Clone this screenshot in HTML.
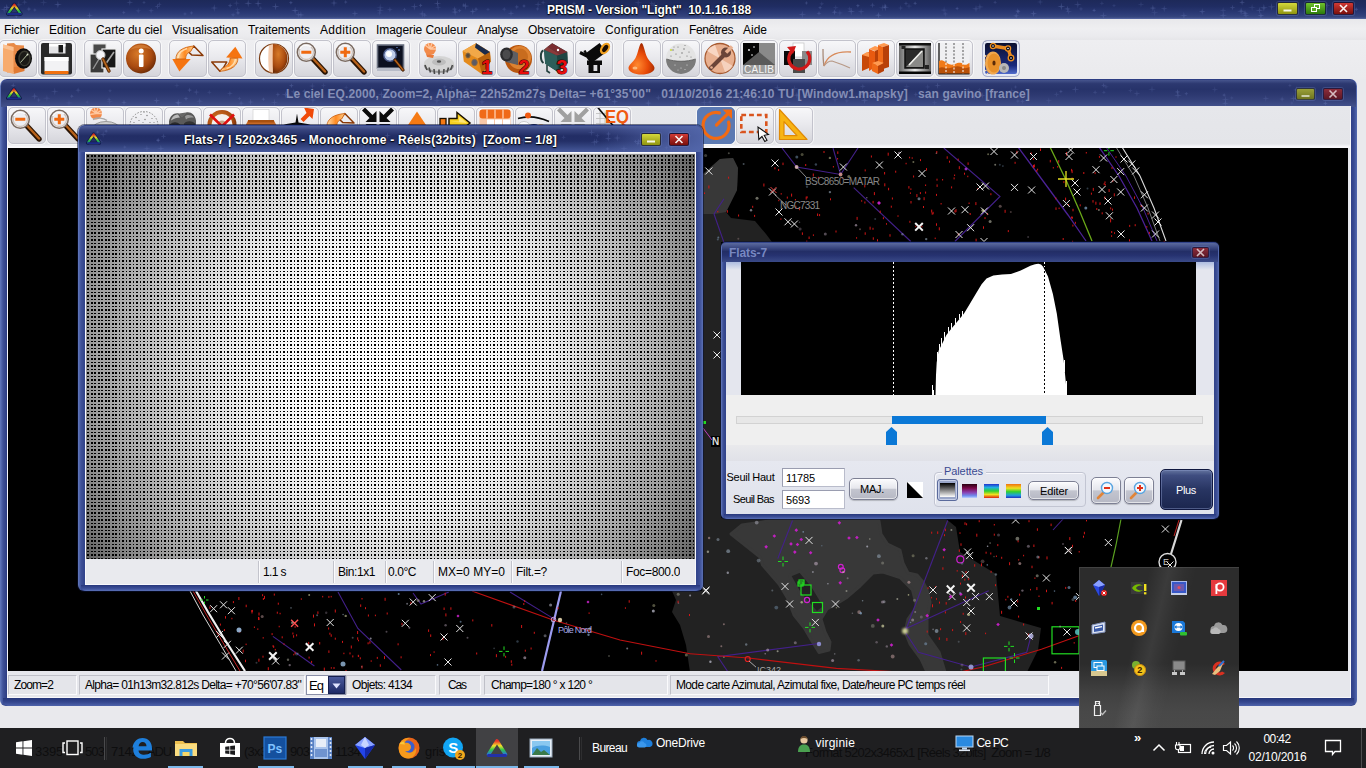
<!DOCTYPE html>
<html><head><meta charset="utf-8"><title>PRISM</title>
<style>
*{box-sizing:border-box;margin:0;padding:0}
html,body{width:1366px;height:768px;overflow:hidden;background:#e9e9ed;font-family:"Liberation Sans",sans-serif;font-size:12px;color:#000}
.a,.t,svg{position:absolute}
.t{white-space:pre}
.tbar{background:linear-gradient(#1d2959 0%,#202d63 35%,#2b3a76 70%,#36467f 90%,#5a6aa6 100%)}
.tb{position:absolute;width:38px;height:37px;border:1px solid #c3c3cc;border-radius:5px;background:linear-gradient(#f7f7f9 0%,#eaeaee 45%,#d5d5db 100%);box-shadow:0 0 0 1px rgba(255,255,255,.6);overflow:hidden}
.tb svg{left:0;top:0}
.wb{position:absolute;border-radius:2px;border:1px solid rgba(220,225,255,.45)}
.sp{position:absolute;top:675px;height:20px;border:1px solid #bfc0c8;border-right-color:#fafafc;border-bottom-color:#fafafc;background:#e4e5ea}
.btn{position:absolute;border:1px solid #7d8094;border-radius:5px;background:linear-gradient(#fcfcfe 0%,#e6e7ed 46%,#c3c5cf 52%,#b6b8c4 100%);box-shadow:0 1px 1px rgba(0,0,0,.2),inset 0 0 0 1px rgba(255,255,255,.6)}

</style></head><body>
<div class="a tbar" style="left:0;top:0;width:1366px;height:19px"></div>
<svg style="left:0px;top:0px" width="1366" height="18" viewBox="0 0 1366 18"><path d="M185.0 11.9L185.6 13.3L187.0 13.9L185.6 14.5L185.0 15.9L184.4 14.5L183.0 13.9L184.4 13.3Z" fill="#7f90d0" opacity="0.20"/><path d="M676.8 4.8L677.4 7.7L680.3 8.3L677.4 8.9L676.8 11.8L676.2 8.9L673.3 8.3L676.2 7.7Z" fill="#7f90d0" opacity="0.29"/><path d="M129.8 -1.1L130.4 1.8L133.3 2.4L130.4 3.0L129.8 5.9L129.2 3.0L126.3 2.4L129.2 1.8Z" fill="#7f90d0" opacity="0.23"/><path d="M1040.2 -1.5L1040.8 1.4L1043.7 2.0L1040.8 2.6L1040.2 5.5L1039.6 2.6L1036.7 2.0L1039.6 1.4Z" fill="#7f90d0" opacity="0.20"/><path d="M1094.1 8.3L1094.7 9.7L1096.1 10.3L1094.7 10.9L1094.1 12.3L1093.5 10.9L1092.1 10.3L1093.5 9.7Z" fill="#7f90d0" opacity="0.30"/><path d="M43.7 -1.6L44.3 1.8L47.7 2.4L44.3 3.0L43.7 6.4L43.1 3.0L39.7 2.4L43.1 1.8Z" fill="#7f90d0" opacity="0.16"/><path d="M1202.2 8.1L1202.8 11.0L1205.7 11.6L1202.8 12.2L1202.2 15.1L1201.6 12.2L1198.7 11.6L1201.6 11.0Z" fill="#7f90d0" opacity="0.28"/><path d="M720.6 9.2L721.2 12.1L724.1 12.7L721.2 13.3L720.6 16.2L720.0 13.3L717.1 12.7L720.0 12.1Z" fill="#7f90d0" opacity="0.25"/><path d="M472.8 8.0L473.4 10.9L476.3 11.5L473.4 12.1L472.8 15.0L472.2 12.1L469.3 11.5L472.2 10.9Z" fill="#7f90d0" opacity="0.31"/><path d="M1263.9 3.8L1264.5 7.2L1267.9 7.8L1264.5 8.4L1263.9 11.8L1263.3 8.4L1259.9 7.8L1263.3 7.2Z" fill="#7f90d0" opacity="0.31"/><path d="M138.2 7.8L138.8 10.2L141.2 10.8L138.8 11.4L138.2 13.8L137.6 11.4L135.2 10.8L137.6 10.2Z" fill="#7f90d0" opacity="0.18"/><path d="M455.1 8.1L455.7 11.5L459.1 12.1L455.7 12.7L455.1 16.1L454.5 12.7L451.1 12.1L454.5 11.5Z" fill="#7f90d0" opacity="0.31"/><path d="M576.9 11.1L577.5 13.0L579.4 13.6L577.5 14.2L576.9 16.1L576.3 14.2L574.4 13.6L576.3 13.0Z" fill="#7f90d0" opacity="0.21"/><path d="M802.3 10.4L802.9 13.8L806.3 14.4L802.9 15.0L802.3 18.4L801.7 15.0L798.3 14.4L801.7 13.8Z" fill="#7f90d0" opacity="0.22"/><path d="M1164.2 5.2L1164.8 8.1L1167.7 8.7L1164.8 9.3L1164.2 12.2L1163.6 9.3L1160.7 8.7L1163.6 8.1Z" fill="#7f90d0" opacity="0.23"/><path d="M237.6 6.7L238.2 9.1L240.6 9.7L238.2 10.3L237.6 12.7L237.0 10.3L234.6 9.7L237.0 9.1Z" fill="#7f90d0" opacity="0.17"/><path d="M906.0 1.0L906.6 2.9L908.5 3.5L906.6 4.1L906.0 6.0L905.4 4.1L903.5 3.5L905.4 2.9Z" fill="#7f90d0" opacity="0.24"/><path d="M537.6 6.9L538.2 8.3L539.6 8.9L538.2 9.5L537.6 10.9L537.0 9.5L535.6 8.9L537.0 8.3Z" fill="#7f90d0" opacity="0.24"/><path d="M422.2 9.9L422.8 13.3L426.2 13.9L422.8 14.5L422.2 17.9L421.6 14.5L418.2 13.9L421.6 13.3Z" fill="#7f90d0" opacity="0.25"/><path d="M538.1 0.4L538.7 3.8L542.1 4.4L538.7 5.0L538.1 8.4L537.5 5.0L534.1 4.4L537.5 3.8Z" fill="#7f90d0" opacity="0.20"/><path d="M18.8 0.8L19.4 4.2L22.8 4.8L19.4 5.4L18.8 8.8L18.2 5.4L14.8 4.8L18.2 4.2Z" fill="#7f90d0" opacity="0.20"/><path d="M701.8 11.3L702.4 14.7L705.8 15.3L702.4 15.9L701.8 19.3L701.2 15.9L697.8 15.3L701.2 14.7Z" fill="#7f90d0" opacity="0.22"/><path d="M1241.1 7.2L1241.7 10.6L1245.1 11.2L1241.7 11.8L1241.1 15.2L1240.5 11.8L1237.1 11.2L1240.5 10.6Z" fill="#7f90d0" opacity="0.31"/><path d="M9.8 9.0L10.4 12.4L13.8 13.0L10.4 13.6L9.8 17.0L9.2 13.6L5.8 13.0L9.2 12.4Z" fill="#7f90d0" opacity="0.29"/><path d="M708.4 6.4L709.0 9.3L711.9 9.9L709.0 10.5L708.4 13.4L707.8 10.5L704.9 9.9L707.8 9.3Z" fill="#7f90d0" opacity="0.31"/><path d="M657.3 3.1L657.9 6.5L661.3 7.1L657.9 7.7L657.3 11.1L656.7 7.7L653.3 7.1L656.7 6.5Z" fill="#7f90d0" opacity="0.19"/><path d="M689.4 5.8L690.0 8.2L692.4 8.8L690.0 9.4L689.4 11.8L688.8 9.4L686.4 8.8L688.8 8.2Z" fill="#7f90d0" opacity="0.23"/><path d="M4.2 5.6L4.8 9.0L8.2 9.6L4.8 10.2L4.2 13.6L3.6 10.2L0.2 9.6L3.6 9.0Z" fill="#7f90d0" opacity="0.21"/><path d="M819.0 10.8L819.6 12.7L821.5 13.3L819.6 13.9L819.0 15.8L818.4 13.9L816.5 13.3L818.4 12.7Z" fill="#7f90d0" opacity="0.25"/><path d="M248.2 -0.7L248.8 2.7L252.2 3.3L248.8 3.9L248.2 7.3L247.6 3.9L244.2 3.3L247.6 2.7Z" fill="#7f90d0" opacity="0.29"/><path d="M1114.0 3.6L1114.6 5.0L1116.0 5.6L1114.6 6.2L1114.0 7.6L1113.4 6.2L1112.0 5.6L1113.4 5.0Z" fill="#7f90d0" opacity="0.17"/><path d="M24.7 -0.8L25.3 1.6L27.7 2.2L25.3 2.8L24.7 5.2L24.1 2.8L21.7 2.2L24.1 1.6Z" fill="#7f90d0" opacity="0.20"/><path d="M151.1 7.7L151.7 10.1L154.1 10.7L151.7 11.3L151.1 13.7L150.5 11.3L148.1 10.7L150.5 10.1Z" fill="#7f90d0" opacity="0.21"/><path d="M230.1 3.1L230.7 5.0L232.6 5.6L230.7 6.2L230.1 8.1L229.5 6.2L227.6 5.6L229.5 5.0Z" fill="#7f90d0" opacity="0.27"/><path d="M884.9 3.1L885.5 5.5L887.9 6.1L885.5 6.7L884.9 9.1L884.3 6.7L881.9 6.1L884.3 5.5Z" fill="#7f90d0" opacity="0.24"/><path d="M157.5 3.4L158.1 5.8L160.5 6.4L158.1 7.0L157.5 9.4L156.9 7.0L154.5 6.4L156.9 5.8Z" fill="#7f90d0" opacity="0.23"/><path d="M258.1 -0.5L258.7 2.9L262.1 3.5L258.7 4.1L258.1 7.5L257.5 4.1L254.1 3.5L257.5 2.9Z" fill="#7f90d0" opacity="0.32"/><path d="M1317.1 6.0L1317.7 7.4L1319.1 8.0L1317.7 8.6L1317.1 10.0L1316.5 8.6L1315.1 8.0L1316.5 7.4Z" fill="#7f90d0" opacity="0.20"/><path d="M543.1 -0.0L543.7 1.9L545.6 2.5L543.7 3.1L543.1 5.0L542.5 3.1L540.6 2.5L542.5 1.9Z" fill="#7f90d0" opacity="0.23"/><path d="M691.6 5.5L692.2 7.4L694.1 8.0L692.2 8.6L691.6 10.5L691.0 8.6L689.1 8.0L691.0 7.4Z" fill="#7f90d0" opacity="0.32"/><path d="M861.1 8.2L861.7 11.1L864.6 11.7L861.7 12.3L861.1 15.2L860.5 12.3L857.6 11.7L860.5 11.1Z" fill="#7f90d0" opacity="0.20"/><path d="M885.3 3.5L885.9 6.9L889.3 7.5L885.9 8.1L885.3 11.5L884.7 8.1L881.3 7.5L884.7 6.9Z" fill="#7f90d0" opacity="0.29"/><path d="M900.7 5.0L901.3 7.4L903.7 8.0L901.3 8.6L900.7 11.0L900.1 8.6L897.7 8.0L900.1 7.4Z" fill="#7f90d0" opacity="0.18"/><path d="M290.9 0.7L291.5 2.1L292.9 2.7L291.5 3.3L290.9 4.7L290.3 3.3L288.9 2.7L290.3 2.1Z" fill="#7f90d0" opacity="0.30"/><path d="M424.7 12.7L425.3 14.6L427.2 15.2L425.3 15.8L424.7 17.7L424.1 15.8L422.2 15.2L424.1 14.6Z" fill="#7f90d0" opacity="0.23"/><path d="M345.7 0.1L346.3 1.5L347.7 2.1L346.3 2.7L345.7 4.1L345.1 2.7L343.7 2.1L345.1 1.5Z" fill="#7f90d0" opacity="0.25"/><path d="M298.4 11.1L299.0 14.0L301.9 14.6L299.0 15.2L298.4 18.1L297.8 15.2L294.9 14.6L297.8 14.0Z" fill="#7f90d0" opacity="0.19"/><path d="M1183.9 11.6L1184.5 15.0L1187.9 15.6L1184.5 16.2L1183.9 19.6L1183.3 16.2L1179.9 15.6L1183.3 15.0Z" fill="#7f90d0" opacity="0.24"/><path d="M516.8 4.4L517.4 6.3L519.3 6.9L517.4 7.5L516.8 9.4L516.2 7.5L514.3 6.9L516.2 6.3Z" fill="#7f90d0" opacity="0.25"/><path d="M1223.1 6.8L1223.7 9.7L1226.6 10.3L1223.7 10.9L1223.1 13.8L1222.5 10.9L1219.6 10.3L1222.5 9.7Z" fill="#7f90d0" opacity="0.18"/><path d="M909.0 2.6L909.6 5.5L912.5 6.1L909.6 6.7L909.0 9.6L908.4 6.7L905.5 6.1L908.4 5.5Z" fill="#7f90d0" opacity="0.16"/><path d="M835.7 4.6L836.3 7.0L838.7 7.6L836.3 8.2L835.7 10.6L835.1 8.2L832.7 7.6L835.1 7.0Z" fill="#7f90d0" opacity="0.16"/><path d="M275.6 2.6L276.2 6.0L279.6 6.6L276.2 7.2L275.6 10.6L275.0 7.2L271.6 6.6L275.0 6.0Z" fill="#7f90d0" opacity="0.29"/><path d="M463.8 3.0L464.4 4.4L465.8 5.0L464.4 5.6L463.8 7.0L463.2 5.6L461.8 5.0L463.2 4.4Z" fill="#7f90d0" opacity="0.29"/><path d="M1271.6 2.8L1272.2 6.2L1275.6 6.8L1272.2 7.4L1271.6 10.8L1271.0 7.4L1267.6 6.8L1271.0 6.2Z" fill="#7f90d0" opacity="0.24"/><path d="M1344.3 3.3L1344.9 4.7L1346.3 5.3L1344.9 5.9L1344.3 7.3L1343.7 5.9L1342.3 5.3L1343.7 4.7Z" fill="#7f90d0" opacity="0.17"/><path d="M233.1 12.3L233.7 14.2L235.6 14.8L233.7 15.4L233.1 17.3L232.5 15.4L230.6 14.8L232.5 14.2Z" fill="#7f90d0" opacity="0.20"/><path d="M454.5 6.1L455.1 8.5L457.5 9.1L455.1 9.7L454.5 12.1L453.9 9.7L451.5 9.1L453.9 8.5Z" fill="#7f90d0" opacity="0.22"/><path d="M465.5 2.1L466.1 5.5L469.5 6.1L466.1 6.7L465.5 10.1L464.9 6.7L461.5 6.1L464.9 5.5Z" fill="#7f90d0" opacity="0.28"/><path d="M976.0 4.8L976.6 8.2L980.0 8.8L976.6 9.4L976.0 12.8L975.4 9.4L972.0 8.8L975.4 8.2Z" fill="#7f90d0" opacity="0.25"/><path d="M144.0 0.5L144.6 1.9L146.0 2.5L144.6 3.1L144.0 4.5L143.4 3.1L142.0 2.5L143.4 1.9Z" fill="#7f90d0" opacity="0.22"/><path d="M1352.1 1.6L1352.7 3.5L1354.6 4.1L1352.7 4.7L1352.1 6.6L1351.5 4.7L1349.6 4.1L1351.5 3.5Z" fill="#7f90d0" opacity="0.21"/><path d="M839.9 9.4L840.5 12.3L843.4 12.9L840.5 13.5L839.9 16.4L839.3 13.5L836.4 12.9L839.3 12.3Z" fill="#7f90d0" opacity="0.17"/><path d="M751.5 6.9L752.1 9.3L754.5 9.9L752.1 10.5L751.5 12.9L750.9 10.5L748.5 9.9L750.9 9.3Z" fill="#7f90d0" opacity="0.22"/><path d="M404.5 7.5L405.1 8.9L406.5 9.5L405.1 10.1L404.5 11.5L403.9 10.1L402.5 9.5L403.9 8.9Z" fill="#7f90d0" opacity="0.23"/><path d="M379.5 10.0L380.1 12.4L382.5 13.0L380.1 13.6L379.5 16.0L378.9 13.6L376.5 13.0L378.9 12.4Z" fill="#7f90d0" opacity="0.16"/><path d="M915.1 1.3L915.7 2.7L917.1 3.3L915.7 3.9L915.1 5.3L914.5 3.9L913.1 3.3L914.5 2.7Z" fill="#7f90d0" opacity="0.29"/><path d="M1077.8 0.6L1078.4 4.0L1081.8 4.6L1078.4 5.2L1077.8 8.6L1077.2 5.2L1073.8 4.6L1077.2 4.0Z" fill="#7f90d0" opacity="0.23"/><path d="M159.4 1.8L160.0 3.7L161.9 4.3L160.0 4.9L159.4 6.8L158.8 4.9L156.9 4.3L158.8 3.7Z" fill="#7f90d0" opacity="0.19"/><path d="M1152.9 4.6L1153.5 7.5L1156.4 8.1L1153.5 8.7L1152.9 11.6L1152.3 8.7L1149.4 8.1L1152.3 7.5Z" fill="#7f90d0" opacity="0.29"/><path d="M741.5 9.5L742.1 12.9L745.5 13.5L742.1 14.1L741.5 17.5L740.9 14.1L737.5 13.5L740.9 12.9Z" fill="#7f90d0" opacity="0.20"/><path d="M651.7 0.4L652.3 2.8L654.7 3.4L652.3 4.0L651.7 6.4L651.1 4.0L648.7 3.4L651.1 2.8Z" fill="#7f90d0" opacity="0.17"/><path d="M16.3 12.8L16.9 15.2L19.3 15.8L16.9 16.4L16.3 18.8L15.7 16.4L13.3 15.8L15.7 15.2Z" fill="#7f90d0" opacity="0.28"/><path d="M438.2 4.0L438.8 6.9L441.7 7.5L438.8 8.1L438.2 11.0L437.6 8.1L434.7 7.5L437.6 6.9Z" fill="#7f90d0" opacity="0.17"/><path d="M1246.0 12.1L1246.6 15.0L1249.5 15.6L1246.6 16.2L1246.0 19.1L1245.4 16.2L1242.5 15.6L1245.4 15.0Z" fill="#7f90d0" opacity="0.18"/><path d="M295.1 6.6L295.7 10.0L299.1 10.6L295.7 11.2L295.1 14.6L294.5 11.2L291.1 10.6L294.5 10.0Z" fill="#7f90d0" opacity="0.30"/><path d="M640.7 4.5L641.3 6.4L643.2 7.0L641.3 7.6L640.7 9.5L640.1 7.6L638.2 7.0L640.1 6.4Z" fill="#7f90d0" opacity="0.25"/><path d="M420.6 3.4L421.2 4.8L422.6 5.4L421.2 6.0L420.6 7.4L420.0 6.0L418.6 5.4L420.0 4.8Z" fill="#7f90d0" opacity="0.29"/><path d="M123.8 10.5L124.4 11.9L125.8 12.5L124.4 13.1L123.8 14.5L123.2 13.1L121.8 12.5L123.2 11.9Z" fill="#7f90d0" opacity="0.26"/><path d="M878.4 11.7L879.0 14.6L881.9 15.2L879.0 15.8L878.4 18.7L877.8 15.8L874.9 15.2L877.8 14.6Z" fill="#7f90d0" opacity="0.31"/><path d="M57.9 0.6L58.5 4.0L61.9 4.6L58.5 5.2L57.9 8.6L57.3 5.2L53.9 4.6L57.3 4.0Z" fill="#7f90d0" opacity="0.30"/><path d="M414.4 2.7L415.0 6.1L418.4 6.7L415.0 7.3L414.4 10.7L413.8 7.3L410.4 6.7L413.8 6.1Z" fill="#7f90d0" opacity="0.26"/><path d="M1101.9 0.8L1102.5 2.7L1104.4 3.3L1102.5 3.9L1101.9 5.8L1101.3 3.9L1099.4 3.3L1101.3 2.7Z" fill="#7f90d0" opacity="0.16"/><path d="M334.0 -1.0L334.6 2.4L338.0 3.0L334.6 3.6L334.0 7.0L333.4 3.6L330.0 3.0L333.4 2.4Z" fill="#7f90d0" opacity="0.30"/><path d="M995.1 0.3L995.7 1.7L997.1 2.3L995.7 2.9L995.1 4.3L994.5 2.9L993.1 2.3L994.5 1.7Z" fill="#7f90d0" opacity="0.21"/><path d="M1081.0 6.4L1081.6 8.3L1083.5 8.9L1081.6 9.5L1081.0 11.4L1080.4 9.5L1078.5 8.9L1080.4 8.3Z" fill="#7f90d0" opacity="0.18"/><path d="M1061.3 2.6L1061.9 6.0L1065.3 6.6L1061.9 7.2L1061.3 10.6L1060.7 7.2L1057.3 6.6L1060.7 6.0Z" fill="#7f90d0" opacity="0.31"/><path d="M238.0 10.4L238.6 12.3L240.5 12.9L238.6 13.5L238.0 15.4L237.4 13.5L235.5 12.9L237.4 12.3Z" fill="#7f90d0" opacity="0.29"/><path d="M437.5 -0.5L438.1 2.9L441.5 3.5L438.1 4.1L437.5 7.5L436.9 4.1L433.5 3.5L436.9 2.9Z" fill="#7f90d0" opacity="0.29"/><path d="M821.8 1.3L822.4 3.2L824.3 3.8L822.4 4.4L821.8 6.3L821.2 4.4L819.3 3.8L821.2 3.2Z" fill="#7f90d0" opacity="0.18"/><path d="M1242.1 -0.6L1242.7 1.8L1245.1 2.4L1242.7 3.0L1242.1 5.4L1241.5 3.0L1239.1 2.4L1241.5 1.8Z" fill="#7f90d0" opacity="0.29"/><path d="M851.2 7.4L851.8 10.8L855.2 11.4L851.8 12.0L851.2 15.4L850.6 12.0L847.2 11.4L850.6 10.8Z" fill="#7f90d0" opacity="0.29"/><path d="M1018.3 9.2L1018.9 11.1L1020.8 11.7L1018.9 12.3L1018.3 14.2L1017.7 12.3L1015.8 11.7L1017.7 11.1Z" fill="#7f90d0" opacity="0.21"/><path d="M734.1 0.2L734.7 2.1L736.6 2.7L734.7 3.3L734.1 5.2L733.5 3.3L731.6 2.7L733.5 2.1Z" fill="#7f90d0" opacity="0.20"/><path d="M89.7 12.0L90.3 14.9L93.2 15.5L90.3 16.1L89.7 19.0L89.1 16.1L86.2 15.5L89.1 14.9Z" fill="#7f90d0" opacity="0.25"/><path d="M739.4 10.4L740.0 13.3L742.9 13.9L740.0 14.5L739.4 17.4L738.8 14.5L735.9 13.9L738.8 13.3Z" fill="#7f90d0" opacity="0.16"/><path d="M1141.0 0.9L1141.6 3.8L1144.5 4.4L1141.6 5.0L1141.0 7.9L1140.4 5.0L1137.5 4.4L1140.4 3.8Z" fill="#7f90d0" opacity="0.16"/><path d="M882.4 3.8L883.0 7.2L886.4 7.8L883.0 8.4L882.4 11.8L881.8 8.4L878.4 7.8L881.8 7.2Z" fill="#7f90d0" opacity="0.16"/><path d="M944.1 6.1L944.7 9.5L948.1 10.1L944.7 10.7L944.1 14.1L943.5 10.7L940.1 10.1L943.5 9.5Z" fill="#7f90d0" opacity="0.18"/><path d="M354.9 10.1L355.5 13.0L358.4 13.6L355.5 14.2L354.9 17.1L354.3 14.2L351.4 13.6L354.3 13.0Z" fill="#7f90d0" opacity="0.25"/><path d="M236.5 -0.3L237.1 2.6L240.0 3.2L237.1 3.8L236.5 6.7L235.9 3.8L233.0 3.2L235.9 2.6Z" fill="#7f90d0" opacity="0.16"/><path d="M722.1 5.5L722.7 8.4L725.6 9.0L722.7 9.6L722.1 12.5L721.5 9.6L718.6 9.0L721.5 8.4Z" fill="#7f90d0" opacity="0.31"/><path d="M872.5 2.2L873.1 4.6L875.5 5.2L873.1 5.8L872.5 8.2L871.9 5.8L869.5 5.2L871.9 4.6Z" fill="#7f90d0" opacity="0.24"/><path d="M654.2 1.7L654.8 4.6L657.7 5.2L654.8 5.8L654.2 8.7L653.6 5.8L650.7 5.2L653.6 4.6Z" fill="#7f90d0" opacity="0.21"/><path d="M834.6 9.2L835.2 11.6L837.6 12.2L835.2 12.8L834.6 15.2L834.0 12.8L831.6 12.2L834.0 11.6Z" fill="#7f90d0" opacity="0.32"/><path d="M300.9 10.9L301.5 14.3L304.9 14.9L301.5 15.5L300.9 18.9L300.3 15.5L296.9 14.9L300.3 14.3Z" fill="#7f90d0" opacity="0.26"/><path d="M504.2 6.7L504.8 8.6L506.7 9.2L504.8 9.8L504.2 11.7L503.6 9.8L501.7 9.2L503.6 8.6Z" fill="#7f90d0" opacity="0.21"/><path d="M945.3 10.9L945.9 13.3L948.3 13.9L945.9 14.5L945.3 16.9L944.7 14.5L942.3 13.9L944.7 13.3Z" fill="#7f90d0" opacity="0.19"/><path d="M957.1 6.5L957.7 7.9L959.1 8.5L957.7 9.1L957.1 10.5L956.5 9.1L955.1 8.5L956.5 7.9Z" fill="#7f90d0" opacity="0.30"/><path d="M1223.2 11.4L1223.8 14.8L1227.2 15.4L1223.8 16.0L1223.2 19.4L1222.6 16.0L1219.2 15.4L1222.6 14.8Z" fill="#7f90d0" opacity="0.22"/><path d="M214.2 4.0L214.8 7.4L218.2 8.0L214.8 8.6L214.2 12.0L213.6 8.6L210.2 8.0L213.6 7.4Z" fill="#7f90d0" opacity="0.28"/><path d="M1067.4 5.4L1068.0 8.3L1070.9 8.9L1068.0 9.5L1067.4 12.4L1066.8 9.5L1063.9 8.9L1066.8 8.3Z" fill="#7f90d0" opacity="0.27"/><path d="M476.0 6.7L476.6 8.6L478.5 9.2L476.6 9.8L476.0 11.7L475.4 9.8L473.5 9.2L475.4 8.6Z" fill="#7f90d0" opacity="0.25"/><path d="M1356.3 7.3L1356.9 8.7L1358.3 9.3L1356.9 9.9L1356.3 11.3L1355.7 9.9L1354.3 9.3L1355.7 8.7Z" fill="#7f90d0" opacity="0.29"/><path d="M857.9 3.7L858.5 5.1L859.9 5.7L858.5 6.3L857.9 7.7L857.3 6.3L855.9 5.7L857.3 5.1Z" fill="#7f90d0" opacity="0.31"/><path d="M191.5 10.9L192.1 12.3L193.5 12.9L192.1 13.5L191.5 14.9L190.9 13.5L189.5 12.9L190.9 12.3Z" fill="#7f90d0" opacity="0.23"/><path d="M1260.9 12.1L1261.5 15.0L1264.4 15.6L1261.5 16.2L1260.9 19.1L1260.3 16.2L1257.4 15.6L1260.3 15.0Z" fill="#7f90d0" opacity="0.31"/><path d="M1232.5 4.6L1233.1 7.0L1235.5 7.6L1233.1 8.2L1232.5 10.6L1231.9 8.2L1229.5 7.6L1231.9 7.0Z" fill="#7f90d0" opacity="0.23"/><path d="M849.7 6.3L850.3 8.2L852.2 8.8L850.3 9.4L849.7 11.3L849.1 9.4L847.2 8.8L849.1 8.2Z" fill="#7f90d0" opacity="0.18"/><path d="M820.1 5.7L820.7 7.1L822.1 7.7L820.7 8.3L820.1 9.7L819.5 8.3L818.1 7.7L819.5 7.1Z" fill="#7f90d0" opacity="0.27"/><path d="M380.2 3.3L380.8 6.7L384.2 7.3L380.8 7.9L380.2 11.3L379.6 7.9L376.2 7.3L379.6 6.7Z" fill="#7f90d0" opacity="0.16"/><path d="M260.6 6.1L261.2 7.5L262.6 8.1L261.2 8.7L260.6 10.1L260.0 8.7L258.6 8.1L260.0 7.5Z" fill="#7f90d0" opacity="0.16"/><path d="M1327.4 2.4L1328.0 4.8L1330.4 5.4L1328.0 6.0L1327.4 8.4L1326.8 6.0L1324.4 5.4L1326.8 4.8Z" fill="#7f90d0" opacity="0.19"/><path d="M389.9 6.6L390.5 9.0L392.9 9.6L390.5 10.2L389.9 12.6L389.3 10.2L386.9 9.6L389.3 9.0Z" fill="#7f90d0" opacity="0.21"/><path d="M1033.6 10.2L1034.2 13.1L1037.1 13.7L1034.2 14.3L1033.6 17.2L1033.0 14.3L1030.1 13.7L1033.0 13.1Z" fill="#7f90d0" opacity="0.29"/><path d="M1103.4 11.6L1104.0 15.0L1107.4 15.6L1104.0 16.2L1103.4 19.6L1102.8 16.2L1099.4 15.6L1102.8 15.0Z" fill="#7f90d0" opacity="0.22"/><path d="M574.0 1.2L574.6 3.1L576.5 3.7L574.6 4.3L574.0 6.2L573.4 4.3L571.5 3.7L573.4 3.1Z" fill="#7f90d0" opacity="0.25"/><path d="M524.0 4.0L524.6 5.4L526.0 6.0L524.6 6.6L524.0 8.0L523.4 6.6L522.0 6.0L523.4 5.4Z" fill="#7f90d0" opacity="0.30"/><path d="M34.9 8.0L35.5 9.4L36.9 10.0L35.5 10.6L34.9 12.0L34.3 10.6L32.9 10.0L34.3 9.4Z" fill="#7f90d0" opacity="0.25"/><path d="M1316.3 10.2L1316.9 12.1L1318.8 12.7L1316.9 13.3L1316.3 15.2L1315.7 13.3L1313.8 12.7L1315.7 12.1Z" fill="#7f90d0" opacity="0.17"/><path d="M511.0 9.8L511.6 12.7L514.5 13.3L511.6 13.9L511.0 16.8L510.4 13.9L507.5 13.3L510.4 12.7Z" fill="#7f90d0" opacity="0.24"/><path d="M488.0 7.4L488.6 8.8L490.0 9.4L488.6 10.0L488.0 11.4L487.4 10.0L486.0 9.4L487.4 8.8Z" fill="#7f90d0" opacity="0.18"/><path d="M979.9 2.9L980.5 6.3L983.9 6.9L980.5 7.5L979.9 10.9L979.3 7.5L975.9 6.9L979.3 6.3Z" fill="#7f90d0" opacity="0.22"/><path d="M1068.6 8.1L1069.2 11.0L1072.1 11.6L1069.2 12.2L1068.6 15.1L1068.0 12.2L1065.1 11.6L1068.0 11.0Z" fill="#7f90d0" opacity="0.18"/><path d="M1252.1 3.4L1252.7 6.8L1256.1 7.4L1252.7 8.0L1252.1 11.4L1251.5 8.0L1248.1 7.4L1251.5 6.8Z" fill="#7f90d0" opacity="0.16"/><path d="M380.1 6.4L380.7 9.8L384.1 10.4L380.7 11.0L380.1 14.4L379.5 11.0L376.1 10.4L379.5 9.8Z" fill="#7f90d0" opacity="0.19"/><path d="M1259.5 6.4L1260.1 9.8L1263.5 10.4L1260.1 11.0L1259.5 14.4L1258.9 11.0L1255.5 10.4L1258.9 9.8Z" fill="#7f90d0" opacity="0.23"/><path d="M1016.2 12.8L1016.8 15.2L1019.2 15.8L1016.8 16.4L1016.2 18.8L1015.6 16.4L1013.2 15.8L1015.6 15.2Z" fill="#7f90d0" opacity="0.27"/><path d="M614.1 8.9L614.7 10.8L616.6 11.4L614.7 12.0L614.1 13.9L613.5 12.0L611.6 11.4L613.5 10.8Z" fill="#7f90d0" opacity="0.22"/><path d="M6.8 3.9L7.4 6.8L10.3 7.4L7.4 8.0L6.8 10.9L6.2 8.0L3.3 7.4L6.2 6.8Z" fill="#7f90d0" opacity="0.32"/><path d="M459.6 8.7L460.2 10.1L461.6 10.7L460.2 11.3L459.6 12.7L459.0 11.3L457.6 10.7L459.0 10.1Z" fill="#7f90d0" opacity="0.24"/><path d="M1017.7 8.0L1018.3 10.4L1020.7 11.0L1018.3 11.6L1017.7 14.0L1017.1 11.6L1014.7 11.0L1017.1 10.4Z" fill="#7f90d0" opacity="0.26"/><path d="M556.3 7.3L556.9 10.2L559.8 10.8L556.9 11.4L556.3 14.3L555.7 11.4L552.8 10.8L555.7 10.2Z" fill="#7f90d0" opacity="0.29"/><path d="M1154.6 8.7L1155.2 12.1L1158.6 12.7L1155.2 13.3L1154.6 16.7L1154.0 13.3L1150.6 12.7L1154.0 12.1Z" fill="#7f90d0" opacity="0.16"/><path d="M1245.0 9.7L1245.6 12.6L1248.5 13.2L1245.6 13.8L1245.0 16.7L1244.4 13.8L1241.5 13.2L1244.4 12.6Z" fill="#7f90d0" opacity="0.30"/><path d="M743.3 1.1L743.9 3.5L746.3 4.1L743.9 4.7L743.3 7.1L742.7 4.7L740.3 4.1L742.7 3.5Z" fill="#7f90d0" opacity="0.24"/><path d="M638.2 -1.4L638.8 2.0L642.2 2.6L638.8 3.2L638.2 6.6L637.6 3.2L634.2 2.6L637.6 2.0Z" fill="#7f90d0" opacity="0.18"/><path d="M806.4 1.0L807.0 2.4L808.4 3.0L807.0 3.6L806.4 5.0L805.8 3.6L804.4 3.0L805.8 2.4Z" fill="#7f90d0" opacity="0.27"/><path d="M28.9 6.6L29.5 8.5L31.4 9.1L29.5 9.7L28.9 11.6L28.3 9.7L26.4 9.1L28.3 8.5Z" fill="#7f90d0" opacity="0.27"/><path d="M549.4 7.6L550.0 11.0L553.4 11.6L550.0 12.2L549.4 15.6L548.8 12.2L545.4 11.6L548.8 11.0Z" fill="#7f90d0" opacity="0.21"/></svg>
<svg style="left:6px;top:2px" width="16.7" height="14.0" viewBox="0 0 18 15"><defs><linearGradient id="pl" x1="0" y1="1" x2="0" y2="0"><stop offset="0" stop-color="#1f8f7a"/><stop offset=".3" stop-color="#2fc03a"/><stop offset=".62" stop-color="#e8d828"/><stop offset="1" stop-color="#d82a22"/></linearGradient></defs><path d="M2.2 12.6 L9 2.6 L15.8 12.6" fill="none" stroke="#141c4a" stroke-width="4.2" stroke-linejoin="round" stroke-linecap="round"/><path d="M2.2 13 L15.8 13" stroke="#141c4a" stroke-width="3.6" stroke-linecap="round"/><path d="M2.4 12.4 L9 2.8 L15.6 12.4" fill="none" stroke="url(#pl)" stroke-width="2.4" stroke-linejoin="round" stroke-linecap="round"/><path d="M2.2 13 L15.8 13" stroke="#1b2a86" stroke-width="2.2" stroke-linecap="round"/></svg>
<span class="t" style="left:547px;top:2.0px;font-size:12px;line-height:16px;color:#fff;font-weight:bold;letter-spacing:-0.059px;text-shadow:0 0 2px #000,0 1px 1px #000;">PRISM - Version &quot;Light&quot;&nbsp; 10.1.16.188</span>
<div class="wb" style="left:1277px;top:2px;width:21px;height:13px;background:linear-gradient(#d4d83a,#8f9410);border-color:rgba(16,20,60,.85);box-shadow:0 0 0 1px rgba(130,150,210,.25);"><svg width="19" height="11" viewBox="0 0 19 11" style="left:0;top:0"><rect x="5.5" y="6.5" width="8" height="2" fill="#fff" opacity="0.9"/></svg></div>
<div class="wb" style="left:1305px;top:2px;width:21px;height:13px;background:linear-gradient(#6fc22c,#2d7a0c);border-color:rgba(16,20,60,.85);box-shadow:0 0 0 1px rgba(130,150,210,.25);"><svg width="19" height="11" viewBox="0 0 19 11" style="left:0;top:0"><rect x="8.5" y="1.5" width="5" height="4" fill="none" stroke="#fff"/><rect x="5.5" y="4.5" width="5" height="4" fill="#5aa820" stroke="#fff"/></svg></div>
<div class="wb" style="left:1333px;top:2px;width:21px;height:13px;background:linear-gradient(#d23a34,#7a0f0c);border-color:rgba(16,20,60,.85);box-shadow:0 0 0 1px rgba(130,150,210,.25);"><svg width="19" height="11" viewBox="0 0 19 11" style="left:0;top:0"><path d="M6.0 2.0L13.0 9.0M13.0 2.0L6.0 9.0" stroke="#fff" stroke-width="1.6" opacity="0.95"/></svg></div>
<div class="a" style="left:0;top:19px;width:1366px;height:21px;background:linear-gradient(#e8e8eb,#efeff1 45%,#ebebee 80%,#e6e6e9)"></div>
<span class="t" style="left:4px;top:22.0px;font-size:12px;line-height:16px;color:#000;letter-spacing:-0.145px;">Fichier</span>
<span class="t" style="left:49px;top:22.0px;font-size:12px;line-height:16px;color:#000;letter-spacing:0.042px;">Edition</span>
<span class="t" style="left:96px;top:22.0px;font-size:12px;line-height:16px;color:#000;letter-spacing:-0.106px;">Carte du ciel</span>
<span class="t" style="left:172px;top:22.0px;font-size:12px;line-height:16px;color:#000;letter-spacing:-0.089px;">Visualisation</span>
<span class="t" style="left:248px;top:22.0px;font-size:12px;line-height:16px;color:#000;letter-spacing:-0.082px;">Traitements</span>
<span class="t" style="left:320px;top:22.0px;font-size:12px;line-height:16px;color:#000;letter-spacing:0.328px;">Addition</span>
<span class="t" style="left:376px;top:22.0px;font-size:12px;line-height:16px;color:#000;letter-spacing:-0.065px;">Imagerie Couleur</span>
<span class="t" style="left:477px;top:22.0px;font-size:12px;line-height:16px;color:#000;letter-spacing:-0.243px;">Analyse</span>
<span class="t" style="left:528px;top:22.0px;font-size:12px;line-height:16px;color:#000;letter-spacing:-0.142px;">Observatoire</span>
<span class="t" style="left:605px;top:22.0px;font-size:12px;line-height:16px;color:#000;letter-spacing:0.201px;">Configuration</span>
<span class="t" style="left:689px;top:22.0px;font-size:12px;line-height:16px;color:#000;letter-spacing:-0.42px;">Fenêtres</span>
<span class="t" style="left:743px;top:22.0px;font-size:12px;line-height:16px;color:#000;letter-spacing:-0.008px;">Aide</span>
<div class="a" style="left:0;top:40px;width:1366px;height:39px;background:linear-gradient(#eeeef1,#eaeaed)"></div>
<div class="tb" style="left:-1px;top:40px;"><svg width="36" height="35" viewBox="0 0 36 35"><defs><linearGradient id="og" x1="0" y1="0" x2="1" y2="1"><stop offset="0" stop-color="#ffb060"/><stop offset=".5" stop-color="#f57a14"/><stop offset="1" stop-color="#c85008"/></linearGradient><linearGradient id="ogv" x1="0" y1="0" x2="0" y2="1"><stop offset="0" stop-color="#ff9a3a"/><stop offset="1" stop-color="#e05a08"/></linearGradient><radialGradient id="br" cx=".4" cy=".35" r=".75"><stop offset="0" stop-color="#d87a28"/><stop offset=".6" stop-color="#a84a10"/><stop offset="1" stop-color="#5a2204"/></radialGradient><linearGradient id="shine" x1="0" y1="0" x2="1" y2="0"><stop offset="0" stop-color="#ffe0b0"/><stop offset=".5" stop-color="#ff8a20"/><stop offset="1" stop-color="#ffd090"/></linearGradient><linearGradient id="gl" x1="0" y1="0" x2="1" y2="1"><stop offset="0" stop-color="#fff"/><stop offset="1" stop-color="#c8c8d0"/></linearGradient><linearGradient id="hd" x1="0" y1="0" x2="1" y2="1"><stop offset="0" stop-color="#8a4a18"/><stop offset="1" stop-color="#3a1a04"/></linearGradient><linearGradient id="mt" x1="0" y1="0" x2="1" y2="0"><stop offset="0" stop-color="#6a6a6a"/><stop offset=".5" stop-color="#e8e8e8"/><stop offset="1" stop-color="#5a5a5a"/></linearGradient><radialGradient id="cone" cx=".35" cy=".7" r=".8"><stop offset="0" stop-color="#ff8a30"/><stop offset=".5" stop-color="#e84a08"/><stop offset="1" stop-color="#8a2000"/></radialGradient></defs><path d="M7 2.500l7-.500l2 2l8 .500v25.500l-17 1.500z" fill="#e88a48"/><path d="M13.500 26l11-1v5l-11 3z" fill="#e07a34"/><ellipse cx="23.500" cy="17.500" rx="8.500" ry="10.300" fill="#0c0c0c"/><ellipse cx="24.500" cy="17.500" rx="5.500" ry="7.300" fill="#1a1a16" stroke="#3a3a30" stroke-width="1.500"/><path d="M20.500 21.500l7-8" stroke="#d8e8c0" stroke-width="1" opacity=".8"/><circle cx="27.500" cy="13.500" r=".9" fill="#dfe8d0"/><path d="M3 3.500l10.500 2.500v27l-10.500-3z" fill="#f7ab6e"/><path d="M3 3.500l10.500 2.500v4l-10.500-3z" fill="#fbc294"/></svg></div>
<div class="tb" style="left:38px;top:40px;"><svg width="36" height="35" viewBox="0 0 36 35"><rect x="2" y="2" width="31" height="31.500" rx="2" fill="#2a2a2a"/><rect x="10" y="2.500" width="16.500" height="10" fill="#e4e4e6"/><rect x="10" y="2.500" width="16.500" height="3" fill="#fff"/><rect x="19.500" y="4" width="4.500" height="7.500" fill="#1a1a1a"/><rect x="5.500" y="16" width="24" height="14.500" fill="#f2f2f4"/><rect x="5.500" y="16" width="24" height="4" fill="#fff"/><rect x="5.500" y="30" width="24" height="3" fill="#f07010"/></svg></div>
<div class="tb" style="left:84px;top:40px;"><svg width="36" height="35" viewBox="0 0 36 35"><rect x="8" y="3" width="13" height="15" fill="#4a4a4a" stroke="#ddd"/><rect x="5" y="13" width="14" height="19" fill="#3a3a3a" stroke="#e8e8e8" stroke-width="1.200"/><rect x="17" y="8" width="14" height="19" fill="#181818" stroke="#eee" stroke-width="1.200"/><path d="M20 24l9-13" stroke="#ccc" stroke-width="1.600" opacity=".8"/><path d="M8 28l6-10" stroke="#bbb" stroke-width="1.400" opacity=".7"/><circle cx="15.500" cy="14" r="4.500" fill="#f4f4f8" stroke="#bbb"/><path d="M18 18l6 12" stroke="#5a2a08" stroke-width="3.400" stroke-linecap="round"/><path d="M18 18l6 12" stroke="#b86a20" stroke-width="1.600" stroke-linecap="round"/></svg></div>
<div class="tb" style="left:123px;top:40px;"><svg width="36" height="35" viewBox="0 0 36 35"><defs><linearGradient id="og" x1="0" y1="0" x2="1" y2="1"><stop offset="0" stop-color="#ffb060"/><stop offset=".5" stop-color="#f57a14"/><stop offset="1" stop-color="#c85008"/></linearGradient><linearGradient id="ogv" x1="0" y1="0" x2="0" y2="1"><stop offset="0" stop-color="#ff9a3a"/><stop offset="1" stop-color="#e05a08"/></linearGradient><radialGradient id="br" cx=".4" cy=".35" r=".75"><stop offset="0" stop-color="#d87a28"/><stop offset=".6" stop-color="#a84a10"/><stop offset="1" stop-color="#5a2204"/></radialGradient><linearGradient id="shine" x1="0" y1="0" x2="1" y2="0"><stop offset="0" stop-color="#ffe0b0"/><stop offset=".5" stop-color="#ff8a20"/><stop offset="1" stop-color="#ffd090"/></linearGradient><linearGradient id="gl" x1="0" y1="0" x2="1" y2="1"><stop offset="0" stop-color="#fff"/><stop offset="1" stop-color="#c8c8d0"/></linearGradient><linearGradient id="hd" x1="0" y1="0" x2="1" y2="1"><stop offset="0" stop-color="#8a4a18"/><stop offset="1" stop-color="#3a1a04"/></linearGradient><linearGradient id="mt" x1="0" y1="0" x2="1" y2="0"><stop offset="0" stop-color="#6a6a6a"/><stop offset=".5" stop-color="#e8e8e8"/><stop offset="1" stop-color="#5a5a5a"/></linearGradient><radialGradient id="cone" cx=".35" cy=".7" r=".8"><stop offset="0" stop-color="#ff8a30"/><stop offset=".5" stop-color="#e84a08"/><stop offset="1" stop-color="#8a2000"/></radialGradient></defs><circle cx="17" cy="17.500" r="15" fill="url(#br)"/><path d="M6 9a14 14 0 0 1 22 0c-6-3-16-3-22 0z" fill="#e89a50" opacity=".45"/><circle cx="17.200" cy="10" r="2.500" fill="#fff"/><rect x="14.900" y="13.500" width="4.600" height="12.500" rx="1" fill="#fff"/></svg></div>
<div class="tb" style="left:169px;top:40px;"><svg width="36" height="35" viewBox="0 0 36 35"><defs><linearGradient id="og" x1="0" y1="0" x2="1" y2="1"><stop offset="0" stop-color="#ffb060"/><stop offset=".5" stop-color="#f57a14"/><stop offset="1" stop-color="#c85008"/></linearGradient><linearGradient id="ogv" x1="0" y1="0" x2="0" y2="1"><stop offset="0" stop-color="#ff9a3a"/><stop offset="1" stop-color="#e05a08"/></linearGradient><radialGradient id="br" cx=".4" cy=".35" r=".75"><stop offset="0" stop-color="#d87a28"/><stop offset=".6" stop-color="#a84a10"/><stop offset="1" stop-color="#5a2204"/></radialGradient><linearGradient id="shine" x1="0" y1="0" x2="1" y2="0"><stop offset="0" stop-color="#ffe0b0"/><stop offset=".5" stop-color="#ff8a20"/><stop offset="1" stop-color="#ffd090"/></linearGradient><linearGradient id="gl" x1="0" y1="0" x2="1" y2="1"><stop offset="0" stop-color="#fff"/><stop offset="1" stop-color="#c8c8d0"/></linearGradient><linearGradient id="hd" x1="0" y1="0" x2="1" y2="1"><stop offset="0" stop-color="#8a4a18"/><stop offset="1" stop-color="#3a1a04"/></linearGradient><linearGradient id="mt" x1="0" y1="0" x2="1" y2="0"><stop offset="0" stop-color="#6a6a6a"/><stop offset=".5" stop-color="#e8e8e8"/><stop offset="1" stop-color="#5a5a5a"/></linearGradient><radialGradient id="cone" cx=".35" cy=".7" r=".8"><stop offset="0" stop-color="#ff8a30"/><stop offset=".5" stop-color="#e84a08"/><stop offset="1" stop-color="#8a2000"/></radialGradient></defs><path d="M18.500 11l5.300-6l9.200 9.400l-11.300-.5z" fill="#ececf0" stroke="#8a3a08" stroke-width="1.500" stroke-linejoin="round"/><path d="M2.300 18h18.400l-11.300 12.500z" fill="#f57410"/><path d="M5.900 18C6 10 13 6 23.800 5L20.700 10.500C17 12 16 14 15.600 18z" fill="url(#shine)" stroke="#c85a08" stroke-width=".8"/><path d="M8 17c.5-5 4-8 9-9.500" fill="none" stroke="#ffe6c0" stroke-width="1.600" opacity=".8"/></svg></div>
<div class="tb" style="left:208px;top:40px;"><svg width="36" height="35" viewBox="0 0 36 35"><defs><linearGradient id="og" x1="0" y1="0" x2="1" y2="1"><stop offset="0" stop-color="#ffb060"/><stop offset=".5" stop-color="#f57a14"/><stop offset="1" stop-color="#c85008"/></linearGradient><linearGradient id="ogv" x1="0" y1="0" x2="0" y2="1"><stop offset="0" stop-color="#ff9a3a"/><stop offset="1" stop-color="#e05a08"/></linearGradient><radialGradient id="br" cx=".4" cy=".35" r=".75"><stop offset="0" stop-color="#d87a28"/><stop offset=".6" stop-color="#a84a10"/><stop offset="1" stop-color="#5a2204"/></radialGradient><linearGradient id="shine" x1="0" y1="0" x2="1" y2="0"><stop offset="0" stop-color="#ffe0b0"/><stop offset=".5" stop-color="#ff8a20"/><stop offset="1" stop-color="#ffd090"/></linearGradient><linearGradient id="gl" x1="0" y1="0" x2="1" y2="1"><stop offset="0" stop-color="#fff"/><stop offset="1" stop-color="#c8c8d0"/></linearGradient><linearGradient id="hd" x1="0" y1="0" x2="1" y2="1"><stop offset="0" stop-color="#8a4a18"/><stop offset="1" stop-color="#3a1a04"/></linearGradient><linearGradient id="mt" x1="0" y1="0" x2="1" y2="0"><stop offset="0" stop-color="#6a6a6a"/><stop offset=".5" stop-color="#e8e8e8"/><stop offset="1" stop-color="#5a5a5a"/></linearGradient><radialGradient id="cone" cx=".35" cy=".7" r=".8"><stop offset="0" stop-color="#ff8a30"/><stop offset=".5" stop-color="#e84a08"/><stop offset="1" stop-color="#8a2000"/></radialGradient></defs><path d="M2.700 21.100h15l-3.500 6l-3.300 3.200z" fill="#ececf0" stroke="#8a3a08" stroke-width="1.500" stroke-linejoin="round"/><path d="M17.100 16.500l16.400 1l-7.200-11.800z" fill="#f57410"/><path d="M28.900 17.300C29 24 23 29.500 10.900 30.300L13.500 27.200C18 25.500 21 22 21.200 17z" fill="url(#shine)" stroke="#c85a08" stroke-width=".8"/><path d="M26.500 18c-.5 5-4 8-9 9.500" fill="none" stroke="#ffe6c0" stroke-width="1.600" opacity=".8"/></svg></div>
<div class="tb" style="left:255px;top:40px;"><svg width="36" height="35" viewBox="0 0 36 35"><defs><linearGradient id="og" x1="0" y1="0" x2="1" y2="1"><stop offset="0" stop-color="#ffb060"/><stop offset=".5" stop-color="#f57a14"/><stop offset="1" stop-color="#c85008"/></linearGradient><linearGradient id="ogv" x1="0" y1="0" x2="0" y2="1"><stop offset="0" stop-color="#ff9a3a"/><stop offset="1" stop-color="#e05a08"/></linearGradient><radialGradient id="br" cx=".4" cy=".35" r=".75"><stop offset="0" stop-color="#d87a28"/><stop offset=".6" stop-color="#a84a10"/><stop offset="1" stop-color="#5a2204"/></radialGradient><linearGradient id="shine" x1="0" y1="0" x2="1" y2="0"><stop offset="0" stop-color="#ffe0b0"/><stop offset=".5" stop-color="#ff8a20"/><stop offset="1" stop-color="#ffd090"/></linearGradient><linearGradient id="gl" x1="0" y1="0" x2="1" y2="1"><stop offset="0" stop-color="#fff"/><stop offset="1" stop-color="#c8c8d0"/></linearGradient><linearGradient id="hd" x1="0" y1="0" x2="1" y2="1"><stop offset="0" stop-color="#8a4a18"/><stop offset="1" stop-color="#3a1a04"/></linearGradient><linearGradient id="mt" x1="0" y1="0" x2="1" y2="0"><stop offset="0" stop-color="#6a6a6a"/><stop offset=".5" stop-color="#e8e8e8"/><stop offset="1" stop-color="#5a5a5a"/></linearGradient><radialGradient id="cone" cx=".35" cy=".7" r=".8"><stop offset="0" stop-color="#ff8a30"/><stop offset=".5" stop-color="#e84a08"/><stop offset="1" stop-color="#8a2000"/></radialGradient></defs><circle cx="18" cy="17.500" r="14.500" fill="#fff" stroke="#7a3a10" stroke-width="1.200"/><path d="M17 3a14.500 14.500 0 0 1 0 29c-1-9-1-20 0-29z" fill="url(#br)"/><path d="M13 4c-1 9-1 18 0 27c1.500.6 3 .9 4 1V3c-1.500.2-2.500.5-4 1z" fill="#f0b890" opacity=".7"/></svg></div>
<div class="tb" style="left:294px;top:40px;"><svg width="36" height="35" viewBox="0 0 36 35"><g transform="translate(0 0)"><path d="M17.500 17.500L30 31" stroke="#2a1404" stroke-width="5.400" stroke-linecap="round"/><path d="M18 17.500L30 30.500" stroke="#b8621a" stroke-width="2.400" stroke-linecap="round"/><circle cx="11.300" cy="11.300" r="9" fill="#eeeef2" stroke="#7a6a60" stroke-width="1.500"/><circle cx="11.300" cy="11.300" r="7.200" fill="none" stroke="#cfc4bc" stroke-width="1.300"/><path d="M5 8a7 7 0 0 1 11-2" fill="none" stroke="#fff" stroke-width="1.500" opacity=".9"/><path d="M6.300 11.300h10" stroke="#f06a10" stroke-width="3"/></g></svg></div>
<div class="tb" style="left:333px;top:40px;"><svg width="36" height="35" viewBox="0 0 36 35"><g transform="translate(0 0)"><path d="M17.500 17.500L30 31" stroke="#2a1404" stroke-width="5.400" stroke-linecap="round"/><path d="M18 17.500L30 30.500" stroke="#b8621a" stroke-width="2.400" stroke-linecap="round"/><circle cx="11.300" cy="11.300" r="9" fill="#eeeef2" stroke="#7a6a60" stroke-width="1.500"/><circle cx="11.300" cy="11.300" r="7.200" fill="none" stroke="#cfc4bc" stroke-width="1.300"/><path d="M5 8a7 7 0 0 1 11-2" fill="none" stroke="#fff" stroke-width="1.500" opacity=".9"/><path d="M6.300 11.300h10" stroke="#f06a10" stroke-width="3"/><path d="M11.300 6.300v10" stroke="#f06a10" stroke-width="3"/></g></svg></div>
<div class="tb" style="left:372px;top:40px;"><svg width="36" height="35" viewBox="0 0 36 35"><rect x="4.500" y="4" width="26" height="23" fill="#0c1020" stroke="#6a7080" stroke-width="1.600"/><rect x="4" y="27" width="27" height="3" fill="#b8bcc8"/><circle cx="17" cy="14" r="6" fill="#cfe0ff" opacity=".9"/><circle cx="16" cy="13" r="3" fill="#fff"/><circle cx="17" cy="14" r="6.300" fill="none" stroke="#4a5a8a" stroke-width="1.300"/><path d="M22 19l8 10" stroke="#3a1a04" stroke-width="3.200" stroke-linecap="round"/><path d="M22 19l8 10" stroke="#b8641c" stroke-width="1.400" stroke-linecap="round"/><circle cx="26" cy="9" r=".8" fill="#8af"/><circle cx="24" cy="6.500" r=".6" fill="#8af"/></svg></div>
<div class="tb" style="left:419px;top:40px;"><svg width="36" height="35" viewBox="0 0 36 35"><ellipse cx="19" cy="24.500" rx="15" ry="7.500" fill="#9a9a9a"/><ellipse cx="19" cy="22.500" rx="15" ry="7.500" fill="#d4d4d4"/><path d="M5 24l2 5M9 26.500l1.500 5M14 28l.5 5M19 28.500v5M24 28l-.5 5M28.500 26.500l-1.500 5M32.500 24l-2 5" stroke="#4a4a4a" stroke-width="1.600"/><ellipse cx="19" cy="21" rx="7" ry="3.500" fill="#bdbdbd"/><ellipse cx="19" cy="20.500" rx="2.200" ry="1.200" fill="#555"/><circle cx="10" cy="8" r="6" fill="#f28a4a"/><path d="M10 8l-5-4M10 8l-2-6M10 8l2-6M10 8l5-3M10 8l6 0" stroke="#ffc8a0" stroke-width="1.300"/><path d="M6 13l8 1l-1 3l-6-1z" fill="#e87838"/></svg></div>
<div class="tb" style="left:458px;top:40px;"><svg width="36" height="35" viewBox="0 0 36 35"><path d="M3.600 9.900L17 2.300L31 11L31.700 20.400L23 33.300L4.800 20.400z" fill="#e48a1c"/><path d="M3.600 9.900L17 2.300L31 11L19 17.500z" fill="#f2a848"/><path d="M17 2.300L31 11L30 17L16 6.400z" fill="#1a2a4a"/><path d="M19 17.500L31 11L31.700 20.400L23 33.300z" fill="#b8620c"/><ellipse cx="9" cy="14.500" rx="2.200" ry="2.600" fill="#5a4a3a" stroke="#8a6a40" stroke-width=".8"/><ellipse cx="15.500" cy="21.500" rx="2.800" ry="3.200" fill="#5a5a66" stroke="#8a6a40" stroke-width=".8"/><text x="22.5" y="33.300" font-size="19.500" font-weight="bold" fill="#e80c0c" stroke="#2a0000" stroke-width="1.100" paint-order="stroke" font-family="Liberation Sans">1</text></svg></div>
<div class="tb" style="left:497px;top:40px;"><svg width="36" height="35" viewBox="0 0 36 35"><ellipse cx="20.500" cy="18" rx="13.500" ry="14" fill="#b8560e"/><ellipse cx="21.500" cy="16.500" rx="11.500" ry="11.500" fill="#de8230"/><ellipse cx="22" cy="16" rx="8" ry="8.500" fill="#c86c1e"/><path d="M8 7l12 5v12l-12 -3z" fill="#5e5e62"/><ellipse cx="8.500" cy="13.500" rx="6.300" ry="7" fill="#2c2c2e"/><ellipse cx="8.500" cy="13.500" rx="4" ry="4.800" fill="#4a4a4c"/><text x="20.5" y="33.300" font-size="19.500" font-weight="bold" fill="#e80c0c" stroke="#2a0000" stroke-width="1.100" paint-order="stroke" font-family="Liberation Sans">2</text></svg></div>
<div class="tb" style="left:536px;top:40px;"><svg width="36" height="35" viewBox="0 0 36 35"><path d="M7 8.700L15.200 2.300L30.400 11L31 22L21 31L8.200 22.800z" fill="#1e4442"/><path d="M10.500 5.800L15.200 2.300L30.400 11L23.400 13.400z" fill="#7a2c30"/><path d="M7 8.700L19.900 14.600L21 31L8.200 22.800z" fill="#2c5e5a"/><path d="M7 8.700L10.500 5.800L23.400 13.400L19.900 14.600z" fill="#8a3a3a"/><path d="M6.500 9.500c-3.500 1-3.500 10 0 12.500" fill="none" stroke="#24403e" stroke-width="2"/><circle cx="21" cy="9" r="1.200" fill="#fff"/><path d="M10 24v6l3 2" fill="none" stroke="#24403e" stroke-width="1.600"/><text x="19.5" y="33.300" font-size="19.500" font-weight="bold" fill="#e80c0c" stroke="#2a0000" stroke-width="1.100" paint-order="stroke" font-family="Liberation Sans">3</text></svg></div>
<div class="tb" style="left:575px;top:40px;"><svg width="36" height="35" viewBox="0 0 36 35"><path d="M11.500 18L27 6.500" stroke="#0a0a0a" stroke-width="11.500" stroke-linecap="butt"/><path d="M4 11.500l7 3.500" stroke="#0a0a0a" stroke-width="3.200"/><path d="M8.500 9.500l2.500 5" stroke="#0a0a0a" stroke-width="2.400"/><ellipse cx="29" cy="7.500" rx="4.300" ry="6.400" transform="rotate(36 29 7.500)" fill="#f0a020"/><ellipse cx="29.200" cy="7.500" rx="2.300" ry="4" transform="rotate(36 29.200 7.500)" fill="#1a0c00"/><path d="M11 19.500h15v4.500h-2v8h-11.500v-8h-1.500z" fill="#0a0a0a"/><rect x="17.500" y="24" width="3.800" height="6" fill="#dcdce0"/></svg></div>
<div class="tb" style="left:623px;top:40px;"><svg width="36" height="35" viewBox="0 0 36 35"><defs><linearGradient id="og" x1="0" y1="0" x2="1" y2="1"><stop offset="0" stop-color="#ffb060"/><stop offset=".5" stop-color="#f57a14"/><stop offset="1" stop-color="#c85008"/></linearGradient><linearGradient id="ogv" x1="0" y1="0" x2="0" y2="1"><stop offset="0" stop-color="#ff9a3a"/><stop offset="1" stop-color="#e05a08"/></linearGradient><radialGradient id="br" cx=".4" cy=".35" r=".75"><stop offset="0" stop-color="#d87a28"/><stop offset=".6" stop-color="#a84a10"/><stop offset="1" stop-color="#5a2204"/></radialGradient><linearGradient id="shine" x1="0" y1="0" x2="1" y2="0"><stop offset="0" stop-color="#ffe0b0"/><stop offset=".5" stop-color="#ff8a20"/><stop offset="1" stop-color="#ffd090"/></linearGradient><linearGradient id="gl" x1="0" y1="0" x2="1" y2="1"><stop offset="0" stop-color="#fff"/><stop offset="1" stop-color="#c8c8d0"/></linearGradient><linearGradient id="hd" x1="0" y1="0" x2="1" y2="1"><stop offset="0" stop-color="#8a4a18"/><stop offset="1" stop-color="#3a1a04"/></linearGradient><linearGradient id="mt" x1="0" y1="0" x2="1" y2="0"><stop offset="0" stop-color="#6a6a6a"/><stop offset=".5" stop-color="#e8e8e8"/><stop offset="1" stop-color="#5a5a5a"/></linearGradient><radialGradient id="cone" cx=".35" cy=".7" r=".8"><stop offset="0" stop-color="#ff8a30"/><stop offset=".5" stop-color="#e84a08"/><stop offset="1" stop-color="#8a2000"/></radialGradient></defs><path d="M17.500 2c2 0 3 9 6 15c3 5 7 7 7 10c0 4-6 6.500-13 6.500s-13-2.500-13-6.500c0-3 4-5 7-10c3-6 4-15 6-15z" fill="url(#cone)"/><ellipse cx="11" cy="27" rx="2.500" ry="1.500" fill="#ffc890" opacity=".8"/></svg></div>
<div class="tb" style="left:662px;top:40px;"><svg width="36" height="35" viewBox="0 0 36 35"><circle cx="18" cy="17.500" r="15" fill="#e4e4e4"/><path d="M3 18a15 15 0 0 0 30 0c-9 3-21 3-30 0z" fill="#7a7a7a"/><path d="M3.500 18c9 3 20 3 29 0" fill="none" stroke="#555" stroke-width=".8"/><g fill="#666"><circle cx="10" cy="9" r=".7"/><circle cx="15" cy="6" r=".6"/><circle cx="21" cy="8" r=".7"/><circle cx="26" cy="11" r=".6"/><circle cx="13" cy="13" r=".6"/><circle cx="19" cy="12" r=".7"/><circle cx="24" cy="15" r=".6"/><circle cx="8" cy="15" r=".6"/><circle cx="17" cy="16" r=".5"/><circle cx="28" cy="16" r=".5"/><circle cx="11" cy="6" r=".5"/><circle cx="22" cy="4.500" r=".5"/></g><g fill="#ddd"><circle cx="12" cy="24" r=".6"/><circle cx="18" cy="27" r=".6"/><circle cx="24" cy="24" r=".6"/><circle cx="15" cy="29" r=".5"/><circle cx="22" cy="28.500" r=".5"/></g><circle cx="8" cy="9" r="1" fill="#c8d838"/></svg></div>
<div class="tb" style="left:701px;top:40px;"><svg width="36" height="35" viewBox="0 0 36 35"><defs><linearGradient id="og" x1="0" y1="0" x2="1" y2="1"><stop offset="0" stop-color="#ffb060"/><stop offset=".5" stop-color="#f57a14"/><stop offset="1" stop-color="#c85008"/></linearGradient><linearGradient id="ogv" x1="0" y1="0" x2="0" y2="1"><stop offset="0" stop-color="#ff9a3a"/><stop offset="1" stop-color="#e05a08"/></linearGradient><radialGradient id="br" cx=".4" cy=".35" r=".75"><stop offset="0" stop-color="#d87a28"/><stop offset=".6" stop-color="#a84a10"/><stop offset="1" stop-color="#5a2204"/></radialGradient><linearGradient id="shine" x1="0" y1="0" x2="1" y2="0"><stop offset="0" stop-color="#ffe0b0"/><stop offset=".5" stop-color="#ff8a20"/><stop offset="1" stop-color="#ffd090"/></linearGradient><linearGradient id="gl" x1="0" y1="0" x2="1" y2="1"><stop offset="0" stop-color="#fff"/><stop offset="1" stop-color="#c8c8d0"/></linearGradient><linearGradient id="hd" x1="0" y1="0" x2="1" y2="1"><stop offset="0" stop-color="#8a4a18"/><stop offset="1" stop-color="#3a1a04"/></linearGradient><linearGradient id="mt" x1="0" y1="0" x2="1" y2="0"><stop offset="0" stop-color="#6a6a6a"/><stop offset=".5" stop-color="#e8e8e8"/><stop offset="1" stop-color="#5a5a5a"/></linearGradient><radialGradient id="cone" cx=".35" cy=".7" r=".8"><stop offset="0" stop-color="#ff8a30"/><stop offset=".5" stop-color="#e84a08"/><stop offset="1" stop-color="#8a2000"/></radialGradient></defs><circle cx="18" cy="17.500" r="15" fill="#e8b090" stroke="#a85a30" stroke-width="1.300"/><path d="M18 17.500L5 10a15 15 0 0 1 8-6z" fill="#fbe0d0" opacity=".8"/><path d="M18 17.500L31 25a15 15 0 0 1-8 6z" fill="#fbe0d0" opacity=".7"/><path d="M9 27l13-13" stroke="#6a4438" stroke-width="4" stroke-linecap="round"/><circle cx="24" cy="11.500" r="5" fill="#6a4438"/><path d="M24 11.500l6-6" stroke="#e8b090" stroke-width="3.500"/><circle cx="9.500" cy="26.500" r="1.300" fill="#e8b090"/></svg></div>
<div class="tb" style="left:740px;top:40px;"><svg width="36" height="35" viewBox="0 0 36 35"><rect x="2" y="2" width="32" height="31" fill="#888"/><rect x="2" y="2" width="16" height="22" fill="#050505"/><rect x="18" y="2" width="16" height="16" fill="#8a8a8a"/><path d="M2 24l16-13l16 13z" fill="#5a5a5a"/><rect x="2" y="24" width="32" height="9" fill="#9a9a9a"/><circle cx="8" cy="9" r=".9" fill="#fff"/><circle cx="13" cy="6" r=".8" fill="#fff"/><circle cx="11" cy="14" r=".8" fill="#fff"/><text x="3" y="32" font-size="10" fill="#f4f4f4" font-family="Liberation Sans" textLength="30">CALIB</text></svg></div>
<div class="tb" style="left:779px;top:40px;"><svg width="36" height="35" viewBox="0 0 36 35"><rect x="13" y="2" width="11" height="14" fill="#fff" stroke="#bbb" stroke-width=".6"/><rect x="4" y="10" width="11" height="14" fill="#0a0a0a"/><rect x="22" y="10" width="10" height="14" fill="#8a8a8a"/><rect x="13" y="18" width="12" height="14" fill="#4a4a4a"/><path d="M14 8.500a10.500 10.500 0 1 0 13 2" fill="none" stroke="#d01818" stroke-width="3.200"/><path d="M7 6l9-1l-3 8z" fill="#d01818"/></svg></div>
<div class="tb" style="left:818px;top:40px;"><svg width="36" height="35" viewBox="0 0 36 35"><path d="M4 8c0 8 0 12 1 17" fill="none" stroke="#a88a78" stroke-width="1.300"/><path d="M5 25c3-10 12-15 27-14" fill="none" stroke="#d88a5a" stroke-width="1.400"/><path d="M5 25c2-3 5-5 8-5c6 2 12 4 18 7" fill="none" stroke="#b89a88" stroke-width="1.200"/></svg></div>
<div class="tb" style="left:857px;top:40px;"><svg width="36" height="35" viewBox="0 0 36 35"><path d="M4 14l7-3v16l-7 3z" fill="#c84808"/><path d="M4 14l5-3l7 2l-5 3z" fill="#ff9a50"/><path d="M11 16l5-3v14l-5 3z" fill="#e85a10"/><path d="M11 8l6-3l6 2l-6 3z" fill="#ff9a50"/><path d="M11 8l6 2.500v14l-6-2z" fill="#e85a10"/><path d="M17 10l6-3v16l-6 2z" fill="#b84008"/><path d="M20 4l6-2l5 2l-6 2z" fill="#ff9a50"/><path d="M20 4l5 2v22l-5-2z" fill="#f06a18"/><path d="M25 6l6-2v22l-6 2z" fill="#b84008"/><path d="M14 22l6-2l6 2l-6 3z" fill="#ff9a50"/><path d="M14 22l6 3v8l-6-3z" fill="#f06a18"/><path d="M20 25l6-3v8l-6 3z" fill="#b84008"/></svg></div>
<div class="tb" style="left:896px;top:40px;"><svg width="36" height="35" viewBox="0 0 36 35"><defs><linearGradient id="og" x1="0" y1="0" x2="1" y2="1"><stop offset="0" stop-color="#ffb060"/><stop offset=".5" stop-color="#f57a14"/><stop offset="1" stop-color="#c85008"/></linearGradient><linearGradient id="ogv" x1="0" y1="0" x2="0" y2="1"><stop offset="0" stop-color="#ff9a3a"/><stop offset="1" stop-color="#e05a08"/></linearGradient><radialGradient id="br" cx=".4" cy=".35" r=".75"><stop offset="0" stop-color="#d87a28"/><stop offset=".6" stop-color="#a84a10"/><stop offset="1" stop-color="#5a2204"/></radialGradient><linearGradient id="shine" x1="0" y1="0" x2="1" y2="0"><stop offset="0" stop-color="#ffe0b0"/><stop offset=".5" stop-color="#ff8a20"/><stop offset="1" stop-color="#ffd090"/></linearGradient><linearGradient id="gl" x1="0" y1="0" x2="1" y2="1"><stop offset="0" stop-color="#fff"/><stop offset="1" stop-color="#c8c8d0"/></linearGradient><linearGradient id="hd" x1="0" y1="0" x2="1" y2="1"><stop offset="0" stop-color="#8a4a18"/><stop offset="1" stop-color="#3a1a04"/></linearGradient><linearGradient id="mt" x1="0" y1="0" x2="1" y2="0"><stop offset="0" stop-color="#6a6a6a"/><stop offset=".5" stop-color="#e8e8e8"/><stop offset="1" stop-color="#5a5a5a"/></linearGradient><radialGradient id="cone" cx=".35" cy=".7" r=".8"><stop offset="0" stop-color="#ff8a30"/><stop offset=".5" stop-color="#e84a08"/><stop offset="1" stop-color="#8a2000"/></radialGradient></defs><rect x="2" y="2" width="32" height="31" fill="url(#mt)"/><rect x="2" y="2" width="32" height="2.500" fill="#111"/><rect x="2" y="30.500" width="32" height="2.500" fill="#050505"/><rect x="8" y="8" width="19" height="19" fill="#2a2a2a" stroke="#111" stroke-width="1.500"/><path d="M9 26l17-17v17z" fill="#8a8a88"/><path d="M12 24l13-14" stroke="#f4f4f0" stroke-width="1.600"/><rect x="4.500" y="5" width="4" height="3" fill="#222"/><rect x="28" y="24" width="4" height="4" fill="#222"/></svg></div>
<div class="tb" style="left:935px;top:40px;"><svg width="36" height="35" viewBox="0 0 36 35"><rect x="2.500" y="2" width="31" height="31" fill="#f0f0f2"/><path d="M3 2v31" stroke="#222" stroke-width="1.400"/><path d="M10 2v31M18 2v31M27 2v31" stroke="#555" stroke-width="1" stroke-dasharray="2 1.500"/><path d="M3 20c3-2 5 0 8 2s5 2 8 1s5-2 8 0s4 0 6.500-1v11h-30.500z" fill="#f07a18"/><path d="M3 27c4-2 7 1 11 0s7-3 11-1s6 1 8.500 0v7h-30.500z" fill="#b85008"/><path d="M10 22v11M18 23v10M27 22v11" stroke="#fff" stroke-width="1" stroke-dasharray="2 1.500"/><path d="M2.500 33h31" stroke="#222" stroke-width="1.200"/></svg></div>
<div class="tb" style="left:982px;top:40px;box-shadow:inset 0 0 0 2px #e4e8f4;background:linear-gradient(#0b0f2a,#1a2a7c 70%,#5d7be0);border-color:#aab0cc;"><svg width="36" height="35" viewBox="0 0 36 35"><path d="M10 5l15 2.500l3 9" fill="none" stroke="#e88a20" stroke-width="3.400" stroke-linejoin="round"/><circle cx="10" cy="5" r="2.600" fill="#0a0a18" stroke="#f09020" stroke-width="1.300"/><circle cx="25" cy="7.500" r="2.600" fill="#0a0a18" stroke="#f09020" stroke-width="1.300"/><circle cx="28" cy="17" r="2.800" fill="#0a0a18" stroke="#f09020" stroke-width="1.300"/><circle cx="10" cy="5" r=".8" fill="#fff"/><circle cx="25" cy="7.500" r=".8" fill="#fff"/><circle cx="28" cy="17" r=".8" fill="#fff"/><ellipse cx="10" cy="22" rx="8" ry="11.500" fill="#f0a850"/><ellipse cx="11" cy="22" rx="6.500" ry="9.500" fill="#e8902a"/><path d="M3 14l-1 2M2.500 19h-1.500M2.500 24h-1.500M3.500 29l-1.500 1M5 32l-1 1.500" stroke="#ffd8a0" stroke-width="1.200"/><ellipse cx="11" cy="22" rx="1.600" ry="2.600" fill="#5a2a08"/><circle cx="21" cy="27" r="5" fill="#b8b8b8"/><circle cx="21" cy="27" r="2" fill="#8a8a8a"/></svg></div>
<div class="a" style="left:0;top:79px;width:1357px;height:627px;border-radius:7px 7px 6px 6px;background:linear-gradient(90deg,#6279bd 0,#3f5198 3px,#2c3c82 7px,#2c3c82 1350px,#394b94 1354px,#556bb0 1357px)"></div>
<div class="a" style="left:1px;top:80px;width:1355px;height:27px;border-radius:6px 6px 0 0;background:linear-gradient(#46548d 0%,#2c3870 14%,#27336a 35%,#2d3971 55%,#36437c 78%,#43528c 100%)"></div>
<svg style="left:4px;top:83px" width="1349" height="23" viewBox="0 0 1349 23"><path d="M1287.9 18.0L1288.5 19.4L1289.9 20.0L1288.5 20.6L1287.9 22.0L1287.3 20.6L1285.9 20.0L1287.3 19.4Z" fill="#7f90d0" opacity="0.15"/><path d="M487.6 2.2L488.2 4.6L490.6 5.2L488.2 5.8L487.6 8.2L487.0 5.8L484.6 5.2L487.0 4.6Z" fill="#7f90d0" opacity="0.18"/><path d="M287.4 0.2L288.0 2.1L289.9 2.7L288.0 3.3L287.4 5.2L286.8 3.3L284.9 2.7L286.8 2.1Z" fill="#7f90d0" opacity="0.28"/><path d="M860.7 13.3L861.3 16.7L864.7 17.3L861.3 17.9L860.7 21.3L860.1 17.9L856.7 17.3L860.1 16.7Z" fill="#7f90d0" opacity="0.27"/><path d="M733.9 7.5L734.5 9.9L736.9 10.5L734.5 11.1L733.9 13.5L733.3 11.1L730.9 10.5L733.3 9.9Z" fill="#7f90d0" opacity="0.27"/><path d="M1173.5 5.9L1174.1 8.3L1176.5 8.9L1174.1 9.5L1173.5 11.9L1172.9 9.5L1170.5 8.9L1172.9 8.3Z" fill="#7f90d0" opacity="0.27"/><path d="M571.8 16.3L572.4 18.2L574.3 18.8L572.4 19.4L571.8 21.3L571.2 19.4L569.3 18.8L571.2 18.2Z" fill="#7f90d0" opacity="0.22"/><path d="M319.6 -0.5L320.2 1.9L322.6 2.5L320.2 3.1L319.6 5.5L319.0 3.1L316.6 2.5L319.0 1.9Z" fill="#7f90d0" opacity="0.16"/><path d="M688.2 4.8L688.8 8.2L692.2 8.8L688.8 9.4L688.2 12.8L687.6 9.4L684.2 8.8L687.6 8.2Z" fill="#7f90d0" opacity="0.23"/><path d="M246.6 15.5L247.2 18.4L250.1 19.0L247.2 19.6L246.6 22.5L246.0 19.6L243.1 19.0L246.0 18.4Z" fill="#7f90d0" opacity="0.24"/><path d="M1221.4 12.5L1222.0 15.9L1225.4 16.5L1222.0 17.1L1221.4 20.5L1220.8 17.1L1217.4 16.5L1220.8 15.9Z" fill="#7f90d0" opacity="0.19"/><path d="M1321.4 17.8L1322.0 19.7L1323.9 20.3L1322.0 20.9L1321.4 22.8L1320.8 20.9L1318.9 20.3L1320.8 19.7Z" fill="#7f90d0" opacity="0.27"/><path d="M539.8 12.0L540.4 15.4L543.8 16.0L540.4 16.6L539.8 20.0L539.2 16.6L535.8 16.0L539.2 15.4Z" fill="#7f90d0" opacity="0.17"/><path d="M377.4 7.5L378.0 10.9L381.4 11.5L378.0 12.1L377.4 15.5L376.8 12.1L373.4 11.5L376.8 10.9Z" fill="#7f90d0" opacity="0.26"/><path d="M478.0 15.3L478.6 18.2L481.5 18.8L478.6 19.4L478.0 22.3L477.4 19.4L474.5 18.8L477.4 18.2Z" fill="#7f90d0" opacity="0.19"/><path d="M978.3 9.1L978.9 12.0L981.8 12.6L978.9 13.2L978.3 16.1L977.7 13.2L974.8 12.6L977.7 12.0Z" fill="#7f90d0" opacity="0.21"/><path d="M300.3 5.7L300.9 7.6L302.8 8.2L300.9 8.8L300.3 10.7L299.7 8.8L297.8 8.2L299.7 7.6Z" fill="#7f90d0" opacity="0.26"/><path d="M831.0 13.2L831.6 16.1L834.5 16.7L831.6 17.3L831.0 20.2L830.4 17.3L827.5 16.7L830.4 16.1Z" fill="#7f90d0" opacity="0.18"/><path d="M1289.7 11.4L1290.3 14.8L1293.7 15.4L1290.3 16.0L1289.7 19.4L1289.1 16.0L1285.7 15.4L1289.1 14.8Z" fill="#7f90d0" opacity="0.22"/><path d="M684.4 10.2L685.0 13.1L687.9 13.7L685.0 14.3L684.4 17.2L683.8 14.3L680.9 13.7L683.8 13.1Z" fill="#7f90d0" opacity="0.18"/><path d="M281.5 7.7L282.1 11.1L285.5 11.7L282.1 12.3L281.5 15.7L280.9 12.3L277.5 11.7L280.9 11.1Z" fill="#7f90d0" opacity="0.26"/><path d="M1056.9 6.5L1057.5 7.9L1058.9 8.5L1057.5 9.1L1056.9 10.5L1056.3 9.1L1054.9 8.5L1056.3 7.9Z" fill="#7f90d0" opacity="0.27"/><path d="M259.4 14.2L260.0 15.6L261.4 16.2L260.0 16.8L259.4 18.2L258.8 16.8L257.4 16.2L258.8 15.6Z" fill="#7f90d0" opacity="0.22"/><path d="M67.8 11.2L68.4 12.6L69.8 13.2L68.4 13.8L67.8 15.2L67.2 13.8L65.8 13.2L67.2 12.6Z" fill="#7f90d0" opacity="0.25"/><path d="M185.6 4.6L186.2 6.5L188.1 7.1L186.2 7.7L185.6 9.6L185.0 7.7L183.1 7.1L185.0 6.5Z" fill="#7f90d0" opacity="0.27"/><path d="M83.2 17.1L83.8 18.5L85.2 19.1L83.8 19.7L83.2 21.1L82.6 19.7L81.2 19.1L82.6 18.5Z" fill="#7f90d0" opacity="0.15"/><path d="M486.5 4.7L487.1 6.1L488.5 6.7L487.1 7.3L486.5 8.7L485.9 7.3L484.5 6.7L485.9 6.1Z" fill="#7f90d0" opacity="0.15"/><path d="M1285.9 0.5L1286.5 1.9L1287.9 2.5L1286.5 3.1L1285.9 4.5L1285.3 3.1L1283.9 2.5L1285.3 1.9Z" fill="#7f90d0" opacity="0.19"/><path d="M173.9 17.3L174.5 19.2L176.4 19.8L174.5 20.4L173.9 22.3L173.3 20.4L171.4 19.8L173.3 19.2Z" fill="#7f90d0" opacity="0.21"/><path d="M4.6 10.7L5.2 12.6L7.1 13.2L5.2 13.8L4.6 15.7L4.0 13.8L2.1 13.2L4.0 12.6Z" fill="#7f90d0" opacity="0.16"/><path d="M50.8 4.5L51.4 7.9L54.8 8.5L51.4 9.1L50.8 12.5L50.2 9.1L46.8 8.5L50.2 7.9Z" fill="#7f90d0" opacity="0.23"/><path d="M1007.6 3.9L1008.2 6.8L1011.1 7.4L1008.2 8.0L1007.6 10.9L1007.0 8.0L1004.1 7.4L1007.0 6.8Z" fill="#7f90d0" opacity="0.14"/><path d="M605.4 14.6L606.0 16.0L607.4 16.6L606.0 17.2L605.4 18.6L604.8 17.2L603.4 16.6L604.8 16.0Z" fill="#7f90d0" opacity="0.27"/><path d="M1018.4 15.9L1019.0 17.8L1020.9 18.4L1019.0 19.0L1018.4 20.9L1017.8 19.0L1015.9 18.4L1017.8 17.8Z" fill="#7f90d0" opacity="0.21"/><path d="M305.3 11.6L305.9 14.0L308.3 14.6L305.9 15.2L305.3 17.6L304.7 15.2L302.3 14.6L304.7 14.0Z" fill="#7f90d0" opacity="0.26"/><path d="M34.6 14.5L35.2 16.4L37.1 17.0L35.2 17.6L34.6 19.5L34.0 17.6L32.1 17.0L34.0 16.4Z" fill="#7f90d0" opacity="0.21"/><path d="M1052.5 8.3L1053.1 10.7L1055.5 11.3L1053.1 11.9L1052.5 14.3L1051.9 11.9L1049.5 11.3L1051.9 10.7Z" fill="#7f90d0" opacity="0.16"/><path d="M1292.8 2.9L1293.4 6.3L1296.8 6.9L1293.4 7.5L1292.8 10.9L1292.2 7.5L1288.8 6.9L1292.2 6.3Z" fill="#7f90d0" opacity="0.28"/><path d="M880.7 12.8L881.3 14.7L883.2 15.3L881.3 15.9L880.7 17.8L880.1 15.9L878.2 15.3L880.1 14.7Z" fill="#7f90d0" opacity="0.23"/><path d="M342.2 2.0L342.8 3.9L344.7 4.5L342.8 5.1L342.2 7.0L341.6 5.1L339.7 4.5L341.6 3.9Z" fill="#7f90d0" opacity="0.15"/><path d="M856.2 9.7L856.8 11.1L858.2 11.7L856.8 12.3L856.2 13.7L855.6 12.3L854.2 11.7L855.6 11.1Z" fill="#7f90d0" opacity="0.28"/><path d="M314.7 7.4L315.3 9.8L317.7 10.4L315.3 11.0L314.7 13.4L314.1 11.0L311.7 10.4L314.1 9.8Z" fill="#7f90d0" opacity="0.15"/><path d="M308.9 13.0L309.5 16.4L312.9 17.0L309.5 17.6L308.9 21.0L308.3 17.6L304.9 17.0L308.3 16.4Z" fill="#7f90d0" opacity="0.24"/><path d="M347.1 6.0L347.7 9.4L351.1 10.0L347.7 10.6L347.1 14.0L346.5 10.6L343.1 10.0L346.5 9.4Z" fill="#7f90d0" opacity="0.25"/><path d="M205.3 6.8L205.9 8.7L207.8 9.3L205.9 9.9L205.3 11.8L204.7 9.9L202.8 9.3L204.7 8.7Z" fill="#7f90d0" opacity="0.16"/><path d="M975.5 4.6L976.1 6.0L977.5 6.6L976.1 7.2L975.5 8.6L974.9 7.2L973.5 6.6L974.9 6.0Z" fill="#7f90d0" opacity="0.14"/><path d="M1011.5 2.0L1012.1 3.4L1013.5 4.0L1012.1 4.6L1011.5 6.0L1010.9 4.6L1009.5 4.0L1010.9 3.4Z" fill="#7f90d0" opacity="0.21"/><path d="M626.6 4.4L627.2 7.3L630.1 7.9L627.2 8.5L626.6 11.4L626.0 8.5L623.1 7.9L626.0 7.3Z" fill="#7f90d0" opacity="0.17"/><path d="M1221.3 16.8L1221.9 19.7L1224.8 20.3L1221.9 20.9L1221.3 23.8L1220.7 20.9L1217.8 20.3L1220.7 19.7Z" fill="#7f90d0" opacity="0.20"/><path d="M30.7 9.7L31.3 12.6L34.2 13.2L31.3 13.8L30.7 16.7L30.1 13.8L27.2 13.2L30.1 12.6Z" fill="#7f90d0" opacity="0.27"/><path d="M783.9 16.0L784.5 18.9L787.4 19.5L784.5 20.1L783.9 23.0L783.3 20.1L780.4 19.5L783.3 18.9Z" fill="#7f90d0" opacity="0.19"/><path d="M700.3 15.5L700.9 18.9L704.3 19.5L700.9 20.1L700.3 23.5L699.7 20.1L696.3 19.5L699.7 18.9Z" fill="#7f90d0" opacity="0.19"/><path d="M930.6 16.7L931.2 19.1L933.6 19.7L931.2 20.3L930.6 22.7L930.0 20.3L927.6 19.7L930.0 19.1Z" fill="#7f90d0" opacity="0.14"/><path d="M923.7 0.9L924.3 3.3L926.7 3.9L924.3 4.5L923.7 6.9L923.1 4.5L920.7 3.9L923.1 3.3Z" fill="#7f90d0" opacity="0.17"/><path d="M1044.8 14.2L1045.4 17.1L1048.3 17.7L1045.4 18.3L1044.8 21.2L1044.2 18.3L1041.3 17.7L1044.2 17.1Z" fill="#7f90d0" opacity="0.15"/><path d="M859.2 6.8L859.8 10.2L863.2 10.8L859.8 11.4L859.2 14.8L858.6 11.4L855.2 10.8L858.6 10.2Z" fill="#7f90d0" opacity="0.23"/><path d="M9.2 -0.5L9.8 1.9L12.2 2.5L9.8 3.1L9.2 5.5L8.6 3.1L6.2 2.5L8.6 1.9Z" fill="#7f90d0" opacity="0.27"/><path d="M105.0 13.8L105.6 15.7L107.5 16.3L105.6 16.9L105.0 18.8L104.4 16.9L102.5 16.3L104.4 15.7Z" fill="#7f90d0" opacity="0.16"/><path d="M504.2 13.1L504.8 15.0L506.7 15.6L504.8 16.2L504.2 18.1L503.6 16.2L501.7 15.6L503.6 15.0Z" fill="#7f90d0" opacity="0.25"/><path d="M533.3 2.3L533.9 3.7L535.3 4.3L533.9 4.9L533.3 6.3L532.7 4.9L531.3 4.3L532.7 3.7Z" fill="#7f90d0" opacity="0.16"/><path d="M831.2 4.9L831.8 7.8L834.7 8.4L831.8 9.0L831.2 11.9L830.6 9.0L827.7 8.4L830.6 7.8Z" fill="#7f90d0" opacity="0.27"/><path d="M933.6 -1.0L934.2 1.9L937.1 2.5L934.2 3.1L933.6 6.0L933.0 3.1L930.1 2.5L933.0 1.9Z" fill="#7f90d0" opacity="0.25"/><path d="M975.1 8.5L975.7 10.9L978.1 11.5L975.7 12.1L975.1 14.5L974.5 12.1L972.1 11.5L974.5 10.9Z" fill="#7f90d0" opacity="0.27"/><path d="M192.3 5.6L192.9 8.5L195.8 9.1L192.9 9.7L192.3 12.6L191.7 9.7L188.8 9.1L191.7 8.5Z" fill="#7f90d0" opacity="0.21"/><path d="M644.3 16.6L644.9 19.5L647.8 20.1L644.9 20.7L644.3 23.6L643.7 20.7L640.8 20.1L643.7 19.5Z" fill="#7f90d0" opacity="0.27"/><path d="M1126.4 5.1L1127.0 7.0L1128.9 7.6L1127.0 8.2L1126.4 10.1L1125.8 8.2L1123.9 7.6L1125.8 7.0Z" fill="#7f90d0" opacity="0.16"/><path d="M804.4 10.4L805.0 11.8L806.4 12.4L805.0 13.0L804.4 14.4L803.8 13.0L802.4 12.4L803.8 11.8Z" fill="#7f90d0" opacity="0.22"/><path d="M1102.0 0.8L1102.6 3.2L1105.0 3.8L1102.6 4.4L1102.0 6.8L1101.4 4.4L1099.0 3.8L1101.4 3.2Z" fill="#7f90d0" opacity="0.16"/><path d="M735.4 15.3L736.0 16.7L737.4 17.3L736.0 17.9L735.4 19.3L734.8 17.9L733.4 17.3L734.8 16.7Z" fill="#7f90d0" opacity="0.25"/><path d="M1227.8 12.9L1228.4 14.3L1229.8 14.9L1228.4 15.5L1227.8 16.9L1227.2 15.5L1225.8 14.9L1227.2 14.3Z" fill="#7f90d0" opacity="0.16"/><path d="M400.6 3.4L401.2 5.8L403.6 6.4L401.2 7.0L400.6 9.4L400.0 7.0L397.6 6.4L400.0 5.8Z" fill="#7f90d0" opacity="0.20"/><path d="M706.8 0.1L707.4 3.5L710.8 4.1L707.4 4.7L706.8 8.1L706.2 4.7L702.8 4.1L706.2 3.5Z" fill="#7f90d0" opacity="0.28"/><path d="M1305.1 7.1L1305.7 9.5L1308.1 10.1L1305.7 10.7L1305.1 13.1L1304.5 10.7L1302.1 10.1L1304.5 9.5Z" fill="#7f90d0" opacity="0.21"/><path d="M964.2 4.4L964.8 6.3L966.7 6.9L964.8 7.5L964.2 9.4L963.6 7.5L961.7 6.9L963.6 6.3Z" fill="#7f90d0" opacity="0.20"/><path d="M947.8 6.7L948.4 9.1L950.8 9.7L948.4 10.3L947.8 12.7L947.2 10.3L944.8 9.7L947.2 9.1Z" fill="#7f90d0" opacity="0.25"/><path d="M773.3 1.3L773.9 4.2L776.8 4.8L773.9 5.4L773.3 8.3L772.7 5.4L769.8 4.8L772.7 4.2Z" fill="#7f90d0" opacity="0.24"/><path d="M1091.1 6.8L1091.7 8.7L1093.6 9.3L1091.7 9.9L1091.1 11.8L1090.5 9.9L1088.6 9.3L1090.5 8.7Z" fill="#7f90d0" opacity="0.19"/><path d="M74.1 4.2L74.7 6.6L77.1 7.2L74.7 7.8L74.1 10.2L73.5 7.8L71.1 7.2L73.5 6.6Z" fill="#7f90d0" opacity="0.24"/><path d="M1261.8 11.9L1262.4 14.8L1265.3 15.4L1262.4 16.0L1261.8 18.9L1261.2 16.0L1258.3 15.4L1261.2 14.8Z" fill="#7f90d0" opacity="0.19"/><path d="M738.5 13.6L739.1 15.0L740.5 15.6L739.1 16.2L738.5 17.6L737.9 16.2L736.5 15.6L737.9 15.0Z" fill="#7f90d0" opacity="0.25"/><path d="M1148.0 2.3L1148.6 5.7L1152.0 6.3L1148.6 6.9L1148.0 10.3L1147.4 6.9L1144.0 6.3L1147.4 5.7Z" fill="#7f90d0" opacity="0.17"/><path d="M1099.9 7.3L1100.5 8.7L1101.9 9.3L1100.5 9.9L1099.9 11.3L1099.3 9.9L1097.9 9.3L1099.3 8.7Z" fill="#7f90d0" opacity="0.18"/><path d="M706.2 15.7L706.8 18.6L709.7 19.2L706.8 19.8L706.2 22.7L705.6 19.8L702.7 19.2L705.6 18.6Z" fill="#7f90d0" opacity="0.23"/><path d="M1099.6 -0.2L1100.2 1.7L1102.1 2.3L1100.2 2.9L1099.6 4.8L1099.0 2.9L1097.1 2.3L1099.0 1.7Z" fill="#7f90d0" opacity="0.24"/><path d="M817.7 17.2L818.3 18.6L819.7 19.2L818.3 19.8L817.7 21.2L817.1 19.8L815.7 19.2L817.1 18.6Z" fill="#7f90d0" opacity="0.19"/><path d="M752.1 14.2L752.7 16.6L755.1 17.2L752.7 17.8L752.1 20.2L751.5 17.8L749.1 17.2L751.5 16.6Z" fill="#7f90d0" opacity="0.24"/><path d="M790.5 1.6L791.1 5.0L794.5 5.6L791.1 6.2L790.5 9.6L789.9 6.2L786.5 5.6L789.9 5.0Z" fill="#7f90d0" opacity="0.16"/><path d="M825.6 7.3L826.2 9.7L828.6 10.3L826.2 10.9L825.6 13.3L825.0 10.9L822.6 10.3L825.0 9.7Z" fill="#7f90d0" opacity="0.21"/><path d="M235.4 13.5L236.0 14.9L237.4 15.5L236.0 16.1L235.4 17.5L234.8 16.1L233.4 15.5L234.8 14.9Z" fill="#7f90d0" opacity="0.19"/><path d="M1220.1 10.1L1220.7 11.5L1222.1 12.1L1220.7 12.7L1220.1 14.1L1219.5 12.7L1218.1 12.1L1219.5 11.5Z" fill="#7f90d0" opacity="0.25"/><path d="M654.3 11.8L654.9 14.2L657.3 14.8L654.9 15.4L654.3 17.8L653.7 15.4L651.3 14.8L653.7 14.2Z" fill="#7f90d0" opacity="0.20"/><path d="M1182.3 8.7L1182.9 10.1L1184.3 10.7L1182.9 11.3L1182.3 12.7L1181.7 11.3L1180.3 10.7L1181.7 10.1Z" fill="#7f90d0" opacity="0.23"/><path d="M469.6 12.9L470.2 15.8L473.1 16.4L470.2 17.0L469.6 19.9L469.0 17.0L466.1 16.4L469.0 15.8Z" fill="#7f90d0" opacity="0.18"/><path d="M842.8 15.3L843.4 17.2L845.3 17.8L843.4 18.4L842.8 20.3L842.2 18.4L840.3 17.8L842.2 17.2Z" fill="#7f90d0" opacity="0.15"/><path d="M673.8 17.9L674.4 20.3L676.8 20.9L674.4 21.5L673.8 23.9L673.2 21.5L670.8 20.9L673.2 20.3Z" fill="#7f90d0" opacity="0.16"/><path d="M382.2 8.9L382.8 10.3L384.2 10.9L382.8 11.5L382.2 12.9L381.6 11.5L380.2 10.9L381.6 10.3Z" fill="#7f90d0" opacity="0.19"/><path d="M725.6 5.8L726.2 8.7L729.1 9.3L726.2 9.9L725.6 12.8L725.0 9.9L722.1 9.3L725.0 8.7Z" fill="#7f90d0" opacity="0.17"/><path d="M911.8 9.0L912.4 10.9L914.3 11.5L912.4 12.1L911.8 14.0L911.2 12.1L909.3 11.5L911.2 10.9Z" fill="#7f90d0" opacity="0.21"/><path d="M726.4 17.4L727.0 18.8L728.4 19.4L727.0 20.0L726.4 21.4L725.8 20.0L724.4 19.4L725.8 18.8Z" fill="#7f90d0" opacity="0.18"/><path d="M423.1 5.3L423.7 7.7L426.1 8.3L423.7 8.9L423.1 11.3L422.5 8.9L420.1 8.3L422.5 7.7Z" fill="#7f90d0" opacity="0.23"/><path d="M530.5 16.0L531.1 17.4L532.5 18.0L531.1 18.6L530.5 20.0L529.9 18.6L528.5 18.0L529.9 17.4Z" fill="#7f90d0" opacity="0.21"/><path d="M285.3 10.8L285.9 12.7L287.8 13.3L285.9 13.9L285.3 15.8L284.7 13.9L282.8 13.3L284.7 12.7Z" fill="#7f90d0" opacity="0.25"/><path d="M847.8 5.4L848.4 7.3L850.3 7.9L848.4 8.5L847.8 10.4L847.2 8.5L845.3 7.9L847.2 7.3Z" fill="#7f90d0" opacity="0.27"/><path d="M757.0 9.9L757.6 11.3L759.0 11.9L757.6 12.5L757.0 13.9L756.4 12.5L755.0 11.9L756.4 11.3Z" fill="#7f90d0" opacity="0.27"/><path d="M152.6 14.1L153.2 17.0L156.1 17.6L153.2 18.2L152.6 21.1L152.0 18.2L149.1 17.6L152.0 17.0Z" fill="#7f90d0" opacity="0.26"/><path d="M289.4 5.8L290.0 8.2L292.4 8.8L290.0 9.4L289.4 11.8L288.8 9.4L286.4 8.8L288.8 8.2Z" fill="#7f90d0" opacity="0.20"/><path d="M225.9 7.4L226.5 9.8L228.9 10.4L226.5 11.0L225.9 13.4L225.3 11.0L222.9 10.4L225.3 9.8Z" fill="#7f90d0" opacity="0.20"/><path d="M182.0 13.2L182.6 15.1L184.5 15.7L182.6 16.3L182.0 18.2L181.4 16.3L179.5 15.7L181.4 15.1Z" fill="#7f90d0" opacity="0.27"/><path d="M440.8 1.4L441.4 3.3L443.3 3.9L441.4 4.5L440.8 6.4L440.2 4.5L438.3 3.9L440.2 3.3Z" fill="#7f90d0" opacity="0.21"/><path d="M1013.9 15.6L1014.5 17.5L1016.4 18.1L1014.5 18.7L1013.9 20.6L1013.3 18.7L1011.4 18.1L1013.3 17.5Z" fill="#7f90d0" opacity="0.19"/><path d="M1071.4 2.4L1072.0 5.8L1075.4 6.4L1072.0 7.0L1071.4 10.4L1070.8 7.0L1067.4 6.4L1070.8 5.8Z" fill="#7f90d0" opacity="0.23"/><path d="M540.3 14.6L540.9 17.0L543.3 17.6L540.9 18.2L540.3 20.6L539.7 18.2L537.3 17.6L539.7 17.0Z" fill="#7f90d0" opacity="0.18"/><path d="M970.5 9.3L971.1 12.7L974.5 13.3L971.1 13.9L970.5 17.3L969.9 13.9L966.5 13.3L969.9 12.7Z" fill="#7f90d0" opacity="0.24"/><path d="M1278.1 13.1L1278.7 15.5L1281.1 16.1L1278.7 16.7L1278.1 19.1L1277.5 16.7L1275.1 16.1L1277.5 15.5Z" fill="#7f90d0" opacity="0.21"/><path d="M858.8 0.4L859.4 2.8L861.8 3.4L859.4 4.0L858.8 6.4L858.2 4.0L855.8 3.4L858.2 2.8Z" fill="#7f90d0" opacity="0.20"/><path d="M237.1 17.2L237.7 19.6L240.1 20.2L237.7 20.8L237.1 23.2L236.5 20.8L234.1 20.2L236.5 19.6Z" fill="#7f90d0" opacity="0.20"/><path d="M120.0 16.5L120.6 18.9L123.0 19.5L120.6 20.1L120.0 22.5L119.4 20.1L117.0 19.5L119.4 18.9Z" fill="#7f90d0" opacity="0.27"/><path d="M172.9 -0.5L173.5 1.9L175.9 2.5L173.5 3.1L172.9 5.5L172.3 3.1L169.9 2.5L172.3 1.9Z" fill="#7f90d0" opacity="0.16"/><path d="M105.6 15.2L106.2 18.1L109.1 18.7L106.2 19.3L105.6 22.2L105.0 19.3L102.1 18.7L105.0 18.1Z" fill="#7f90d0" opacity="0.14"/><path d="M432.9 13.7L433.5 17.1L436.9 17.7L433.5 18.3L432.9 21.7L432.3 18.3L428.9 17.7L432.3 17.1Z" fill="#7f90d0" opacity="0.19"/><path d="M384.9 11.6L385.5 13.5L387.4 14.1L385.5 14.7L384.9 16.6L384.3 14.7L382.4 14.1L384.3 13.5Z" fill="#7f90d0" opacity="0.19"/><path d="M273.9 9.0L274.5 10.9L276.4 11.5L274.5 12.1L273.9 14.0L273.3 12.1L271.4 11.5L273.3 10.9Z" fill="#7f90d0" opacity="0.25"/><path d="M447.6 1.7L448.2 4.1L450.6 4.7L448.2 5.3L447.6 7.7L447.0 5.3L444.6 4.7L447.0 4.1Z" fill="#7f90d0" opacity="0.18"/><path d="M462.9 4.2L463.5 6.1L465.4 6.7L463.5 7.3L462.9 9.2L462.3 7.3L460.4 6.7L462.3 6.1Z" fill="#7f90d0" opacity="0.24"/><path d="M65.0 15.9L65.6 19.3L69.0 19.9L65.6 20.5L65.0 23.9L64.4 20.5L61.0 19.9L64.4 19.3Z" fill="#7f90d0" opacity="0.15"/><path d="M195.7 14.7L196.3 17.6L199.2 18.2L196.3 18.8L195.7 21.7L195.1 18.8L192.2 18.2L195.1 17.6Z" fill="#7f90d0" opacity="0.20"/><path d="M367.7 4.1L368.3 7.5L371.7 8.1L368.3 8.7L367.7 12.1L367.1 8.7L363.7 8.1L367.1 7.5Z" fill="#7f90d0" opacity="0.26"/><path d="M456.7 12.6L457.3 16.0L460.7 16.6L457.3 17.2L456.7 20.6L456.1 17.2L452.7 16.6L456.1 16.0Z" fill="#7f90d0" opacity="0.27"/><path d="M308.3 -0.5L308.9 2.4L311.8 3.0L308.9 3.6L308.3 6.5L307.7 3.6L304.8 3.0L307.7 2.4Z" fill="#7f90d0" opacity="0.21"/><path d="M1174.0 8.3L1174.6 11.7L1178.0 12.3L1174.6 12.9L1174.0 16.3L1173.4 12.9L1170.0 12.3L1173.4 11.7Z" fill="#7f90d0" opacity="0.22"/><path d="M792.9 8.7L793.5 11.6L796.4 12.2L793.5 12.8L792.9 15.7L792.3 12.8L789.4 12.2L792.3 11.6Z" fill="#7f90d0" opacity="0.28"/><path d="M1132.9 7.1L1133.5 10.0L1136.4 10.6L1133.5 11.2L1132.9 14.1L1132.3 11.2L1129.4 10.6L1132.3 10.0Z" fill="#7f90d0" opacity="0.19"/><path d="M610.8 15.2L611.4 18.1L614.3 18.7L611.4 19.3L610.8 22.2L610.2 19.3L607.3 18.7L610.2 18.1Z" fill="#7f90d0" opacity="0.28"/><path d="M174.4 15.8L175.0 19.2L178.4 19.8L175.0 20.4L174.4 23.8L173.8 20.4L170.4 19.8L173.8 19.2Z" fill="#7f90d0" opacity="0.27"/><path d="M106.0 5.8L106.6 7.2L108.0 7.8L106.6 8.4L106.0 9.8L105.4 8.4L104.0 7.8L105.4 7.2Z" fill="#7f90d0" opacity="0.18"/><path d="M901.4 4.2L902.0 5.6L903.4 6.2L902.0 6.8L901.4 8.2L900.8 6.8L899.4 6.2L900.8 5.6Z" fill="#7f90d0" opacity="0.16"/><path d="M902.8 0.2L903.4 3.1L906.3 3.7L903.4 4.3L902.8 7.2L902.2 4.3L899.3 3.7L902.2 3.1Z" fill="#7f90d0" opacity="0.15"/><path d="M1210.8 3.1L1211.4 6.0L1214.3 6.6L1211.4 7.2L1210.8 10.1L1210.2 7.2L1207.3 6.6L1210.2 6.0Z" fill="#7f90d0" opacity="0.16"/><path d="M42.9 11.2L43.5 14.6L46.9 15.2L43.5 15.8L42.9 19.2L42.3 15.8L38.9 15.2L42.3 14.6Z" fill="#7f90d0" opacity="0.15"/><path d="M270.5 15.5L271.1 18.9L274.5 19.5L271.1 20.1L270.5 23.5L269.9 20.1L266.5 19.5L269.9 18.9Z" fill="#7f90d0" opacity="0.19"/></svg>
<svg style="left:6px;top:86.5px" width="15.8" height="13.2" viewBox="0 0 18 15"><defs><linearGradient id="pl" x1="0" y1="1" x2="0" y2="0"><stop offset="0" stop-color="#1f8f7a"/><stop offset=".3" stop-color="#2fc03a"/><stop offset=".62" stop-color="#e8d828"/><stop offset="1" stop-color="#d82a22"/></linearGradient></defs><path d="M2.2 12.6 L9 2.6 L15.8 12.6" fill="none" stroke="#141c4a" stroke-width="4.2" stroke-linejoin="round" stroke-linecap="round"/><path d="M2.2 13 L15.8 13" stroke="#141c4a" stroke-width="3.6" stroke-linecap="round"/><path d="M2.4 12.4 L9 2.8 L15.6 12.4" fill="none" stroke="url(#pl)" stroke-width="2.4" stroke-linejoin="round" stroke-linecap="round"/><path d="M2.2 13 L15.8 13" stroke="#1b2a86" stroke-width="2.2" stroke-linecap="round"/></svg>
<span class="t" style="left:286px;top:86.0px;font-size:12px;line-height:16px;color:#848eb6;font-weight:bold;letter-spacing:0.099px;">Le ciel EQ.2000, Zoom=2, Alpha= 22h52m27s Delta= +61°35&#x27;00&quot;&nbsp;  01/10/2016 21:46:10 TU [Window1.mapsky]&nbsp;  san gavino [france]</span>
<div class="wb" style="left:1296px;top:88px;width:19px;height:12px;background:linear-gradient(#9aa038,#6f7420);border-color:rgba(20,26,70,.7);box-shadow:0 0 0 1px rgba(130,150,210,.25);"><svg width="17" height="10" viewBox="0 0 17 10" style="left:0;top:0"><rect x="4.5" y="6.0" width="8" height="2" fill="#fff" opacity="0.6"/></svg></div>
<div class="wb" style="left:1323px;top:88px;width:20px;height:12px;background:linear-gradient(#8c2c3a,#5c1826);border-color:rgba(20,26,70,.7);box-shadow:0 0 0 1px rgba(130,150,210,.25);"><svg width="18" height="10" viewBox="0 0 18 10" style="left:0;top:0"><path d="M5.5 1.5L12.5 8.5M12.5 1.5L5.5 8.5" stroke="#fff" stroke-width="1.6" opacity="0.7"/></svg></div>
<div class="a" style="left:7px;top:106px;width:1344px;height:592px;background:#e6e7ec;border:1px solid #f6f6fa;border-top:0"></div>
<div class="a" style="left:8px;top:106px;width:1342px;height:42px;background:linear-gradient(#e6e7eb,#e4e5e9 90%,#f8f8fb 97%)"></div>
<div class="tb" style="left:8px;top:107px"><svg width="36" height="35" viewBox="0 0 36 35"><g transform="translate(0 0)"><path d="M17.500 17.500L30 31" stroke="#2a1404" stroke-width="5.400" stroke-linecap="round"/><path d="M18 17.500L30 30.500" stroke="#b8621a" stroke-width="2.400" stroke-linecap="round"/><circle cx="11.300" cy="11.300" r="9" fill="#eeeef2" stroke="#7a6a60" stroke-width="1.500"/><circle cx="11.300" cy="11.300" r="7.200" fill="none" stroke="#cfc4bc" stroke-width="1.300"/><path d="M5 8a7 7 0 0 1 11-2" fill="none" stroke="#fff" stroke-width="1.500" opacity=".9"/><path d="M6.300 11.300h10" stroke="#f06a10" stroke-width="3"/></g></svg></div>
<div class="tb" style="left:47px;top:107px"><svg width="36" height="35" viewBox="0 0 36 35"><g transform="translate(0 0)"><path d="M17.500 17.500L30 31" stroke="#2a1404" stroke-width="5.400" stroke-linecap="round"/><path d="M18 17.500L30 30.500" stroke="#b8621a" stroke-width="2.400" stroke-linecap="round"/><circle cx="11.300" cy="11.300" r="9" fill="#eeeef2" stroke="#7a6a60" stroke-width="1.500"/><circle cx="11.300" cy="11.300" r="7.200" fill="none" stroke="#cfc4bc" stroke-width="1.300"/><path d="M5 8a7 7 0 0 1 11-2" fill="none" stroke="#fff" stroke-width="1.500" opacity=".9"/><path d="M6.300 11.300h10" stroke="#f06a10" stroke-width="3"/><path d="M11.300 6.300v10" stroke="#f06a10" stroke-width="3"/></g></svg></div>
<div class="tb" style="left:86px;top:107px"><svg width="36" height="35" viewBox="0 0 36 35"><g transform="translate(0 -2.5)"><circle cx="9" cy="8" r="6" fill="#f28a4a"/><path d="M9 8l-5-4M9 8l-2-6M9 8l2-6M9 8l5-3M9 8l6 0M9 8l-6 1" stroke="#ffc8a0" stroke-width="1.300"/><ellipse cx="19" cy="24" rx="14" ry="8" fill="#d0d0d0" stroke="#999"/><path d="M6 14c4-2 10-2 14 1" fill="none" stroke="#aaa" stroke-width="1.500"/></g></svg></div>
<div class="tb" style="left:125px;top:107px"><svg width="36" height="35" viewBox="0 0 36 35"><g transform="translate(0 -2.5)"><path d="M4 20a14 14 0 0 1 28 0" fill="none" stroke="#888" stroke-width="1" stroke-dasharray="1.500 1.500"/><path d="M4 20h28" stroke="#999" stroke-dasharray="1.500 1.500"/><g fill="#777"><circle cx="10" cy="12" r=".7"/><circle cx="15" cy="9" r=".6"/><circle cx="21" cy="10" r=".7"/><circle cx="26" cy="13" r=".6"/><circle cx="13" cy="15" r=".6"/><circle cx="19" cy="14" r=".7"/><circle cx="24" cy="17" r=".6"/><circle cx="8" cy="17" r=".6"/><circle cx="17" cy="17" r=".5"/><circle cx="28" cy="17" r=".5"/><circle cx="18" cy="7" r=".5"/></g></g></svg></div>
<div class="tb" style="left:164px;top:107px"><svg width="36" height="35" viewBox="0 0 36 35"><g transform="translate(0 -2.5)"><path d="M4 16c1-6 5-9 10-8l3 3l4-4c5-1 9 2 10 8v14h-27z" fill="#5a5a5a"/><path d="M5 19c3-3 7-3 10 0v12h-10z" fill="#2a2a2a"/><path d="M19 18c3-3 8-3 11 0v13h-11z" fill="#333"/><path d="M6 15c1-4 4-6 7-6l2 3c-3 0-6 1-9 3z" fill="#bbb"/><path d="M20 11c2-2 6-2 9 1c-3 0-6 0-8 2z" fill="#999"/><path d="M14 8l3 4l4-5z" fill="#666"/></g></svg></div>
<div class="tb" style="left:203px;top:107px"><svg width="36" height="35" viewBox="0 0 36 35"><g transform="translate(0 -2.5)"><defs><linearGradient id="og" x1="0" y1="0" x2="1" y2="1"><stop offset="0" stop-color="#ffb060"/><stop offset=".5" stop-color="#f57a14"/><stop offset="1" stop-color="#c85008"/></linearGradient><linearGradient id="ogv" x1="0" y1="0" x2="0" y2="1"><stop offset="0" stop-color="#ff9a3a"/><stop offset="1" stop-color="#e05a08"/></linearGradient><radialGradient id="br" cx=".4" cy=".35" r=".75"><stop offset="0" stop-color="#d87a28"/><stop offset=".6" stop-color="#a84a10"/><stop offset="1" stop-color="#5a2204"/></radialGradient><linearGradient id="shine" x1="0" y1="0" x2="1" y2="0"><stop offset="0" stop-color="#ffe0b0"/><stop offset=".5" stop-color="#ff8a20"/><stop offset="1" stop-color="#ffd090"/></linearGradient><linearGradient id="gl" x1="0" y1="0" x2="1" y2="1"><stop offset="0" stop-color="#fff"/><stop offset="1" stop-color="#c8c8d0"/></linearGradient><linearGradient id="hd" x1="0" y1="0" x2="1" y2="1"><stop offset="0" stop-color="#8a4a18"/><stop offset="1" stop-color="#3a1a04"/></linearGradient><linearGradient id="mt" x1="0" y1="0" x2="1" y2="0"><stop offset="0" stop-color="#6a6a6a"/><stop offset=".5" stop-color="#e8e8e8"/><stop offset="1" stop-color="#5a5a5a"/></linearGradient><radialGradient id="cone" cx=".35" cy=".7" r=".8"><stop offset="0" stop-color="#ff8a30"/><stop offset=".5" stop-color="#e84a08"/><stop offset="1" stop-color="#8a2000"/></radialGradient></defs><circle cx="18" cy="19" r="14.500" fill="url(#br)"/><circle cx="18" cy="19" r="10.500" fill="#f4f0ec"/><circle cx="18" cy="19" r="4" fill="#c8a080"/><path d="M6 9l12 12l12-12" fill="none" stroke="#e01010" stroke-width="2.600"/><path d="M6 33l12-12l12 12" fill="none" stroke="#e01010" stroke-width="2.600"/></g></svg></div>
<div class="tb" style="left:242px;top:107px"><svg width="36" height="35" viewBox="0 0 36 35"><g transform="translate(0 -2.5)"><rect x="10" y="4" width="16" height="11" fill="#fff" stroke="#ccc" stroke-width=".6"/><path d="M5 15h26l2 4v10h-30v-10z" fill="#c86a28"/><rect x="5" y="14.500" width="26" height="2.500" fill="#a85010"/><rect x="8" y="24" width="20" height="8" fill="#fff"/></g></svg></div>
<div class="tb" style="left:281px;top:107px"><svg width="36" height="35" viewBox="0 0 36 35"><g transform="translate(0 -2.5)"><path d="M17 2l10 1.500l-1.500 10l-3-3l-6 6l-3-3l6-6z" fill="#f04a08" transform="translate(5 0)"/><path d="M15 8l1.500 9l12 2l-12 2l-1.500 9l-1.500-9l-12-2l12-2z" fill="#0a0a0a"/></g></svg></div>
<div class="tb" style="left:320px;top:107px"><svg width="36" height="35" viewBox="0 0 36 35"><g transform="translate(0 -2.5)"><defs><linearGradient id="og" x1="0" y1="0" x2="1" y2="1"><stop offset="0" stop-color="#ffb060"/><stop offset=".5" stop-color="#f57a14"/><stop offset="1" stop-color="#c85008"/></linearGradient><linearGradient id="ogv" x1="0" y1="0" x2="0" y2="1"><stop offset="0" stop-color="#ff9a3a"/><stop offset="1" stop-color="#e05a08"/></linearGradient><radialGradient id="br" cx=".4" cy=".35" r=".75"><stop offset="0" stop-color="#d87a28"/><stop offset=".6" stop-color="#a84a10"/><stop offset="1" stop-color="#5a2204"/></radialGradient><linearGradient id="shine" x1="0" y1="0" x2="1" y2="0"><stop offset="0" stop-color="#ffe0b0"/><stop offset=".5" stop-color="#ff8a20"/><stop offset="1" stop-color="#ffd090"/></linearGradient><linearGradient id="gl" x1="0" y1="0" x2="1" y2="1"><stop offset="0" stop-color="#fff"/><stop offset="1" stop-color="#c8c8d0"/></linearGradient><linearGradient id="hd" x1="0" y1="0" x2="1" y2="1"><stop offset="0" stop-color="#8a4a18"/><stop offset="1" stop-color="#3a1a04"/></linearGradient><linearGradient id="mt" x1="0" y1="0" x2="1" y2="0"><stop offset="0" stop-color="#6a6a6a"/><stop offset=".5" stop-color="#e8e8e8"/><stop offset="1" stop-color="#5a5a5a"/></linearGradient><radialGradient id="cone" cx=".35" cy=".7" r=".8"><stop offset="0" stop-color="#ff8a30"/><stop offset=".5" stop-color="#e84a08"/><stop offset="1" stop-color="#8a2000"/></radialGradient></defs><path d="M18.500 14l5.300-6l9.200 9.400l-11.300-.5z" fill="#ececf0" stroke="#8a3a08" stroke-width="1.500" stroke-linejoin="round"/><path d="M2.300 21h18.400l-11.300 12.500z" fill="#f57410"/><path d="M5.900 21C6 13 13 9 23.800 8L20.700 13.500C17 15 16 17 15.600 21z" fill="url(#shine)" stroke="#c85a08" stroke-width=".8"/></g></svg></div>
<div class="tb" style="left:359px;top:107px"><svg width="36" height="35" viewBox="0 0 36 35"><g transform="translate(0 -2.5)"><g fill="#0a0a0a"><path d="M2 5L5 2L12.500 9.500L16.500 5.500V16.500H5.500L9.500 12.500Z"/><g transform="translate(36 0) scale(-1 1)"><path d="M2 5L5 2L12.500 9.500L16.500 5.500V16.500H5.500L9.500 12.500Z"/></g><g transform="translate(0 35) scale(1 -1)"><path d="M2 5L5 2L12.500 9.500L16.500 5.500V16.500H5.500L9.500 12.500Z"/></g><g transform="translate(36 35) scale(-1 -1)"><path d="M2 5L5 2L12.500 9.500L16.500 5.500V16.500H5.500L9.500 12.500Z"/></g></g></g></svg></div>
<div class="tb" style="left:398px;top:107px"><svg width="36" height="35" viewBox="0 0 36 35"><g transform="translate(0 -2.5)"><path d="M18 6l12 18h-24z" fill="#f57a14"/><rect x="6" y="26" width="24" height="5" fill="#f57a14"/></g></svg></div>
<div class="tb" style="left:437px;top:107px"><svg width="36" height="35" viewBox="0 0 36 35"><g transform="translate(0 -2.5)"><defs><linearGradient id="og" x1="0" y1="0" x2="1" y2="1"><stop offset="0" stop-color="#ffb060"/><stop offset=".5" stop-color="#f57a14"/><stop offset="1" stop-color="#c85008"/></linearGradient><linearGradient id="ogv" x1="0" y1="0" x2="0" y2="1"><stop offset="0" stop-color="#ff9a3a"/><stop offset="1" stop-color="#e05a08"/></linearGradient><radialGradient id="br" cx=".4" cy=".35" r=".75"><stop offset="0" stop-color="#d87a28"/><stop offset=".6" stop-color="#a84a10"/><stop offset="1" stop-color="#5a2204"/></radialGradient><linearGradient id="shine" x1="0" y1="0" x2="1" y2="0"><stop offset="0" stop-color="#ffe0b0"/><stop offset=".5" stop-color="#ff8a20"/><stop offset="1" stop-color="#ffd090"/></linearGradient><linearGradient id="gl" x1="0" y1="0" x2="1" y2="1"><stop offset="0" stop-color="#fff"/><stop offset="1" stop-color="#c8c8d0"/></linearGradient><linearGradient id="hd" x1="0" y1="0" x2="1" y2="1"><stop offset="0" stop-color="#8a4a18"/><stop offset="1" stop-color="#3a1a04"/></linearGradient><linearGradient id="mt" x1="0" y1="0" x2="1" y2="0"><stop offset="0" stop-color="#6a6a6a"/><stop offset=".5" stop-color="#e8e8e8"/><stop offset="1" stop-color="#5a5a5a"/></linearGradient><radialGradient id="cone" cx=".35" cy=".7" r=".8"><stop offset="0" stop-color="#ff8a30"/><stop offset=".5" stop-color="#e84a08"/><stop offset="1" stop-color="#8a2000"/></radialGradient></defs><rect x="2" y="13" width="6" height="9" fill="#f57a14" stroke="#1a1000" stroke-width="1.300"/><path d="M11 13h8v-6l13 10.500l-13 10.500v-6h-8z" fill="#f8d020" stroke="#1a1000" stroke-width="1.500"/><path d="M12 16h9v-5l8 6.500z" fill="#fff0a0" opacity=".7"/></g></svg></div>
<div class="tb" style="left:476px;top:107px"><svg width="36" height="35" viewBox="0 0 36 35"><g transform="translate(0 -2.5)"><rect x="2.500" y="4" width="31" height="28" rx="3" fill="#f8c8a8"/><rect x="2.500" y="4" width="31" height="9" rx="3" fill="#f06a18"/><path d="M10 4v9M18 4v9M26 4v9" stroke="#ffd0b0" stroke-width="1.300"/><rect x="10" y="14" width="7" height="7" fill="#fff"/><rect x="18" y="14" width="7" height="7" fill="#fff"/><rect x="26" y="14" width="7" height="7" fill="#fff"/><rect x="10" y="22" width="7" height="7" fill="#fff"/><rect x="18" y="22" width="7" height="7" fill="#fff"/><rect x="26" y="22" width="7" height="7" fill="#fff"/></g></svg></div>
<div class="tb" style="left:515px;top:107px"><svg width="36" height="35" viewBox="0 0 36 35"><g transform="translate(0 -2.5)"><path d="M2 13c10-3 20-2 31 3" fill="none" stroke="#0a0a0a" stroke-width="1.800"/><circle cx="12" cy="10" r="3" fill="#f05a10"/><circle cx="8" cy="23" r="7" fill="#fff" stroke="#ccc"/><circle cx="25" cy="22" r="3.500" fill="#e8b070"/><path d="M14 20c5-2 9 0 12 4" fill="none" stroke="#1a2a6a" stroke-width="1.300"/></g></svg></div>
<div class="tb" style="left:554px;top:107px"><svg width="36" height="35" viewBox="0 0 36 35"><g transform="translate(0 -2.5)"><g fill="#a0a0a0"><path d="M2 5L5 2L12.500 9.500L16.500 5.500V16.500H5.500L9.500 12.500Z"/><g transform="translate(36 0) scale(-1 1)"><path d="M2 5L5 2L12.500 9.500L16.500 5.500V16.500H5.500L9.500 12.500Z"/></g><g transform="translate(0 35) scale(1 -1)"><path d="M2 5L5 2L12.500 9.500L16.500 5.500V16.500H5.500L9.500 12.500Z"/></g><g transform="translate(36 35) scale(-1 -1)"><path d="M2 5L5 2L12.500 9.500L16.500 5.500V16.500H5.500L9.500 12.500Z"/></g></g></g></svg></div>
<div class="tb" style="left:593px;top:107px"><svg width="36" height="35" viewBox="0 0 36 35"><g transform="translate(0 -2.5)"><path d="M2 8h10M2 13h12M2 18h14M6 4v20M11 6v18" stroke="#bbb" stroke-width=".8"/><path d="M3 1l16 19" stroke="#0a0a0a" stroke-width="1.600"/><text x="11" y="17" font-size="18" font-weight="bold" fill="#f05a10" font-family="Liberation Sans" textLength="24" lengthAdjust="spacingAndGlyphs">EQ</text></g></svg></div>
<div class="tb" style="left:697px;top:107px;background:#5b79b2;border-color:#5b79b2"><svg width="36" height="35" viewBox="0 0 36 35"><path d="M30.600 14.100A13 13 0 1 1 21.400 4.900" fill="none" stroke="#f26a12" stroke-width="3.200" stroke-linecap="round"/><path d="M18.500 17l11-11" stroke="#f26a12" stroke-width="3.200" stroke-linecap="round"/><path d="M24.500 1.500h9.500v9.500z" fill="#f26a12"/></svg></div>
<div class="tb" style="left:736px;top:107px"><svg width="36" height="35" viewBox="0 0 36 35"><rect x="4.300" y="7" width="25" height="17" fill="none" stroke="#d9541e" stroke-width="2.600" stroke-dasharray="4.800 3"/><path d="M21 19l.8 12.500l3.200-3l2.800 5l2.200-1.200l-2.800-5l4.300-.8z" fill="#fff" stroke="#111" stroke-width="1.100"/></svg></div>
<div class="tb" style="left:775px;top:107px"><svg width="36" height="35" viewBox="0 0 36 35"><path d="M3.500 1.500l27.500 30h-27.500zM8 13.700v13.900h13z" fill="#f8b414" fill-rule="evenodd" stroke="#e08a06" stroke-width="1.200" stroke-linejoin="round"/></svg></div>
<div class="a" style="left:3px;top:698px;width:1351px;height:8px;border-radius:0 0 5px 5px;background:linear-gradient(#26367a,#34468e 50%,#4e63ab)"></div>
<div class="sp" style="left:8px;width:69px"></div>
<div class="sp" style="left:79px;width:226px"></div>
<div class="sp" style="left:346px;width:90px"></div>
<div class="sp" style="left:439px;width:42px"></div>
<div class="sp" style="left:484px;width:184px"></div>
<div class="sp" style="left:670px;width:379px"></div>
<span class="t" style="left:14px;top:677.0px;font-size:12px;line-height:16px;color:#000;letter-spacing:-0.893px;">Zoom=2</span>
<span class="t" style="left:85px;top:677.0px;font-size:12px;line-height:16px;color:#000;letter-spacing:-0.68px;">Alpha= 01h13m32.812s Delta= +70°56&#x27;07.83&quot;</span>
<div class="a" style="left:306px;top:675px;width:40px;height:20px;background:#fff;border:1px solid #8a8fa8"></div>
<span class="t" style="left:309px;top:676.5px;font-size:13px;line-height:17px;color:#000;letter-spacing:-0.953px;">Eq</span>
<div class="a" style="left:328px;top:676px;width:17px;height:18px;background:linear-gradient(#4a5a9c,#1e2a66);border:1px solid #16204e"><svg width="15" height="16" style="left:0;top:0"><path d="M3.5 6.5h8l-4 5z" fill="#dfe4ff"/></svg></div>
<span class="t" style="left:352px;top:677.0px;font-size:12px;line-height:16px;color:#000;letter-spacing:-0.671px;">Objets: 4134</span>
<span class="t" style="left:448px;top:677.0px;font-size:12px;line-height:16px;color:#000;letter-spacing:-1.115px;">Cas</span>
<span class="t" style="left:491px;top:677.0px;font-size:12px;line-height:16px;color:#000;letter-spacing:-0.72px;">Champ=180 ° x 120 °</span>
<span class="t" style="left:676px;top:677.0px;font-size:12px;line-height:16px;color:#000;letter-spacing:-0.653px;">Mode carte Azimutal, Azimutal fixe, Date/heure PC temps réel</span>
<svg style="left:8px;top:148px;background:#000" width="1340" height="523" viewBox="0 0 1340 523"><defs><filter id="bl" x="-100%" y="-100%" width="300%" height="300%"><feGaussianBlur stdDeviation="0.7"/></filter><filter id="bl2" x="-100%" y="-100%" width="300%" height="300%"><feGaussianBlur stdDeviation="1.3"/></filter></defs><path d="M664.0 443.0L668.0 452.0L664.0 464.0L672.0 477.0L678.0 497.0L682.0 524.0L1019.0 524.0L1030.0 502.0L1033.0 480.0L992.0 468.0L988.0 426.0L952.0 404.0L948.0 379.0L937.0 370.0L713.0 370.0L713.0 94.0L764.0 94.0L758.0 86.0L747.0 73.0L723.0 70.0L718.0 64.0L729.0 42.0L730.0 20.0L725.0 10.0L712.0 11.0L695.0 26.0L694.0 52.0L694.0 443.0Z" fill="#222222"/><path d="M723.0 386.0L734.0 377.0L761.0 373.0L871.0 373.0L873.0 386.0L879.5 396.0L892.0 402.0L895.0 415.0L900.0 425.0L909.0 427.0L915.0 434.0L919.0 442.0L922.0 454.0L919.0 472.0L919.0 487.0L931.0 504.0L937.0 524.0L919.0 524.0L913.0 511.0L902.0 496.0L897.0 484.0L900.0 471.0L908.7 458.7L904.5 442.0L892.0 429.5L875.0 424.0L865.0 425.0L852.0 438.0L838.0 450.0L827.0 456.6L819.0 461.0L813.0 471.0L817.0 484.0L822.0 494.0L821.0 502.0L811.0 504.5L804.5 494.0L796.0 479.5L786.0 467.0L779.5 450.0L771.0 436.0L754.5 417.0L752.0 409.0ZM781.6 427.4L792.0 423.0L804.5 438.0L817.0 458.7L808.7 465.0L792.0 446.0Z" fill="#383838" fill-rule="evenodd" stroke="#383838" stroke-width="3" stroke-linejoin="round"/><path d="M695.0 26.0L712.0 11.0L725.0 10.0L730.0 20.0L729.0 42.0L718.0 64.0L707.0 66.0L695.0 66.0Z" fill="#383838"/><path d="M1114.0 -1.0L1132.0 28.0L1146.0 60.0L1158.0 93.0" stroke="#dcdcdc" stroke-width="1.1" fill="none" /><path d="M1108.0 -1.0L1126.0 28.0L1140.0 60.0L1152.0 93.0" stroke="#9a9a9a" stroke-width="0.8" fill="none" /><path d="M1091.0 -1.0L1111.0 28.0L1129.0 60.0L1144.0 93.0" stroke="#4b2296" stroke-width="1.3" fill="none" /><path d="M1098.0 -1.0L1118.0 28.0L1135.0 60.0L1149.0 93.0" stroke="#4b2296" stroke-width="1" fill="none" /><path d="M1042.0 -1.0L1058.0 32.0L1072.0 64.0L1084.0 93.0" stroke="#6aa818" stroke-width="1.3" fill="none" /><path d="M1010.0 -1.0L1038.0 37.0L1060.0 67.0L1078.0 93.0" stroke="#4b2296" stroke-width="1.3" fill="none" /><path d="M188.0 443.0L200.0 464.0L217.0 492.0L237.0 523.0" stroke="#f0f0f0" stroke-width="2.2" fill="none" /><path d="M182.0 443.0L195.0 467.0L211.0 494.0L228.0 523.0" stroke="#d8d8d8" stroke-width="1" fill="none" /><path d="M185.0 443.0L198.0 466.0L214.0 493.0L232.0 523.0" stroke="#c02020" stroke-width="1" fill="none" /><path d="M1173.5 372.0L1168.0 390.0L1163.0 406.0" stroke="#d8d8d8" stroke-width="2.2" fill="none" /><path d="M1171.0 372.0L1166.0 388.0" stroke="#c02020" stroke-width="1" fill="none" /><circle cx="1159.5" cy="414" r="8.5" fill="#000" stroke="#ddd" stroke-width="1.4"/><text x="1155" y="417" font-size="9" fill="#c8c8c8" font-family="Liberation Sans">E</text><path d="M774.0 0.0L788.6 19.0L832.6 26.5L850.0 0.0" stroke="#43208a" stroke-width="1.1" fill="none" /><path d="M825.0 0.0L832.6 26.5" stroke="#43208a" stroke-width="1.1" fill="none" /><path d="M845.7 39.7L902.8 93.5" stroke="#43208a" stroke-width="1.1" fill="none" /><path d="M935.8 0.0L992.0 48.5L946.8 93.5" stroke="#43208a" stroke-width="1.1" fill="none" /><path d="M706.0 66.0L716.0 50.7" stroke="#43208a" stroke-width="1.1" fill="none" /><path d="M706.0 66.0L716.0 94.6" stroke="#43208a" stroke-width="1.1" fill="none" /><path d="M788.6 19.0L798.0 29.0" stroke="#aaa" stroke-width="0.8" fill="none" /><path d="M767.0 47.0L778.0 57.0" stroke="#aaa" stroke-width="0.8" fill="none" /><path d="M939.7 372.5L897.0 483.8" stroke="#43208a" stroke-width="1.1" fill="none" /><path d="M897.0 481.0L980.7 442.8" stroke="#43208a" stroke-width="1.1" fill="none" /><path d="M897.0 483.8L910.4 504.3L963.0 519.0L1018.7 504.3L1023.0 488.0" stroke="#43208a" stroke-width="1.1" fill="none" /><path d="M784.5 372.5L769.8 410.6" stroke="#43208a" stroke-width="1.1" fill="none" /><path d="M810.8 495.5L709.8 508.7L720.0 524.0" stroke="#43208a" stroke-width="1.1" fill="none" /><path d="M1056.0 370.0L1045.0 382.0" stroke="#43208a" stroke-width="1.1" fill="none" /><path d="M682.0 505.7L740.6 510.0L828.4 520.4L892.0 524.0" stroke="#c01010" stroke-width="1.1" fill="none" /><path d="M952.0 524.0L974.8 519.0L1033.4 501.3L1082.0 483.8" stroke="#c01010" stroke-width="1.1" fill="none" /><circle cx="739.7" cy="511" r="2.5" fill="none" stroke="#e02020" stroke-width="1.2"/><path d="M741.0 513.0L749.0 520.0" stroke="#ccc" stroke-width="0.8" fill="none" /><rect x="748" y="517" width="26" height="8" fill="#222"/><text x="749" y="525" font-size="9" fill="#aaa" font-family="Liberation Sans">IC342</text><path d="M1113.0 371.0L1108.0 397.0L1103.0 419.0L1096.0 452.0" stroke="#5aa020" stroke-width="1.2" fill="none" /><path d="M330.0 444.0L349.9 480.5L393.3 522.0" stroke="#43208a" stroke-width="1.1" fill="none" /><path d="M264.9 488.4L306.4 518.0" stroke="#43208a" stroke-width="1.1" fill="none" /><path d="M405.0 445.0L413.0 456.0L440.8 444.0" stroke="#43208a" stroke-width="1.1" fill="none" /><path d="M502.0 444.0L545.5 470.6" stroke="#43208a" stroke-width="1.1" fill="none" /><path d="M553.0 443.0L534.0 523.0" stroke="#9c9cf0" stroke-width="2.2" fill="none" /><path d="M464.0 443.0L545.0 472.0L612.0 492.0L682.0 505.7" stroke="#c01010" stroke-width="1.1" fill="none" /><circle cx="545.5" cy="471.5" r="2.2" fill="none" stroke="#d8a0d8" stroke-width="1"/><circle cx="552.0" cy="472.0" r="2.2" fill="#e8d8b0" opacity="0.9" filter="url(#bl)"/><path d="M865.1 52.9v2.5M865.0 79.8v2M798.2 48.6v3M950.2 10.6v2M787.4 51.0v1.5M900.9 38.1v2.5M915.5 58.0v2M907.8 77.7v1.5M766.9 19.3v2M901.9 72.8v2M862.1 78.7v3M810.4 28.8v1.5M917.6 43.6v2M853.7 52.2v1.5M929.0 30.7v2M880.2 4.7v3M943.6 38.4v2M848.6 89.2v1.5M805.4 86.4v1.5M869.5 91.2v2.5M856.9 53.5v2M946.6 26.5v1.5M829.8 3.4v2.5M941.5 12.7v2M928.8 3.0v2.5M951.3 18.2v3M799.1 48.3v2M856.8 36.9v2.5M857.2 21.4v2M968.1 90.7v3M828.0 82.5v2M798.8 92.6v3M912.5 11.1v2M805.3 25.5v3M834.2 29.0v1.5M770.6 21.0v2M755.9 35.5v3M865.3 89.3v2.5M960.1 14.4v2.5M797.7 16.0v2M956.5 24.7v2M791.6 59.2v3M801.1 88.5v2.5M902.9 40.4v1.5M779.3 48.6v2M811.6 66.1v2M857.2 84.3v2.5M825.4 18.0v1.5M783.6 45.6v3M905.6 27.5v2M939.2 8.3v2.5M863.4 7.5v2M822.5 50.3v2M775.0 14.6v2.5M997.1 61.8v3M898.1 14.8v1.5M982.9 45.2v2M927.2 89.6v1.5M901.6 8.8v1.5M934.6 31.0v1.5M770.8 51.7v1.5M977.0 69.1v2M950.3 85.3v2M773.2 45.1v1.5M969.8 40.0v1.5M967.9 54.1v3M917.6 36.5v1.5M904.2 9.3v1.5M1000.3 82.1v2M849.1 68.9v3M866.4 44.1v3M772.9 70.3v1.5M829.6 10.0v1.5M809.6 65.5v2.5M947.0 62.1v2.5M816.0 3.0v2M787.8 57.7v3M794.4 84.4v2.5M876.6 24.0v2.5M918.5 20.1v2.5" stroke="#d41616" stroke-width="1"/><path d="M924.2 64.7v2M887.7 22.7v2M925.1 63.8v2.5M948.0 61.1v3M872.2 62.6v2.5M912.4 44.1v2M878.5 75.2v1.5M928.5 75.3v2.5M959.8 27.7v1.5M962.2 65.0v2M882.0 86.2v2.5M884.4 49.5v2M931.3 79.3v3M890.0 67.3v1.5M933.1 55.0v1.5M916.1 49.2v3M923.7 61.6v3M875.4 69.2v2M979.4 65.1v2M975.5 78.3v2.5M946.1 29.4v2M908.9 46.1v3M961.1 54.5v1.5M913.9 77.8v1.5M929.1 36.4v2.5M876.8 35.3v3M883.3 57.7v2M880.6 39.8v2.5M902.4 44.4v1.5M928.5 45.9v2M903.0 53.0v2.5" stroke="#d41616" stroke-width="1"/><path d="M1087.1 24.1v2M1104.5 60.6v2M1051.1 59.6v1.5M1047.8 49.4v2M1008.9 2.8v3M1156.2 92.8v2M1091.4 7.9v2M1121.7 76.9v2M1067.4 73.8v2M1106.3 45.3v3M1121.5 91.3v2.5M1102.7 59.4v2M1127.2 76.2v2M1094.2 64.3v2M1101.1 41.0v3M1026.4 16.4v3M1055.9 33.1v2M1072.2 56.3v2M1087.9 53.7v3M1028.8 21.9v2M1050.7 12.2v2.5M1097.4 36.2v1.5M1063.6 20.9v2.5M1048.0 59.4v2.5M1063.6 68.5v2M1104.0 18.9v2M1096.9 48.4v3M1064.1 22.1v3M1078.3 4.0v1.5M1097.0 33.4v2M1025.5 16.9v3M1025.4 10.4v1.5M1085.3 39.9v3M1140.1 64.6v2M1088.8 60.0v2M1064.6 92.8v2M1106.5 84.3v1.5M1103.6 87.3v1.5M1032.5 0.5v2.5M1085.0 52.1v2.5M1029.6 20.7v1.5M1096.2 35.0v2M1064.4 68.7v2M1075.8 24.0v2M1102.6 71.9v2.5M1045.3 19.0v1.5M1064.1 29.5v1.5M1102.6 70.5v1.5M1065.0 60.8v2.5M1083.4 44.7v2M1058.6 5.7v2M1007.1 13.8v2M1064.9 76.6v2M1060.5 56.1v2M1042.3 11.9v2.5M1092.0 54.4v2.5M1058.5 4.1v2M1055.2 90.0v2M1103.7 83.0v2M1141.4 83.9v2M1108.0 8.3v1.5M1104.8 32.1v2M1023.2 4.4v2M1126.5 48.4v2.5M1049.7 18.1v1.5M1138.8 78.1v1.5M1133.2 57.0v2M1057.6 49.6v3" stroke="#d41616" stroke-width="1"/><path d="M924.5 456.3v3M982.8 404.5v2M937.4 380.7v2.5M938.2 454.1v2.5M944.6 481.1v2M932.6 480.2v2M973.5 415.3v3M927.5 438.2v2M928.5 450.2v1.5M958.6 375.3v2M931.3 489.4v2.5M957.8 484.1v3M923.6 448.9v1.5M957.5 448.5v2M929.7 383.4v2.5M953.0 395.3v2.5M960.7 430.2v2M952.0 384.3v1.5M936.5 386.2v2M968.8 385.7v3M958.0 423.0v2M954.4 426.6v2.5M949.2 422.1v1.5M934.9 419.3v2.5M977.6 484.7v1.5M956.8 430.7v2M957.0 374.3v2.5M983.1 422.8v2M966.7 416.2v2.5M935.4 408.3v2M920.0 439.2v2M923.7 383.7v2M938.9 489.9v3M952.5 434.6v2M986.3 385.7v2M971.2 372.2v2M978.1 403.7v2M931.5 453.6v2M937.4 463.4v2M919.2 482.6v2M952.6 473.0v2M951.3 401.4v2.5M955.2 464.8v2" stroke="#d41616" stroke-width="1"/><path d="M1078.5 371.9v1.5M997.8 450.9v1.5M987.5 436.2v2M1067.7 452.0v2M993.7 408.8v2M1010.1 392.3v2M1075.5 387.7v2M1061.8 389.1v3M1024.0 417.7v2.5M1031.0 408.3v2M1025.9 396.5v2.5M1022.5 440.9v1.5M1031.0 447.5v1.5M1001.6 414.2v3M1075.8 426.9v1.5M1010.7 411.1v1.5M1071.2 403.0v1.5M1028.9 439.1v3M1011.6 445.7v2M999.9 447.8v2M989.8 396.1v2M1064.5 396.8v2.5M1015.6 406.8v1.5M1057.7 438.9v2M1029.4 380.3v2.5M1021.0 372.2v2M1074.8 431.0v2M988.4 407.5v1.5M1076.4 383.8v2.5M1038.5 441.7v2.5M986.3 376.0v1.5M1039.0 408.4v3M1026.9 429.4v1.5M1043.1 375.6v2.5" stroke="#d41616" stroke-width="1"/><path d="M1020.2 485.6v2.5M1009.7 452.4v2M1010.6 467.6v2M1015.6 475.5v2M1066.2 494.1v1.5M1053.6 518.9v2M993.6 462.8v3M1044.1 453.9v2.5" stroke="#d41616" stroke-width="1"/><path d="M321.9 484.7v2M305.5 466.6v3M238.1 495.6v1.5M309.9 463.4v2.5M269.3 463.7v2M311.7 494.0v2.5M270.3 454.7v2M344.8 507.4v2M303.6 512.9v2M223.9 469.8v1.5M217.5 468.1v2.5M300.7 493.9v2.5M350.6 507.4v1.5M287.1 477.8v2M256.5 447.9v3M342.0 504.4v2M225.4 453.1v2M264.1 485.1v2M230.9 449.0v3M301.1 508.6v2M244.0 463.5v2M250.5 468.9v3M255.2 489.1v1.5M323.2 447.9v1.5M249.8 480.4v1.5M267.3 500.9v1.5M320.9 502.4v2.5M266.3 445.6v2M306.5 475.4v3M255.0 507.7v2M326.0 519.0v2M320.9 447.9v2M350.3 506.8v2M314.7 447.9v1.5M265.7 497.9v2M276.0 495.3v1.5M288.6 486.3v2M327.3 461.5v3M238.2 456.7v2.5M327.3 489.7v2M285.6 487.2v2.5M255.4 450.0v2M244.4 461.9v2M316.3 519.6v3M274.2 488.3v2M260.3 519.2v3M243.8 462.0v2M338.0 521.9v2M271.2 477.8v1.5M284.9 484.5v2M354.0 517.5v3M287.1 503.7v2.5M250.9 510.7v3M216.4 481.0v2M201.9 458.4v2.5M250.9 470.3v1.5M272.1 464.8v1.5M254.6 446.2v2M350.5 491.8v1.5M335.9 504.7v1.5M320.6 479.5v2M237.5 511.7v2.5M285.8 505.9v1.5M235.2 501.6v3M251.0 464.5v3M349.7 489.3v2.5M212.4 475.6v2M293.3 450.3v1.5M334.5 492.9v2M250.9 469.1v3M352.3 509.3v2M246.4 478.5v1.5M265.1 497.1v2M231.8 481.7v3" stroke="#d41616" stroke-width="1"/><path d="M360.1 494.3v2M372.3 516.3v2.5M360.4 466.5v2M363.2 512.3v1.5M390.1 495.3v2M503.8 515.7v2M357.5 459.2v2M442.9 459.3v2.5M367.4 466.7v1.5M394.0 474.8v2.5M435.0 489.1v3M379.2 464.5v2M437.9 465.4v3M515.8 455.0v2M361.9 493.2v2.5M349.6 483.0v3M343.3 497.5v3M376.5 508.1v3M420.6 481.4v2.5M354.0 450.0v1.5M436.1 459.5v2.5M488.4 506.2v3M323.3 519.2v1.5M422.5 506.1v2M402.9 453.8v2.5M464.8 471.4v2M393.1 508.3v2M513.6 477.0v3M503.3 512.3v2.5M352.7 456.4v2.5M323.2 486.3v2.5M437.2 444.7v3M483.8 476.1v2.5M422.7 486.4v2.5M497.6 507.8v2M369.3 508.9v2M523.1 499.5v2M426.1 503.3v1.5M517.3 501.7v2M526.3 483.8v2M377.1 449.8v3M468.7 504.5v2M516.7 452.1v2" stroke="#d41616" stroke-width="1"/><path d="M633.6 503.7v3M550.1 459.2v2M681.5 466.0v2M621.2 452.2v2.5M581.1 464.4v1.5M648.0 512.2v1.5M617.4 459.3v1.5M670.1 452.7v2.5" stroke="#d41616" stroke-width="1"/><path d="M746.6 66.9v2M709.8 62.9v1.5M744.7 57.8v2M696.5 44.5v1.5M700.9 37.5v3M720.6 28.7v2M730.6 66.5v2M719.4 62.2v2.5" stroke="#d41616" stroke-width="1"/><path d="M697.3 19.5L704.3 26.5M704.3 19.5L697.3 26.5" stroke="#e8e8e8" stroke-width="1.0"/><path d="M763.5 11.5L770.5 18.5M770.5 11.5L763.5 18.5" stroke="#e8e8e8" stroke-width="1.0"/><path d="M767.5 60.5L774.5 67.5M774.5 60.5L767.5 67.5" stroke="#e8e8e8" stroke-width="1.0"/><path d="M776.5 70.3L783.5 77.3M783.5 70.3L776.5 77.3" stroke="#e8e8e8" stroke-width="1.0"/><path d="M782.9 72.5L789.9 79.5M789.9 72.5L782.9 79.5" stroke="#e8e8e8" stroke-width="1.0"/><path d="M831.9 15.5L838.9 22.5M838.9 15.5L831.9 22.5" stroke="#e8e8e8" stroke-width="1.0"/><path d="M867.9 13.5L874.9 20.5M874.9 13.5L867.9 20.5" stroke="#e8e8e8" stroke-width="1.0"/><path d="M886.5 3.5L893.5 10.5M893.5 3.5L886.5 10.5" stroke="#e8e8e8" stroke-width="1.0"/><path d="M910.5 22.0L917.5 29.0M917.5 22.0L910.5 29.0" stroke="#e8e8e8" stroke-width="1.0"/><path d="M940.0 59.5L947.0 66.5M947.0 59.5L940.0 66.5" stroke="#e8e8e8" stroke-width="1.0"/><path d="M953.5 58.2L960.5 65.2M960.5 58.2L953.5 65.2" stroke="#e8e8e8" stroke-width="1.0"/><path d="M972.9 59.5L979.9 66.5M979.9 59.5L972.9 66.5" stroke="#e8e8e8" stroke-width="1.0"/><path d="M968.5 35.5L975.5 42.5M975.5 35.5L968.5 42.5" stroke="#e8e8e8" stroke-width="1.0"/><path d="M974.0 34.5L981.0 41.5M981.0 34.5L974.0 41.5" stroke="#e8e8e8" stroke-width="1.0"/><path d="M947.5 83.0L954.5 90.0M954.5 83.0L947.5 90.0" stroke="#e8e8e8" stroke-width="1.0"/><path d="M959.1 76.2L966.1 83.2M966.1 76.2L959.1 83.2" stroke="#e8e8e8" stroke-width="1.0"/><path d="M982.5 0.0L989.5 7.0M989.5 0.0L982.5 7.0" stroke="#e8e8e8" stroke-width="1.0"/><path d="M972.5 90.0L979.5 97.0M979.5 90.0L972.5 97.0" stroke="#e8e8e8" stroke-width="1.0"/><path d="M1003.0 3.5L1010.0 10.5M1010.0 3.5L1003.0 10.5" stroke="#e8e8e8" stroke-width="1.0"/><path d="M1022.0 5.0L1029.0 12.0M1029.0 5.0L1022.0 12.0" stroke="#e8e8e8" stroke-width="1.0"/><path d="M1057.5 5.0L1064.5 12.0M1064.5 5.0L1057.5 12.0" stroke="#e8e8e8" stroke-width="1.0"/><path d="M1059.1 -1.5L1066.1 5.5M1066.1 -1.5L1059.1 5.5" stroke="#e8e8e8" stroke-width="1.0"/><path d="M1084.5 18.2L1091.5 25.2M1091.5 18.2L1084.5 25.2" stroke="#e8e8e8" stroke-width="1.0"/><path d="M1092.1 6.5L1099.1 13.5M1099.1 6.5L1092.1 13.5" stroke="#e8e8e8" stroke-width="1.0"/><path d="M1003.0 35.9L1010.0 42.9M1010.0 35.9L1003.0 42.9" stroke="#e8e8e8" stroke-width="1.0"/><path d="M1020.1 38.5L1027.1 45.5M1027.1 38.5L1020.1 45.5" stroke="#e8e8e8" stroke-width="1.0"/><path d="M1063.5 31.5L1070.5 38.5M1070.5 31.5L1063.5 38.5" stroke="#e8e8e8" stroke-width="1.0"/><path d="M1065.5 40.5L1072.5 47.5M1072.5 40.5L1065.5 47.5" stroke="#e8e8e8" stroke-width="1.0"/><path d="M1054.9 52.0L1061.9 59.0M1061.9 52.0L1054.9 59.0" stroke="#e8e8e8" stroke-width="1.0"/><path d="M1090.5 38.0L1097.5 45.0M1097.5 38.0L1090.5 45.0" stroke="#e8e8e8" stroke-width="1.0"/><path d="M1102.4 28.0L1109.4 35.0M1109.4 28.0L1102.4 35.0" stroke="#e8e8e8" stroke-width="1.0"/><path d="M1109.2 20.1L1116.2 27.1M1116.2 20.1L1109.2 27.1" stroke="#e8e8e8" stroke-width="1.0"/><path d="M1109.2 40.5L1116.2 47.5M1116.2 40.5L1109.2 47.5" stroke="#e8e8e8" stroke-width="1.0"/><path d="M1096.5 49.5L1103.5 56.5M1103.5 49.5L1096.5 56.5" stroke="#e8e8e8" stroke-width="1.0"/><path d="M1097.9 64.3L1104.9 71.3M1104.9 64.3L1097.9 71.3" stroke="#e8e8e8" stroke-width="1.0"/><path d="M1109.5 82.5L1116.5 89.5M1116.5 82.5L1109.5 89.5" stroke="#e8e8e8" stroke-width="1.0"/><path d="M1120.3 12.5L1127.3 19.5M1127.3 12.5L1120.3 19.5" stroke="#e8e8e8" stroke-width="1.0"/><path d="M1124.2 19.5L1131.2 26.5M1131.2 19.5L1124.2 26.5" stroke="#e8e8e8" stroke-width="1.0"/><path d="M1132.9 43.3L1139.9 50.3M1139.9 43.3L1132.9 50.3" stroke="#e8e8e8" stroke-width="1.0"/><path d="M1132.9 56.5L1139.9 63.5M1139.9 56.5L1132.9 63.5" stroke="#e8e8e8" stroke-width="1.0"/><path d="M1144.0 63.5L1151.0 70.5M1151.0 63.5L1144.0 70.5" stroke="#e8e8e8" stroke-width="1.0"/><path d="M1146.5 70.5L1153.5 77.5M1153.5 70.5L1146.5 77.5" stroke="#e8e8e8" stroke-width="1.0"/><path d="M1144.0 82.5L1151.0 89.5M1151.0 82.5L1144.0 89.5" stroke="#e8e8e8" stroke-width="1.0"/><path d="M1112.5 7.5L1119.5 14.5M1119.5 7.5L1112.5 14.5" stroke="#e8e8e8" stroke-width="1.0"/><path d="M694.5 438.5L701.5 445.5M701.5 438.5L694.5 445.5" stroke="#e8e8e8" stroke-width="1.0"/><path d="M797.5 388.9L804.5 395.9M804.5 388.9L797.5 395.9" stroke="#e8e8e8" stroke-width="1.0"/><path d="M773.5 434.9L780.5 441.9M780.5 434.9L773.5 441.9" stroke="#e8e8e8" stroke-width="1.0"/><path d="M778.1 452.5L785.1 459.5M785.1 452.5L778.1 459.5" stroke="#e8e8e8" stroke-width="1.0"/><path d="M824.0 452.5L831.0 459.5M831.0 452.5L824.0 459.5" stroke="#e8e8e8" stroke-width="1.0"/><path d="M803.8 470.9L810.8 477.9M810.8 470.9L803.8 477.9" stroke="#e8e8e8" stroke-width="1.0"/><path d="M921.5 438.5L928.5 445.5M928.5 438.5L921.5 445.5" stroke="#e8e8e8" stroke-width="1.0"/><path d="M940.5 445.1L947.5 452.1M947.5 445.1L940.5 452.1" stroke="#e8e8e8" stroke-width="1.0"/><path d="M964.0 445.1L971.0 452.1M971.0 445.1L964.0 452.1" stroke="#e8e8e8" stroke-width="1.0"/><path d="M977.8 445.1L984.8 452.1M984.8 445.1L977.8 452.1" stroke="#e8e8e8" stroke-width="1.0"/><path d="M953.8 423.2L960.8 430.2M960.8 423.2L953.8 430.2" stroke="#e8e8e8" stroke-width="1.0"/><path d="M956.1 400.5L963.1 407.5M963.1 400.5L956.1 407.5" stroke="#e8e8e8" stroke-width="1.0"/><path d="M958.1 404.1L965.1 411.1M965.1 404.1L958.1 411.1" stroke="#e8e8e8" stroke-width="1.0"/><path d="M955.2 451.0L962.2 458.0M962.2 451.0L955.2 458.0" stroke="#e8e8e8" stroke-width="1.0"/><path d="M959.5 459.5L966.5 466.5M966.5 459.5L959.5 466.5" stroke="#e8e8e8" stroke-width="1.0"/><path d="M955.2 476.5L962.2 483.5M962.2 476.5L955.2 483.5" stroke="#e8e8e8" stroke-width="1.0"/><path d="M1002.5 451.5L1009.5 458.5M1009.5 451.5L1002.5 458.5" stroke="#e8e8e8" stroke-width="1.0"/><path d="M1034.9 426.5L1041.9 433.5M1041.9 426.5L1034.9 433.5" stroke="#e8e8e8" stroke-width="1.0"/><path d="M1056.8 398.9L1063.8 405.9M1063.8 398.9L1056.8 405.9" stroke="#e8e8e8" stroke-width="1.0"/><path d="M1017.5 484.5L1024.5 491.5M1024.5 484.5L1017.5 491.5" stroke="#e8e8e8" stroke-width="1.0"/><path d="M1055.5 480.5L1062.5 487.5M1062.5 480.5L1055.5 487.5" stroke="#e8e8e8" stroke-width="1.0"/><path d="M1068.0 445.1L1075.0 452.1M1075.0 445.1L1068.0 452.1" stroke="#e8e8e8" stroke-width="1.0"/><path d="M1004.1 368.5L1011.1 375.5M1011.1 368.5L1004.1 375.5" stroke="#e8e8e8" stroke-width="1.0"/><path d="M212.0 453.3L219.0 460.3M219.0 453.3L212.0 460.3" stroke="#e8e8e8" stroke-width="1.0"/><path d="M219.9 459.2L226.9 466.2M226.9 459.2L219.9 466.2" stroke="#e8e8e8" stroke-width="1.0"/><path d="M202.1 457.2L209.1 464.2M209.1 457.2L202.1 464.2" stroke="#e8e8e8" stroke-width="1.0"/><path d="M208.0 482.9L215.0 489.9M215.0 482.9L208.0 489.9" stroke="#e8e8e8" stroke-width="1.0"/><path d="M215.9 492.8L222.9 499.8M222.9 492.8L215.9 499.8" stroke="#e8e8e8" stroke-width="1.0"/><path d="M227.8 498.7L234.8 505.7M234.8 498.7L227.8 505.7" stroke="#e8e8e8" stroke-width="1.0"/><path d="M214.0 504.5L221.0 511.5M221.0 504.5L214.0 511.5" stroke="#e8e8e8" stroke-width="1.0"/><path d="M318.7 471.0L325.7 478.0M325.7 471.0L318.7 478.0" stroke="#e8e8e8" stroke-width="1.0"/><path d="M264.2 509.5L271.2 516.5M271.2 509.5L264.2 516.5" stroke="#e8e8e8" stroke-width="1.0"/><path d="M393.8 471.8L400.8 478.8M400.8 471.8L393.8 478.8" stroke="#e8e8e8" stroke-width="1.0"/><path d="M401.7 450.5L408.7 457.5M408.7 450.5L401.7 457.5" stroke="#e8e8e8" stroke-width="1.0"/><path d="M420.7 446.1L427.7 453.1M427.7 446.1L420.7 453.1" stroke="#e8e8e8" stroke-width="1.0"/><path d="M432.5 485.5L439.5 492.5M439.5 485.5L432.5 492.5" stroke="#e8e8e8" stroke-width="1.0"/><path d="M448.3 477.0L455.3 484.0M455.3 477.0L448.3 484.0" stroke="#e8e8e8" stroke-width="1.0"/><path d="M436.5 510.5L443.5 517.5M443.5 510.5L436.5 517.5" stroke="#e8e8e8" stroke-width="1.0"/><path d="M694.2 439.5L701.2 446.5M701.2 439.5L694.2 446.5" stroke="#e8e8e8" stroke-width="1.0"/><path d="M705.5 183.5L712.5 190.5M712.5 183.5L705.5 190.5" stroke="#e8e8e8" stroke-width="1.0"/><path d="M705.5 203.5L712.5 210.5M712.5 203.5L705.5 210.5" stroke="#e8e8e8" stroke-width="1.0"/><path d="M1153.9 377.5L1160.9 384.5M1160.9 377.5L1153.9 384.5" stroke="#e8e8e8" stroke-width="1.0"/><path d="M1096.8 391.0L1103.8 398.0M1103.8 391.0L1096.8 398.0" stroke="#e8e8e8" stroke-width="1.0"/><path d="M1057.0 399.1L1064.0 406.1M1064.0 399.1L1057.0 406.1" stroke="#e8e8e8" stroke-width="1.0"/><path d="M1158.5 413.5L1165.5 420.5M1165.5 413.5L1158.5 420.5" stroke="#e8e8e8" stroke-width="1.0"/><path d="M761.0 40.5L768.0 47.5M768.0 40.5L761.0 47.5" stroke="#e8e8e8" stroke-width="1.0"/><path d="M907.2 75.0L914.8 82.6M914.8 75.0L907.2 82.6" stroke="#f4f4f4" stroke-width="2"/><path d="M938.8 437.5L946.4 445.1M946.4 437.5L938.8 445.1" stroke="#f4f4f4" stroke-width="2"/><path d="M959.2 436.0L966.8 443.6M966.8 436.0L959.2 443.6" stroke="#f4f4f4" stroke-width="2"/><path d="M297.8 495.2L305.4 502.8M305.4 495.2L297.8 502.8" stroke="#f4f4f4" stroke-width="2"/><path d="M261.1 504.2L268.7 511.8M268.7 504.2L261.1 511.8" stroke="#f4f4f4" stroke-width="2"/><path d="M283.1 471.8L290.1 478.8M290.1 471.8L283.1 478.8" stroke="#ff5050" stroke-width="1.4"/><path d="M762.5 39.0L768.5 45.0M768.5 39.0L762.5 45.0" stroke="#e04040" stroke-width="1"/><path d="M1050 31H1066M1058 23V39" stroke="#e8e020" stroke-width="1.3"/><path d="M1095.9 2.6999999999999886H1099.4M1102.4 2.6999999999999886H1105.9M1100.9 -2.3000000000000114V1.1999999999999886M1100.9 4.199999999999989V7.699999999999989" stroke="#22dd22" stroke-width="1"/><path d="M770 413.5H773.5M776.5 413.5H780M775 408.5V412.0M775 415.0V418.5" stroke="#22dd22" stroke-width="1"/><path d="M797 479.4H800.5M803.5 479.4H807M802 474.4V477.9M802 480.9V484.4" stroke="#22dd22" stroke-width="1"/><path d="M996 498.4H999.5M1002.5 498.4H1006M1001 493.4V496.9M1001 499.9V503.4" stroke="#22dd22" stroke-width="1"/><path d="M1001.5 510H1005.0M1008.0 510H1011.5M1006.5 505V508.5M1006.5 511.5V515" stroke="#22dd22" stroke-width="1"/><path d="M491 503.4H494.5M497.5 503.4H501M496 498.4V501.9M496 504.9V508.4" stroke="#22dd22" stroke-width="1"/><path d="M192.5 452H195.0M198.0 452H200.5M196.5 448V450.5M196.5 453.5V456" stroke="#22dd22" stroke-width="1"/><rect x="793.0" y="437.0" width="10" height="10" fill="none" stroke="#22dd22" stroke-width="1.2"/><rect x="804.5" y="454.5" width="10" height="10" fill="none" stroke="#22dd22" stroke-width="1.2"/><rect x="790.0" y="434.0" width="5" height="4" fill="none" stroke="#22dd22" stroke-width="1.2"/><rect x="791.0" y="432.0" width="5" height="4" fill="none" stroke="#22dd22" stroke-width="1.2"/><rect x="1044.0" y="478.8" width="27" height="27" fill="none" stroke="#22dd22" stroke-width="1.2"/><rect x="975.4" y="510.0" width="22" height="20" fill="none" stroke="#22dd22" stroke-width="1.2"/><rect x="1029" y="459" width="3" height="3" fill="#22dd22"/><rect x="695" y="273" width="3" height="3" fill="#22dd22"/><circle cx="832.8" cy="418.8" r="2.4" fill="none" stroke="#d020d0" stroke-width="1.2"/><circle cx="834.3" cy="422.3" r="2.4" fill="none" stroke="#d020d0" stroke-width="1.2"/><circle cx="952.3" cy="411.4" r="3.5" fill="none" stroke="#d020d0" stroke-width="1.2"/><circle cx="799.0" cy="452.0" r="2.6" fill="none" stroke="#d020d0" stroke-width="1.2"/><path d="M788.2957540263543 380.3610541727672L790.0957540263543 382.1610541727672L788.2957540263543 383.9610541727672L786.4957540263543 382.1610541727672Z" fill="#c020c0"/><path d="M766.3338213762811 386.21756954612005L768.133821376281 388.01756954612006L766.3338213762811 389.81756954612007L764.5338213762811 388.01756954612006Z" fill="#c020c0"/><path d="M758.1346998535871 397.0521229868228L759.9346998535871 398.8521229868228L758.1346998535871 400.6521229868228L756.3346998535872 398.8521229868228Z" fill="#c020c0"/><path d="M783.0248901903367 394.1238653001464L784.8248901903366 395.9238653001464L783.0248901903367 397.72386530014643L781.2248901903367 395.9238653001464Z" fill="#c020c0"/><path d="M793.2737920937043 389.7314787701318L795.0737920937042 391.5314787701318L793.2737920937043 393.3314787701318L791.4737920937043 391.5314787701318Z" fill="#c020c0"/><path d="M786.8316251830161 402.3229868228404L788.631625183016 404.1229868228404L786.8316251830161 405.9229868228404L785.0316251830161 404.1229868228404Z" fill="#c020c0"/><path d="M802.6442166910688 402.90863836017564L804.4442166910687 404.70863836017566L802.6442166910688 406.50863836017567L800.8442166910688 404.70863836017566Z" fill="#c020c0"/><path d="M789.4670571010249 394.70951683748166L791.2670571010249 396.50951683748167L789.4670571010249 398.3095168374817L787.667057101025 396.50951683748167Z" fill="#c020c0"/><path d="M831.3411420204978 373.0404099560761L833.1411420204978 374.8404099560761L831.3411420204978 376.6404099560761L829.5411420204979 374.8404099560761Z" fill="#c020c0"/><path d="M841.0043923865301 388.26734992679354L842.80439238653 390.06734992679355L841.0043923865301 391.86734992679357L839.2043923865301 390.06734992679355Z" fill="#c020c0"/><path d="M832.2196193265007 433.06969253294284L834.0196193265007 434.86969253294285L832.2196193265007 436.66969253294286L830.4196193265008 434.86969253294285Z" fill="#c020c0"/><path d="M869.9941434846266 470.2585651537335L871.7941434846266 472.0585651537335L869.9941434846266 473.85856515373354L868.1941434846267 472.0585651537335Z" fill="#c020c0"/><path d="M883.4641288433382 495.1487554904831L885.2641288433382 496.9487554904831L883.4641288433382 498.7487554904831L881.6641288433383 496.9487554904831Z" fill="#c020c0"/><path d="M990.0527086383602 474.65095168374813L991.8527086383601 476.45095168374814L990.0527086383602 478.25095168374816L988.2527086383602 476.45095168374814Z" fill="#c020c0"/><path d="M936.1727672035139 399.98038067349927L937.9727672035139 401.7803806734993L936.1727672035139 403.5803806734993L934.372767203514 401.7803806734993Z" fill="#c020c0"/><path d="M919.1888726207906 465.8661786237189L920.9888726207905 467.6661786237189L919.1888726207906 469.4661786237189L917.3888726207906 467.6661786237189Z" fill="#c020c0"/><path d="M848.9106881405564 387.6816983894583L850.7106881405564 389.4816983894583L848.9106881405564 391.2816983894583L847.1106881405565 389.4816983894583Z" fill="#c020c0"/><path d="M942.614934114202 446.83250366032206L944.414934114202 448.6325036603221L942.614934114202 450.4325036603221L940.8149341142021 448.6325036603221Z" fill="#c020c0"/><path d="M952.8638360175696 444.48989751098094L954.6638360175696 446.28989751098095L952.8638360175696 448.08989751098096L951.0638360175697 446.28989751098095Z" fill="#c020c0"/><path d="M871 53L873 55L871 57L869 55Z" fill="#c020c0"/><path d="M958 19.2L959.8 21L958 22.8L956.2 21Z" fill="#9a30c0"/><path d="M450 466.5L451.5 468L450 469.5L448.5 468Z" fill="#c020c0"/><path d="M580 452.5L581.5 454L580 455.5L578.5 454Z" fill="#c020c0"/><circle cx="928.6" cy="483.0" r="1.9" fill="#9ab" opacity="0.6361392482090671" filter="url(#bl)"/><circle cx="986.0" cy="408.6" r="0.8" fill="#bba" opacity="0.3452823858612577" filter="url(#bl)"/><circle cx="870.9" cy="408.2" r="1.9" fill="#9ab" opacity="0.5295764751712403" filter="url(#bl)"/><circle cx="699.9" cy="403.7" r="1.2" fill="#bba" opacity="0.6665381487234208" filter="url(#bl)"/><circle cx="982.1" cy="395.1" r="0.8" fill="#bba" opacity="0.5471704739852324" filter="url(#bl)"/><circle cx="861.8" cy="391.0" r="0.8" fill="#bba" opacity="0.6094374812110697" filter="url(#bl)"/><circle cx="1055.0" cy="396.0" r="1" fill="#a9a" opacity="0.4254605470939814" filter="url(#bl)"/><circle cx="769.6" cy="503.3" r="1" fill="#bba" opacity="0.6763904004351996" filter="url(#bl)"/><circle cx="954.0" cy="517.0" r="1.5" fill="#a9a" opacity="0.3086280833518205" filter="url(#bl)"/><circle cx="850.6" cy="512.3" r="1.2" fill="#9ab" opacity="0.43274179488825526" filter="url(#bl)"/><circle cx="1001.5" cy="459.5" r="1.9" fill="#8ac" opacity="0.5830704609689022" filter="url(#bl)"/><circle cx="719.8" cy="424.7" r="1.2" fill="#ccd" opacity="0.5785679230564627" filter="url(#bl)"/><circle cx="764.3" cy="442.4" r="1" fill="#9ab" opacity="0.4024727343770848" filter="url(#bl)"/><circle cx="1047.1" cy="514.3" r="1.2" fill="#dda" opacity="0.46171763246675585" filter="url(#bl)"/><circle cx="900.9" cy="434.2" r="1.5" fill="#b99" opacity="0.6364936381849002" filter="url(#bl)"/><circle cx="864.8" cy="477.9" r="1.9" fill="#bba" opacity="0.34760822282951" filter="url(#bl)"/><circle cx="787.3" cy="494.7" r="1.5" fill="#a9a" opacity="0.5049984048449789" filter="url(#bl)"/><circle cx="1029.8" cy="408.9" r="1.5" fill="#9ab" opacity="0.5359053485047759" filter="url(#bl)"/><circle cx="987.9" cy="426.5" r="1.2" fill="#9ab" opacity="0.47319067402422477" filter="url(#bl)"/><circle cx="1061.9" cy="402.5" r="1.9" fill="#b99" opacity="0.4450501946153855" filter="url(#bl)"/><circle cx="750.6" cy="412.6" r="1.9" fill="#9ab" opacity="0.42498014773716275" filter="url(#bl)"/><circle cx="813.8" cy="397.8" r="0.8" fill="#8ac" opacity="0.3595472178492994" filter="url(#bl)"/><circle cx="953.4" cy="521.5" r="1" fill="#8ac" opacity="0.31942086541938247" filter="url(#bl)"/><circle cx="1065.0" cy="451.6" r="1.5" fill="#9ab" opacity="0.3949346415417149" filter="url(#bl)"/><circle cx="917.7" cy="495.8" r="1.5" fill="#8ac" opacity="0.4687029127646357" filter="url(#bl)"/><circle cx="715.9" cy="509.3" r="0.8" fill="#dda" opacity="0.4974256793683328" filter="url(#bl)"/><circle cx="1009.4" cy="390.7" r="1.9" fill="#bba" opacity="0.5521597173705578" filter="url(#bl)"/><circle cx="990.5" cy="387.1" r="1.5" fill="#a9a" opacity="0.3596981378161031" filter="url(#bl)"/><circle cx="1011.8" cy="415.5" r="1.5" fill="#b99" opacity="0.6409010683574972" filter="url(#bl)"/><circle cx="1061.0" cy="439.5" r="1.5" fill="#8ac" opacity="0.5918020079067416" filter="url(#bl)"/><circle cx="874.6" cy="414.9" r="1.5" fill="#bba" opacity="0.34502413981259084" filter="url(#bl)"/><circle cx="1003.3" cy="451.3" r="1" fill="#8ac" opacity="0.6748577997068239" filter="url(#bl)"/><circle cx="1020.4" cy="398.2" r="1.5" fill="#a9a" opacity="0.5060715490043728" filter="url(#bl)"/><circle cx="900.5" cy="446.9" r="0.8" fill="#dda" opacity="0.618060713335568" filter="url(#bl)"/><circle cx="828.4" cy="459.7" r="0.8" fill="#dda" opacity="0.42227963317463324" filter="url(#bl)"/><circle cx="904.7" cy="471.9" r="1.5" fill="#a9a" opacity="0.6078989892630475" filter="url(#bl)"/><circle cx="954.1" cy="415.4" r="1.2" fill="#8ac" opacity="0.3714597570319796" filter="url(#bl)"/><circle cx="1014.4" cy="442.6" r="1.2" fill="#a9a" opacity="0.5686571695616397" filter="url(#bl)"/><circle cx="868.6" cy="494.3" r="1.2" fill="#a9a" opacity="0.4095502604367228" filter="url(#bl)"/><circle cx="824.6" cy="512.6" r="1.5" fill="#a9a" opacity="0.6689332927551257" filter="url(#bl)"/><circle cx="759.7" cy="501.9" r="1.5" fill="#a9a" opacity="0.6826065907905675" filter="url(#bl)"/><circle cx="889.3" cy="450.9" r="1" fill="#bba" opacity="0.6346481125415233" filter="url(#bl)"/><circle cx="1046.5" cy="443.1" r="0.8" fill="#8ac" opacity="0.5683433196853203" filter="url(#bl)"/><circle cx="851.2" cy="464.1" r="1.9" fill="#b99" opacity="0.5662224916709395" filter="url(#bl)"/><circle cx="852.8" cy="465.2" r="1.2" fill="#8ac" opacity="0.6984067262042224" filter="url(#bl)"/><circle cx="768.3" cy="459.6" r="1.9" fill="#8ac" opacity="0.3722970998854582" filter="url(#bl)"/><circle cx="979.6" cy="398.3" r="0.8" fill="#ccd" opacity="0.6919039822406845" filter="url(#bl)"/><circle cx="757.2" cy="505.7" r="0.8" fill="#a9a" opacity="0.6871922051356649" filter="url(#bl)"/><circle cx="876.0" cy="453.8" r="1.5" fill="#ccd" opacity="0.44043993467181575" filter="url(#bl)"/><circle cx="943.4" cy="381.9" r="1" fill="#bba" opacity="0.5872060921883056" filter="url(#bl)"/><circle cx="835.3" cy="423.9" r="1.2" fill="#dda" opacity="0.4640169258904494" filter="url(#bl)"/><circle cx="738.2" cy="496.5" r="1.2" fill="#9ab" opacity="0.5199731725858572" filter="url(#bl)"/><circle cx="808.0" cy="415.6" r="1.9" fill="#a9a" opacity="0.6804411637213713" filter="url(#bl)"/><circle cx="804.9" cy="424.1" r="1" fill="#ccd" opacity="0.46369711700972865" filter="url(#bl)"/><circle cx="906.5" cy="452.3" r="1.5" fill="#bba" opacity="0.3627101796744395" filter="url(#bl)"/><circle cx="838.5" cy="443.0" r="1" fill="#bba" opacity="0.5434439572418666" filter="url(#bl)"/><circle cx="826.7" cy="505.9" r="0.8" fill="#ccd" opacity="0.3431673357666795" filter="url(#bl)"/><circle cx="907.2" cy="463.9" r="1" fill="#a9a" opacity="0.5517825182571998" filter="url(#bl)"/><circle cx="1029.2" cy="427.8" r="1.5" fill="#bba" opacity="0.4973640808209615" filter="url(#bl)"/><circle cx="874.8" cy="478.0" r="1.5" fill="#dda" opacity="0.6654989068479161" filter="url(#bl)"/><circle cx="918.4" cy="410.2" r="1.2" fill="#ccd" opacity="0.400427312897121" filter="url(#bl)"/><circle cx="702.4" cy="513.7" r="1.2" fill="#ccd" opacity="0.671817816157336" filter="url(#bl)"/><circle cx="748.7" cy="374.6" r="1.9" fill="#ccd" opacity="0.39820012239546504" filter="url(#bl)"/><circle cx="710.0" cy="391.6" r="1.5" fill="#9ab" opacity="0.49211863736082506" filter="url(#bl)"/><circle cx="905.1" cy="407.8" r="1.5" fill="#dda" opacity="0.31470517589348607" filter="url(#bl)"/><circle cx="878.8" cy="498.4" r="1.2" fill="#a9a" opacity="0.49690558495532744" filter="url(#bl)"/><circle cx="1067.2" cy="449.3" r="1.9" fill="#8ac" opacity="0.6580011103098958" filter="url(#bl)"/><circle cx="701.1" cy="390.0" r="1.2" fill="#b99" opacity="0.5832109193090249" filter="url(#bl)"/><circle cx="925.1" cy="481.4" r="0.8" fill="#ccd" opacity="0.4399058978588562" filter="url(#bl)"/><circle cx="950.7" cy="493.7" r="1" fill="#9ab" opacity="0.30113445893652124" filter="url(#bl)"/><circle cx="902.5" cy="474.5" r="0.8" fill="#8ac" opacity="0.5182369148468354" filter="url(#bl)"/><circle cx="700.5" cy="488.5" r="1.5" fill="#b99" opacity="0.5302567144901076" filter="url(#bl)"/><circle cx="960.6" cy="466.5" r="1.5" fill="#dda" opacity="0.6646861250436318" filter="url(#bl)"/><circle cx="839.6" cy="430.2" r="1" fill="#a9a" opacity="0.4860338653028712" filter="url(#bl)"/><circle cx="979.3" cy="416.9" r="0.8" fill="#8ac" opacity="0.6115990890050533" filter="url(#bl)"/><circle cx="913.3" cy="468.9" r="1.5" fill="#a9a" opacity="0.35707367111876426" filter="url(#bl)"/><circle cx="874.4" cy="453.9" r="1.5" fill="#a9a" opacity="0.515177906017088" filter="url(#bl)"/><circle cx="854.6" cy="452.8" r="0.8" fill="#9ab" opacity="0.5930537081659414" filter="url(#bl)"/><circle cx="795.2" cy="383.9" r="0.8" fill="#8ac" opacity="0.6768664629028837" filter="url(#bl)"/><circle cx="819.9" cy="435.8" r="0.8" fill="#ccd" opacity="0.5804992600878808" filter="url(#bl)"/><circle cx="713.3" cy="498.2" r="1" fill="#b99" opacity="0.5582949692736547" filter="url(#bl)"/><circle cx="1052.1" cy="478.6" r="1" fill="#a9a" opacity="0.5823095676839287" filter="url(#bl)"/><circle cx="859.2" cy="398.6" r="1" fill="#ccd" opacity="0.6208221619164345" filter="url(#bl)"/><circle cx="720.2" cy="403.2" r="1.9" fill="#9ab" opacity="0.564084680018422" filter="url(#bl)"/><circle cx="974.6" cy="413.3" r="1.9" fill="#b99" opacity="0.3473416290948916" filter="url(#bl)"/><circle cx="844.4" cy="465.2" r="0.8" fill="#ccd" opacity="0.33657510970404625" filter="url(#bl)"/><circle cx="952.1" cy="444.9" r="1.2" fill="#8ac" opacity="0.4496792820536936" filter="url(#bl)"/><circle cx="715.9" cy="476.3" r="1" fill="#b99" opacity="0.5525383731065605" filter="url(#bl)"/><circle cx="884.7" cy="508.5" r="1.9" fill="#b99" opacity="0.5483511305468994" filter="url(#bl)"/><circle cx="793.7" cy="454.3" r="1.2" fill="#dda" opacity="0.6002314456803864" filter="url(#bl)"/><circle cx="905.4" cy="14.0" r="1" fill="#dda" opacity="0.4484856499831027" filter="url(#bl)"/><circle cx="994.9" cy="18.1" r="0.8" fill="#8ac" opacity="0.4366416993297438" filter="url(#bl)"/><circle cx="928.3" cy="5.2" r="0.8" fill="#b99" opacity="0.5375897033616939" filter="url(#bl)"/><circle cx="792.1" cy="80.9" r="1.5" fill="#a9a" opacity="0.3430295401706206" filter="url(#bl)"/><circle cx="911.0" cy="50.8" r="1.5" fill="#9ab" opacity="0.6392972831451924" filter="url(#bl)"/><circle cx="1079.5" cy="40.6" r="1" fill="#8ac" opacity="0.3464311095588717" filter="url(#bl)"/><circle cx="1090.9" cy="61.9" r="1" fill="#bba" opacity="0.5805958259844703" filter="url(#bl)"/><circle cx="848.0" cy="77.2" r="1.2" fill="#a9a" opacity="0.6722160029821317" filter="url(#bl)"/><circle cx="982.1" cy="73.6" r="1.5" fill="#bba" opacity="0.5890890086624041" filter="url(#bl)"/><circle cx="840.8" cy="28.6" r="1.5" fill="#dda" opacity="0.4448873803540802" filter="url(#bl)"/><circle cx="709.8" cy="91.4" r="1" fill="#8ac" opacity="0.3722143006190952" filter="url(#bl)"/><circle cx="720.8" cy="5.3" r="1" fill="#bba" opacity="0.3782393456681165" filter="url(#bl)"/><circle cx="894.4" cy="86.3" r="1.2" fill="#9ab" opacity="0.4707950725262956" filter="url(#bl)"/><circle cx="817.3" cy="86.1" r="1.5" fill="#a9a" opacity="0.4862293972429572" filter="url(#bl)"/><circle cx="735.6" cy="15.9" r="1" fill="#9ab" opacity="0.4498536374243116" filter="url(#bl)"/><circle cx="852.0" cy="81.2" r="1" fill="#b99" opacity="0.4016268405623341" filter="url(#bl)"/><circle cx="807.9" cy="16.5" r="1.2" fill="#8ac" opacity="0.3940671176706345" filter="url(#bl)"/><circle cx="891.2" cy="4.9" r="1.2" fill="#a9a" opacity="0.6751768203344751" filter="url(#bl)"/><circle cx="974.9" cy="62.6" r="1.5" fill="#dda" opacity="0.6781617497085612" filter="url(#bl)"/><circle cx="743.0" cy="62.2" r="1.2" fill="#ccd" opacity="0.5697861648796468" filter="url(#bl)"/><circle cx="991.8" cy="16.7" r="1" fill="#8ac" opacity="0.30997212998485585" filter="url(#bl)"/><circle cx="788.8" cy="9.0" r="1.5" fill="#8ac" opacity="0.44570124352134743" filter="url(#bl)"/><circle cx="821.9" cy="44.1" r="1.2" fill="#9ab" opacity="0.5929390817690492" filter="url(#bl)"/><circle cx="987.2" cy="16.7" r="1" fill="#bba" opacity="0.5688745534681348" filter="url(#bl)"/><circle cx="1077.8" cy="60.1" r="1.5" fill="#8ac" opacity="0.6901726671180464" filter="url(#bl)"/><circle cx="697.6" cy="7.5" r="1.5" fill="#bba" opacity="0.3179793299235989" filter="url(#bl)"/><circle cx="918.2" cy="91.1" r="1.2" fill="#9ab" opacity="0.5866144093013357" filter="url(#bl)"/><circle cx="791.5" cy="74.3" r="0.8" fill="#ccd" opacity="0.321504594930383" filter="url(#bl)"/><circle cx="794.1" cy="6.5" r="1.5" fill="#dda" opacity="0.32405549898118097" filter="url(#bl)"/><circle cx="799.0" cy="38.7" r="1.2" fill="#8ac" opacity="0.3205364819618593" filter="url(#bl)"/><circle cx="710.3" cy="89.4" r="1" fill="#8ac" opacity="0.503451671125155" filter="url(#bl)"/><circle cx="858.8" cy="49.8" r="0.8" fill="#a9a" opacity="0.6163196328520191" filter="url(#bl)"/><circle cx="730.3" cy="90.7" r="1" fill="#b99" opacity="0.33014846699466355" filter="url(#bl)"/><circle cx="992.2" cy="58.2" r="1.5" fill="#b99" opacity="0.44304556693595654" filter="url(#bl)"/><circle cx="867.2" cy="71.1" r="1" fill="#8ac" opacity="0.30494127545654376" filter="url(#bl)"/><circle cx="1002.8" cy="64.0" r="1" fill="#b99" opacity="0.34627472799633896" filter="url(#bl)"/><circle cx="821.9" cy="9.9" r="1.2" fill="#dda" opacity="0.46103902850412126" filter="url(#bl)"/><circle cx="749.0" cy="50.3" r="1.5" fill="#bba" opacity="0.578869590414538" filter="url(#bl)"/><circle cx="1020.1" cy="89.1" r="1" fill="#a9a" opacity="0.32457693366009077" filter="url(#bl)"/><circle cx="980.1" cy="6.3" r="1" fill="#dda" opacity="0.41440732444125317" filter="url(#bl)"/><circle cx="410.2" cy="452.4" r="1.5" fill="#dda" opacity="0.42557179146964663" filter="url(#bl)"/><circle cx="580.5" cy="486.7" r="1.2" fill="#8ac" opacity="0.676127602933999" filter="url(#bl)"/><circle cx="301.2" cy="447.1" r="1" fill="#dda" opacity="0.575030349658306" filter="url(#bl)"/><circle cx="593.6" cy="446.4" r="0.8" fill="#8ac" opacity="0.4710381247630562" filter="url(#bl)"/><circle cx="289.9" cy="505.4" r="1" fill="#a9a" opacity="0.32637155147327374" filter="url(#bl)"/><circle cx="318.2" cy="464.7" r="1.2" fill="#a9a" opacity="0.31361429114199707" filter="url(#bl)"/><circle cx="486.1" cy="500.4" r="0.8" fill="#9ab" opacity="0.3486649008114056" filter="url(#bl)"/><circle cx="678.3" cy="507.0" r="1.5" fill="#dda" opacity="0.4032672165310971" filter="url(#bl)"/><circle cx="670.2" cy="446.2" r="1.5" fill="#bba" opacity="0.44496449590082476" filter="url(#bl)"/><circle cx="390.7" cy="445.9" r="1" fill="#8ac" opacity="0.6931746634700805" filter="url(#bl)"/><circle cx="362.7" cy="490.4" r="1" fill="#ccd" opacity="0.6058734504536913" filter="url(#bl)"/><circle cx="437.6" cy="477.2" r="1.2" fill="#a9a" opacity="0.4783320096581923" filter="url(#bl)"/><circle cx="344.7" cy="489.7" r="1" fill="#ccd" opacity="0.31937173237651867" filter="url(#bl)"/><circle cx="542.6" cy="457.0" r="1.5" fill="#ccd" opacity="0.5384062022018874" filter="url(#bl)"/><circle cx="288.6" cy="506.1" r="1.5" fill="#8ac" opacity="0.3209245151506582" filter="url(#bl)"/><circle cx="682.1" cy="447.5" r="1" fill="#ccd" opacity="0.5820227142625725" filter="url(#bl)"/><circle cx="401.4" cy="479.8" r="1" fill="#a9a" opacity="0.6286827898059977" filter="url(#bl)"/><circle cx="378.5" cy="483.7" r="1" fill="#a9a" opacity="0.4407083565260199" filter="url(#bl)"/><circle cx="353.7" cy="518.7" r="0.8" fill="#b99" opacity="0.4977506053473275" filter="url(#bl)"/><circle cx="399.1" cy="455.7" r="1" fill="#ccd" opacity="0.4526291669539928" filter="url(#bl)"/><circle cx="284.2" cy="474.8" r="1.2" fill="#bba" opacity="0.6185888820798301" filter="url(#bl)"/><circle cx="581.8" cy="480.8" r="1.5" fill="#dda" opacity="0.5135061431619625" filter="url(#bl)"/><circle cx="283.0" cy="459.9" r="0.8" fill="#9ab" opacity="0.504697497502959" filter="url(#bl)"/><circle cx="506.0" cy="458.9" r="1.5" fill="#9ab" opacity="0.42689771556237166" filter="url(#bl)"/><circle cx="254.2" cy="468.4" r="1.5" fill="#b99" opacity="0.4904410169889182" filter="url(#bl)"/><circle cx="558.5" cy="474.9" r="0.8" fill="#b99" opacity="0.35865018009746613" filter="url(#bl)"/><circle cx="429.5" cy="516.9" r="0.8" fill="#8ac" opacity="0.6079842732018477" filter="url(#bl)"/><circle cx="335.1" cy="466.5" r="0.8" fill="#9ab" opacity="0.6094948123570295" filter="url(#bl)"/><circle cx="516.8" cy="509.7" r="1.5" fill="#a9a" opacity="0.6874500719582727" filter="url(#bl)"/><circle cx="248.5" cy="514.7" r="1" fill="#9ab" opacity="0.3151167415183588" filter="url(#bl)"/><circle cx="281.7" cy="517.1" r="1.2" fill="#a9a" opacity="0.5750699275767266" filter="url(#bl)"/><circle cx="619.2" cy="500.4" r="1" fill="#ccd" opacity="0.506676215207394" filter="url(#bl)"/><circle cx="645.3" cy="462.9" r="1.5" fill="#ccd" opacity="0.6876268416731359" filter="url(#bl)"/><circle cx="544.0" cy="473.3" r="1" fill="#8ac" opacity="0.5454119244855908" filter="url(#bl)"/><circle cx="416.0" cy="453.2" r="1.2" fill="#bba" opacity="0.6547075602414048" filter="url(#bl)"/><circle cx="337.7" cy="467.9" r="1.2" fill="#dda" opacity="0.5488695534406223" filter="url(#bl)"/><circle cx="645.8" cy="457.6" r="1.5" fill="#dda" opacity="0.37417493231489873" filter="url(#bl)"/><circle cx="537.1" cy="487.7" r="1.5" fill="#ccd" opacity="0.3923050177854082" filter="url(#bl)"/><circle cx="459.5" cy="489.7" r="1" fill="#a9a" opacity="0.4673096754573245" filter="url(#bl)"/><circle cx="280.0" cy="511.7" r="1.2" fill="#bba" opacity="0.46872605988525995" filter="url(#bl)"/><circle cx="309.1" cy="467.2" r="1" fill="#ccd" opacity="0.37611325480358704" filter="url(#bl)"/><circle cx="509.5" cy="493.5" r="1.2" fill="#8ac" opacity="0.3304831953686241" filter="url(#bl)"/><circle cx="670.5" cy="455.3" r="0.8" fill="#a9a" opacity="0.37574447944860934" filter="url(#bl)"/><circle cx="452.6" cy="473.8" r="1" fill="#8ac" opacity="0.546114676716087" filter="url(#bl)"/><circle cx="601.0" cy="508.0" r="0.8" fill="#bba" opacity="0.5689420704741661" filter="url(#bl)"/><circle cx="897" cy="483" r="3" fill="#d8dc98" opacity=".9" filter="url(#bl2)"/><circle cx="832.6" cy="26.5" r="1.9" fill="#e0a090" opacity="0.85" filter="url(#bl)"/><circle cx="788.6" cy="19.0" r="1.9" fill="#e8c0c0" opacity="0.85" filter="url(#bl)"/><circle cx="231.0" cy="482.0" r="2.5" fill="#9bd" opacity="0.9" filter="url(#bl)"/><circle cx="335.0" cy="516.0" r="2.5" fill="#9bd" opacity="0.8" filter="url(#bl)"/><circle cx="963.0" cy="519.0" r="2.5" fill="#aab0f0" opacity="0.8" filter="url(#bl)"/><circle cx="1023.0" cy="488.0" r="2.5" fill="#c0c0f0" opacity="0.8" filter="url(#bl)"/><circle cx="811.0" cy="496.0" r="2.2" fill="#a0a0f0" opacity="0.8" filter="url(#bl)"/><circle cx="1070.0" cy="484.0" r="3" fill="#60d0d0" opacity="0.8" filter="url(#bl)"/><text x="797" y="37" font-size="10" fill="#858585" font-family="Liberation Sans" textLength="75">BSC8650=MATAR</text><text x="772" y="61" font-size="10" fill="#8c8c8c" font-family="Liberation Sans" textLength="40">NGC7331</text><text x="550" y="485" font-size="9" fill="#a8a8e8" font-family="Liberation Sans" textLength="34">Pôle Nord</text><rect x="703" y="288" width="9" height="11" fill="#000"/><text x="704" y="297" font-size="10" font-weight="bold" fill="#ddd" font-family="Liberation Sans">N</text><path d="M695.0 280.0L704.0 292.0" stroke="#c040c0" stroke-width="1" fill="none" /></svg>
<div class="a" style="left:78px;top:125px;width:625px;height:466px;border-radius:7px 7px 6px 6px;background:linear-gradient(90deg,#6279bd 0,#3f5198 3px,#33458c 6px,#33458c 619px,#3f5198 622px,#5a70b4 625px);box-shadow:0 0 0 1px rgba(10,16,50,.55)"></div>
<div class="a" style="left:79px;top:126px;width:623px;height:26px;border-radius:6px 6px 0 0;background:linear-gradient(#52629c 0%,#38457f 14%,#222d65 38%,#232f67 58%,#33437f 78%,#485a9c 100%)"></div>
<div class="a" style="left:600px;top:126px;width:102px;height:26px;border-radius:0 6px 0 0;background:linear-gradient(90deg,rgba(80,98,165,0),rgba(80,98,165,.55) 45%,rgba(84,104,172,.9))"></div>
<svg style="left:82px;top:129px" width="617" height="22" viewBox="0 0 617 22"><path d="M147.9 8.8L148.5 11.2L150.9 11.8L148.5 12.4L147.9 14.8L147.3 12.4L144.9 11.8L147.3 11.2Z" fill="#7f90d0" opacity="0.29"/><path d="M292.6 8.5L293.2 11.9L296.6 12.5L293.2 13.1L292.6 16.5L292.0 13.1L288.6 12.5L292.0 11.9Z" fill="#7f90d0" opacity="0.15"/><path d="M515.4 4.2L516.0 6.1L517.9 6.7L516.0 7.3L515.4 9.2L514.8 7.3L512.9 6.7L514.8 6.1Z" fill="#7f90d0" opacity="0.18"/><path d="M441.6 7.7L442.2 11.1L445.6 11.7L442.2 12.3L441.6 15.7L441.0 12.3L437.6 11.7L441.0 11.1Z" fill="#7f90d0" opacity="0.22"/><path d="M393.7 2.2L394.3 4.1L396.2 4.7L394.3 5.3L393.7 7.2L393.1 5.3L391.2 4.7L393.1 4.1Z" fill="#7f90d0" opacity="0.28"/><path d="M322.7 13.3L323.3 14.7L324.7 15.3L323.3 15.9L322.7 17.3L322.1 15.9L320.7 15.3L322.1 14.7Z" fill="#7f90d0" opacity="0.17"/><path d="M588.9 0.8L589.5 2.2L590.9 2.8L589.5 3.4L588.9 4.8L588.3 3.4L586.9 2.8L588.3 2.2Z" fill="#7f90d0" opacity="0.27"/><path d="M167.2 9.2L167.8 12.1L170.7 12.7L167.8 13.3L167.2 16.2L166.6 13.3L163.7 12.7L166.6 12.1Z" fill="#7f90d0" opacity="0.26"/><path d="M566.6 5.1L567.2 8.5L570.6 9.1L567.2 9.7L566.6 13.1L566.0 9.7L562.6 9.1L566.0 8.5Z" fill="#7f90d0" opacity="0.22"/><path d="M575.5 15.8L576.1 17.2L577.5 17.8L576.1 18.4L575.5 19.8L574.9 18.4L573.5 17.8L574.9 17.2Z" fill="#7f90d0" opacity="0.16"/><path d="M305.4 3.1L306.0 6.0L308.9 6.6L306.0 7.2L305.4 10.1L304.8 7.2L301.9 6.6L304.8 6.0Z" fill="#7f90d0" opacity="0.27"/><path d="M526.3 6.1L526.9 9.0L529.8 9.6L526.9 10.2L526.3 13.1L525.7 10.2L522.8 9.6L525.7 9.0Z" fill="#7f90d0" opacity="0.24"/><path d="M329.4 6.8L330.0 8.7L331.9 9.3L330.0 9.9L329.4 11.8L328.8 9.9L326.9 9.3L328.8 8.7Z" fill="#7f90d0" opacity="0.29"/><path d="M420.1 15.7L420.7 18.1L423.1 18.7L420.7 19.3L420.1 21.7L419.5 19.3L417.1 18.7L419.5 18.1Z" fill="#7f90d0" opacity="0.30"/><path d="M413.5 1.9L414.1 4.3L416.5 4.9L414.1 5.5L413.5 7.9L412.9 5.5L410.5 4.9L412.9 4.3Z" fill="#7f90d0" opacity="0.29"/><path d="M556.6 9.7L557.2 11.6L559.1 12.2L557.2 12.8L556.6 14.7L556.0 12.8L554.1 12.2L556.0 11.6Z" fill="#7f90d0" opacity="0.24"/><path d="M607.7 4.8L608.3 6.2L609.7 6.8L608.3 7.4L607.7 8.8L607.1 7.4L605.7 6.8L607.1 6.2Z" fill="#7f90d0" opacity="0.16"/><path d="M525.5 17.8L526.1 19.2L527.5 19.8L526.1 20.4L525.5 21.8L524.9 20.4L523.5 19.8L524.9 19.2Z" fill="#7f90d0" opacity="0.20"/><path d="M42.8 16.1L43.4 17.5L44.8 18.1L43.4 18.7L42.8 20.1L42.2 18.7L40.8 18.1L42.2 17.5Z" fill="#7f90d0" opacity="0.19"/><path d="M473.3 15.7L473.9 17.1L475.3 17.7L473.9 18.3L473.3 19.7L472.7 18.3L471.3 17.7L472.7 17.1Z" fill="#7f90d0" opacity="0.24"/><path d="M468.9 4.8L469.5 8.2L472.9 8.8L469.5 9.4L468.9 12.8L468.3 9.4L464.9 8.8L468.3 8.2Z" fill="#7f90d0" opacity="0.20"/><path d="M542.0 15.7L542.6 19.1L546.0 19.7L542.6 20.3L542.0 23.7L541.4 20.3L538.0 19.7L541.4 19.1Z" fill="#7f90d0" opacity="0.19"/><path d="M24.1 0.1L24.7 1.5L26.1 2.1L24.7 2.7L24.1 4.1L23.5 2.7L22.1 2.1L23.5 1.5Z" fill="#7f90d0" opacity="0.24"/><path d="M21.2 2.1L21.8 5.0L24.7 5.6L21.8 6.2L21.2 9.1L20.6 6.2L17.7 5.6L20.6 5.0Z" fill="#7f90d0" opacity="0.19"/><path d="M163.4 11.4L164.0 13.8L166.4 14.4L164.0 15.0L163.4 17.4L162.8 15.0L160.4 14.4L162.8 13.8Z" fill="#7f90d0" opacity="0.20"/><path d="M589.7 14.6L590.3 17.5L593.2 18.1L590.3 18.7L589.7 21.6L589.1 18.7L586.2 18.1L589.1 17.5Z" fill="#7f90d0" opacity="0.21"/><path d="M535.2 5.0L535.8 8.4L539.2 9.0L535.8 9.6L535.2 13.0L534.6 9.6L531.2 9.0L534.6 8.4Z" fill="#7f90d0" opacity="0.25"/><path d="M64.9 15.5L65.5 18.9L68.9 19.5L65.5 20.1L64.9 23.5L64.3 20.1L60.9 19.5L64.3 18.9Z" fill="#7f90d0" opacity="0.19"/><path d="M390.8 11.9L391.4 14.3L393.8 14.9L391.4 15.5L390.8 17.9L390.2 15.5L387.8 14.9L390.2 14.3Z" fill="#7f90d0" opacity="0.22"/><path d="M160.3 4.5L160.9 6.9L163.3 7.5L160.9 8.1L160.3 10.5L159.7 8.1L157.3 7.5L159.7 6.9Z" fill="#7f90d0" opacity="0.15"/><path d="M256.5 10.4L257.1 11.8L258.5 12.4L257.1 13.0L256.5 14.4L255.9 13.0L254.5 12.4L255.9 11.8Z" fill="#7f90d0" opacity="0.21"/><path d="M363.2 1.4L363.8 3.8L366.2 4.4L363.8 5.0L363.2 7.4L362.6 5.0L360.2 4.4L362.6 3.8Z" fill="#7f90d0" opacity="0.22"/><path d="M418.4 5.3L419.0 7.7L421.4 8.3L419.0 8.9L418.4 11.3L417.8 8.9L415.4 8.3L417.8 7.7Z" fill="#7f90d0" opacity="0.26"/><path d="M15.6 1.1L16.2 2.5L17.6 3.1L16.2 3.7L15.6 5.1L15.0 3.7L13.6 3.1L15.0 2.5Z" fill="#7f90d0" opacity="0.29"/><path d="M155.9 6.2L156.5 9.6L159.9 10.2L156.5 10.8L155.9 14.2L155.3 10.8L151.9 10.2L155.3 9.6Z" fill="#7f90d0" opacity="0.24"/><path d="M110.8 2.3L111.4 4.7L113.8 5.3L111.4 5.9L110.8 8.3L110.2 5.9L107.8 5.3L110.2 4.7Z" fill="#7f90d0" opacity="0.28"/><path d="M163.9 14.2L164.5 15.6L165.9 16.2L164.5 16.8L163.9 18.2L163.3 16.8L161.9 16.2L163.3 15.6Z" fill="#7f90d0" opacity="0.27"/><path d="M18.5 9.7L19.1 11.6L21.0 12.2L19.1 12.8L18.5 14.7L17.9 12.8L16.0 12.2L17.9 11.6Z" fill="#7f90d0" opacity="0.20"/><path d="M138.4 14.0L139.0 15.9L140.9 16.5L139.0 17.1L138.4 19.0L137.8 17.1L135.9 16.5L137.8 15.9Z" fill="#7f90d0" opacity="0.20"/><path d="M417.7 11.7L418.3 13.1L419.7 13.7L418.3 14.3L417.7 15.7L417.1 14.3L415.7 13.7L417.1 13.1Z" fill="#7f90d0" opacity="0.17"/><path d="M199.4 5.5L200.0 7.4L201.9 8.0L200.0 8.6L199.4 10.5L198.8 8.6L196.9 8.0L198.8 7.4Z" fill="#7f90d0" opacity="0.22"/><path d="M526.4 2.0L527.0 4.4L529.4 5.0L527.0 5.6L526.4 8.0L525.8 5.6L523.4 5.0L525.8 4.4Z" fill="#7f90d0" opacity="0.26"/><path d="M135.6 9.2L136.2 11.6L138.6 12.2L136.2 12.8L135.6 15.2L135.0 12.8L132.6 12.2L135.0 11.6Z" fill="#7f90d0" opacity="0.18"/><path d="M76.1 9.0L76.7 10.9L78.6 11.5L76.7 12.1L76.1 14.0L75.5 12.1L73.6 11.5L75.5 10.9Z" fill="#7f90d0" opacity="0.20"/><path d="M514.6 9.3L515.2 11.7L517.6 12.3L515.2 12.9L514.6 15.3L514.0 12.9L511.6 12.3L514.0 11.7Z" fill="#7f90d0" opacity="0.20"/><path d="M509.5 -0.5L510.1 2.9L513.5 3.5L510.1 4.1L509.5 7.5L508.9 4.1L505.5 3.5L508.9 2.9Z" fill="#7f90d0" opacity="0.20"/><path d="M81.5 4.3L82.1 6.7L84.5 7.3L82.1 7.9L81.5 10.3L80.9 7.9L78.5 7.3L80.9 6.7Z" fill="#7f90d0" opacity="0.22"/><path d="M390.8 3.2L391.4 6.6L394.8 7.2L391.4 7.8L390.8 11.2L390.2 7.8L386.8 7.2L390.2 6.6Z" fill="#7f90d0" opacity="0.21"/><path d="M566.3 2.8L566.9 4.2L568.3 4.8L566.9 5.4L566.3 6.8L565.7 5.4L564.3 4.8L565.7 4.2Z" fill="#7f90d0" opacity="0.22"/><path d="M512.3 9.2L512.9 12.6L516.3 13.2L512.9 13.8L512.3 17.2L511.7 13.8L508.3 13.2L511.7 12.6Z" fill="#7f90d0" opacity="0.22"/><path d="M584.4 16.2L585.0 18.1L586.9 18.7L585.0 19.3L584.4 21.2L583.8 19.3L581.9 18.7L583.8 18.1Z" fill="#7f90d0" opacity="0.15"/><path d="M281.9 11.6L282.5 15.0L285.9 15.6L282.5 16.2L281.9 19.6L281.3 16.2L277.9 15.6L281.3 15.0Z" fill="#7f90d0" opacity="0.29"/><path d="M335.4 16.0L336.0 17.4L337.4 18.0L336.0 18.6L335.4 20.0L334.8 18.6L333.4 18.0L334.8 17.4Z" fill="#7f90d0" opacity="0.28"/><path d="M597.2 1.7L597.8 3.6L599.7 4.2L597.8 4.8L597.2 6.7L596.6 4.8L594.7 4.2L596.6 3.6Z" fill="#7f90d0" opacity="0.16"/><path d="M555.9 12.0L556.5 13.9L558.4 14.5L556.5 15.1L555.9 17.0L555.3 15.1L553.4 14.5L555.3 13.9Z" fill="#7f90d0" opacity="0.28"/><path d="M553.5 10.4L554.1 11.8L555.5 12.4L554.1 13.0L553.5 14.4L552.9 13.0L551.5 12.4L552.9 11.8Z" fill="#7f90d0" opacity="0.22"/><path d="M76.1 8.6L76.7 10.5L78.6 11.1L76.7 11.7L76.1 13.6L75.5 11.7L73.6 11.1L75.5 10.5Z" fill="#7f90d0" opacity="0.25"/><path d="M323.8 5.4L324.4 8.8L327.8 9.4L324.4 10.0L323.8 13.4L323.2 10.0L319.8 9.4L323.2 8.8Z" fill="#7f90d0" opacity="0.17"/><path d="M78.9 15.5L79.5 18.9L82.9 19.5L79.5 20.1L78.9 23.5L78.3 20.1L74.9 19.5L78.3 18.9Z" fill="#7f90d0" opacity="0.22"/><path d="M481.6 5.8L482.2 7.7L484.1 8.3L482.2 8.9L481.6 10.8L481.0 8.9L479.1 8.3L481.0 7.7Z" fill="#7f90d0" opacity="0.17"/></svg>
<svg style="left:85.5px;top:132px" width="15.3" height="12.8" viewBox="0 0 18 15"><defs><linearGradient id="pl" x1="0" y1="1" x2="0" y2="0"><stop offset="0" stop-color="#1f8f7a"/><stop offset=".3" stop-color="#2fc03a"/><stop offset=".62" stop-color="#e8d828"/><stop offset="1" stop-color="#d82a22"/></linearGradient></defs><path d="M2.2 12.6 L9 2.6 L15.8 12.6" fill="none" stroke="#141c4a" stroke-width="4.2" stroke-linejoin="round" stroke-linecap="round"/><path d="M2.2 13 L15.8 13" stroke="#141c4a" stroke-width="3.6" stroke-linecap="round"/><path d="M2.4 12.4 L9 2.8 L15.6 12.4" fill="none" stroke="url(#pl)" stroke-width="2.4" stroke-linejoin="round" stroke-linecap="round"/><path d="M2.2 13 L15.8 13" stroke="#1b2a86" stroke-width="2.2" stroke-linecap="round"/></svg>
<span class="t" style="left:184px;top:132.0px;font-size:12px;line-height:16px;color:#fff;font-weight:bold;letter-spacing:0.245px;text-shadow:0 0 2px #000,0 1px 1px #000;">Flats-7 | 5202x3465 - Monochrome - Réels(32bits)&nbsp; [Zoom = 1/8]</span>
<div class="wb" style="left:641px;top:133px;width:20px;height:13px;background:linear-gradient(#d4d83a,#8f9410);border-color:rgba(16,20,60,.85);box-shadow:0 0 0 1px rgba(130,150,210,.25);"><svg width="18" height="11" viewBox="0 0 18 11" style="left:0;top:0"><rect x="5.0" y="6.5" width="8" height="2" fill="#fff" opacity="0.9"/></svg></div>
<div class="wb" style="left:669px;top:133px;width:20px;height:13px;background:linear-gradient(#d23a34,#7a0f0c);border-color:rgba(16,20,60,.85);box-shadow:0 0 0 1px rgba(130,150,210,.25);"><svg width="18" height="11" viewBox="0 0 18 11" style="left:0;top:0"><path d="M5.5 2.0L12.5 9.0M12.5 2.0L5.5 9.0" stroke="#fff" stroke-width="1.6" opacity="0.95"/></svg></div>
<div class="a" style="left:85px;top:152px;width:611px;height:433px;background:#e6e7ec;border:1px solid #f8f8fc"></div>
<div class="a" style="left:86px;top:154px;width:609px;height:405px;background:radial-gradient(circle at 50% 50%,#fff 0,#fbfbfb 100px,#ececec 160px,#d6d6d6 205px,#bcbcbc 250px,#9c9c9c 300px,#808080 335px,#626262 365px,#4a4a4a 400px)"><svg width="609" height="406" style="left:0;top:0"><defs><pattern id="dg" width="7" height="7" patternUnits="userSpaceOnUse"><rect x="1" y="1" width="2" height="2"/><rect x="5" y="1" width="1" height="2"/><rect x="1" y="5" width="2" height="1"/><rect x="5" y="5" width="1" height="1"/></pattern><pattern id="dgL" width="7" height="7" patternUnits="userSpaceOnUse"><rect x="6" y="1" width="1" height="2"/><rect x="6" y="5" width="1" height="1"/></pattern><pattern id="dgT" width="7" height="7" patternUnits="userSpaceOnUse"><rect x="1" y="6" width="2" height="1"/><rect x="5" y="6" width="1" height="1"/></pattern><pattern id="dgC" width="7" height="7" patternUnits="userSpaceOnUse"><rect x="6" y="6" width="1" height="1"/></pattern></defs><rect width="609" height="406" fill="url(#dg)"/><rect width="29" height="406" fill="url(#dgL)"/><rect width="609" height="43" fill="url(#dgT)"/><rect width="29" height="43" fill="url(#dgC)"/></svg></div>
<div class="a" style="left:81px;top:585px;width:619px;height:6px;border-radius:0 0 5px 5px;background:linear-gradient(#27377c,#3d5099 60%,#5a70b6)"></div>
<div class="a" style="left:86px;top:560px;width:609px;height:24px;background:#e9eaee"></div>
<div class="a" style="left:258px;top:561px;width:2px;height:22px;border-left:1px solid #c3c4cc;border-right:1px solid #fbfbfd"></div>
<div class="a" style="left:333px;top:561px;width:2px;height:22px;border-left:1px solid #c3c4cc;border-right:1px solid #fbfbfd"></div>
<div class="a" style="left:385px;top:561px;width:2px;height:22px;border-left:1px solid #c3c4cc;border-right:1px solid #fbfbfd"></div>
<div class="a" style="left:433px;top:561px;width:2px;height:22px;border-left:1px solid #c3c4cc;border-right:1px solid #fbfbfd"></div>
<div class="a" style="left:511px;top:561px;width:2px;height:22px;border-left:1px solid #c3c4cc;border-right:1px solid #fbfbfd"></div>
<div class="a" style="left:621px;top:561px;width:2px;height:22px;border-left:1px solid #c3c4cc;border-right:1px solid #fbfbfd"></div>
<span class="t" style="left:263px;top:564.0px;font-size:12px;line-height:16px;color:#000;letter-spacing:-0.603px;">1.1 s</span>
<span class="t" style="left:338px;top:564.0px;font-size:12px;line-height:16px;color:#000;letter-spacing:-0.433px;">Bin:1x1</span>
<span class="t" style="left:388px;top:564.0px;font-size:12px;line-height:16px;color:#000;letter-spacing:-0.431px;">0.0°C</span>
<span class="t" style="left:438px;top:564.0px;font-size:12px;line-height:16px;color:#000;letter-spacing:0.033px;">MX=0 MY=0</span>
<span class="t" style="left:516px;top:564.0px;font-size:12px;line-height:16px;color:#000;letter-spacing:-0.288px;">Filt.=?</span>
<span class="t" style="left:626px;top:564.0px;font-size:12px;line-height:16px;color:#000;letter-spacing:-0.339px;width:54px;overflow:hidden;">Foc=800.0</span>
<div class="a" style="left:721px;top:242px;width:498px;height:277px;border-radius:5px;background:linear-gradient(90deg,#6279bd 0,#3f5198 2px,#33458c 4px,#33458c 494px,#3f5198 496px,#5a70b4 498px);box-shadow:0 0 0 1px rgba(10,16,50,.55)"></div>
<div class="a" style="left:722px;top:243px;width:496px;height:19px;border-radius:4px 4px 0 0;background:linear-gradient(#5b6a9e 0%,#414f88 20%,#232e66 45%,#263270 65%,#3a4a88 100%)"></div>
<span class="t" style="left:729px;top:245.0px;font-size:12px;line-height:16px;color:#7888c2;font-weight:bold;letter-spacing:-0.098px;">Flats-7</span>
<div class="wb" style="left:1192px;top:247px;width:17px;height:11px;background:linear-gradient(#8c2c3a,#5c1826);border-color:rgba(20,26,70,.7);box-shadow:0 0 0 1px rgba(130,150,210,.25);"><svg width="15" height="9" viewBox="0 0 15 9" style="left:0;top:0"><path d="M4.0 1.0L11.0 8.0M11.0 1.0L4.0 8.0" stroke="#fff" stroke-width="1.6" opacity="0.7"/></svg></div>
<div class="a" style="left:726px;top:262px;width:488px;height:252px;background:#e4e6ee"></div>
<div class="a" style="left:726px;top:262px;width:488px;height:8px;background:linear-gradient(#aebde0,#e4e6ee)"></div>
<div class="a" style="left:726px;top:395px;width:488px;height:50px;background:#efefef"></div>
<div class="a" style="left:726px;top:445px;width:488px;height:16px;background:linear-gradient(#e9e9ec,#e0e1e8)"></div>
<div class="a" style="left:726px;top:461px;width:488px;height:53px;background:linear-gradient(#e6e8f0,#dfe2ec)"></div>
<div class="a" style="left:724px;top:514px;width:492px;height:5px;border-radius:0 0 4px 4px;background:linear-gradient(#27377c,#3d5099 60%,#5a70b6)"></div>
<svg style="left:741px;top:262px;background:#000" width="455" height="133" viewBox="0 0 455 133"><path d="M194.5 133.0L195.0 113.0L195.7 100.5L197.6 88.7L201.5 81.0L205.4 73.0L209.3 68.0L217.2 58.5L223.0 51.6L228.9 41.8L234.7 32.0L240.6 22.3L245.5 16.4L252.3 13.5L261.0 12.6L269.9 12.0L279.7 8.6L289.4 3.7L294.0 2.3L297.3 1.8L300.0 2.6L302.1 4.7L307.0 14.5L311.9 32.0L315.8 51.6L319.7 79.0L322.7 98.5L324.6 118.0L326.0 133.0Z" fill="#fff"/><path d="M191.5 133V123" stroke="#fff" stroke-width="1"/><path d="M192.5 133V128" stroke="#fff" stroke-width="1"/><path d="M196.5 100V90" stroke="#fff" stroke-width="1"/><path d="M198.5 88V82" stroke="#fff" stroke-width="1"/><path d="M200.5 84V76" stroke="#fff" stroke-width="1"/><path d="M203.5 78V70" stroke="#fff" stroke-width="1"/><path d="M207.5 71V65" stroke="#fff" stroke-width="1"/><path d="M210.5 67V61" stroke="#fff" stroke-width="1"/><path d="M214.5 62V56" stroke="#fff" stroke-width="1"/><path d="M218.5 57V52" stroke="#fff" stroke-width="1"/><path d="M221.5 54V49" stroke="#fff" stroke-width="1"/><path d="M323.5 110V98" stroke="#fff" stroke-width="1"/><path d="M325.5 133V119" stroke="#fff" stroke-width="1"/><path d="M152.5 0V133" stroke="#fff" stroke-width="1" stroke-dasharray="2 2"/><path d="M303.5 0V133" stroke="#fff" stroke-width="1" stroke-dasharray="2 2"/><path d="M303.5 3V133" stroke="#000" stroke-width="1" stroke-dasharray="2 2" stroke-dashoffset="2"/></svg>
<div class="a" style="left:736px;top:416px;width:467px;height:8px;background:#e7e7e7;border:1px solid #d2d2d2"></div>
<div class="a" style="left:892px;top:416px;width:154px;height:8px;background:#0b78d6"></div>
<svg style="left:886.0px;top:427px" width="11" height="18"><path d="M5.5 0L11 5V18H0V5Z" fill="#0b78d6"/></svg>
<svg style="left:1042.0px;top:427px" width="11" height="18"><path d="M5.5 0L11 5V18H0V5Z" fill="#0b78d6"/></svg>
<span class="t" style="left:726.5px;top:470.0px;font-size:11px;line-height:15px;color:#000;letter-spacing:-0.277px;">Seuil Haut</span>
<span class="t" style="left:733px;top:492.0px;font-size:11px;line-height:15px;color:#000;letter-spacing:-0.609px;">Seuil Bas</span>
<div class="a" style="left:782px;top:468px;width:63px;height:19px;background:#fff;border:1px solid #b9bccb;border-top-color:#9a9db0;border-left-color:#9a9db0"></div>
<span class="t" style="left:786px;top:470.5px;font-size:11px;line-height:15px;color:#000;letter-spacing:-0.156px;">11785</span>
<div class="a" style="left:782px;top:490px;width:63px;height:19px;background:#fff;border:1px solid #b9bccb;border-top-color:#9a9db0;border-left-color:#9a9db0"></div>
<span class="t" style="left:786px;top:492.5px;font-size:11px;line-height:15px;color:#000;letter-spacing:-0.121px;">5693</span>
<div class="btn" style="left:849px;top:478px;width:49px;height:22px"></div>
<span class="t" style="left:860px;top:482.0px;font-size:11px;line-height:15px;color:#000;letter-spacing:-0.266px;">MAJ.</span>
<svg style="left:907px;top:482px" width="16" height="16"><rect width="16" height="16" fill="#fff"/><path d="M0 0L16 16H0Z" fill="#000"/></svg>
<div class="a" style="left:934px;top:472px;width:152px;height:35px;border:1px solid #c2c5d2;border-radius:4px;box-shadow:inset 1px 1px 0 #f8f8fc"></div>
<div class="a" style="left:942px;top:464px;width:44px;height:14px;background:#e4e6ee"></div>
<span class="t" style="left:944px;top:463.5px;font-size:11px;line-height:15px;color:#3b4a92;letter-spacing:-0.094px;">Palettes</span>
<div class="a" style="left:937px;top:479px;width:21px;height:22px;border:1px solid #5a6a9c;border-radius:3px;background:#9aa6c8;box-shadow:inset 0 0 0 1px #c8d0e8"></div>
<div class="a" style="left:940px;top:483px;width:15px;height:14px;background:linear-gradient(#000,#fff)"></div>
<div class="a" style="left:962px;top:484px;width:15px;height:14px;background:linear-gradient(#2a0010,#7a0848 30%,#8a40b0 60%,#7090f0 85%,#c0d0ff)"></div>
<div class="a" style="left:984px;top:484px;width:15px;height:14px;background:linear-gradient(#2030d0,#20b0e0 25%,#30d030 50%,#f0e020 75%,#e02010)"></div>
<div class="a" style="left:1006px;top:484px;width:15px;height:14px;background:linear-gradient(#f07010,#f0e020 30%,#30d030 55%,#20a0e0 80%,#2030c0)"></div>
<div class="btn" style="left:1028px;top:481px;width:51px;height:19px;border-radius:5px"></div>
<span class="t" style="left:1040px;top:483.5px;font-size:11px;line-height:15px;color:#000;letter-spacing:-0.125px;">Editer</span>
<div class="btn" style="left:1091px;top:477px;width:30px;height:27px;border-radius:5px"><svg width="28" height="25" style="left:0;top:0"><path d="M12 14L6 20" stroke="#e08438" stroke-width="2.6" stroke-linecap="round"/><circle cx="15" cy="10" r="5.5" fill="#f4f8fc" stroke="#58a4e0" stroke-width="1.4"/><path d="M12 10h6" stroke="#e03018" stroke-width="2"/></svg></div>
<div class="btn" style="left:1124px;top:477px;width:30px;height:27px;border-radius:5px"><svg width="28" height="25" style="left:0;top:0"><path d="M12 14L6 20" stroke="#e08438" stroke-width="2.6" stroke-linecap="round"/><circle cx="15" cy="10" r="5.5" fill="#f4f8fc" stroke="#58a4e0" stroke-width="1.4"/><path d="M12 10h6M15 7v6" stroke="#e03018" stroke-width="2"/></svg></div>
<div class="a" style="left:1160px;top:469px;width:53px;height:41px;border-radius:5px;border:1px solid #101840;background:linear-gradient(#64749f 0%,#3f4d80 14%,#283562 50%,#1b264e 100%);box-shadow:inset 0 0 0 1px rgba(140,155,205,.45)"></div>
<span class="t" style="left:1176px;top:482.5px;font-size:11px;line-height:15px;color:#fff;letter-spacing:-0.352px;">Plus</span>
<div class="a" style="left:1079px;top:567px;width:160px;height:161px;background:linear-gradient(103deg,rgba(255,255,255,0) 36%,rgba(255,255,255,.07) 46%,rgba(255,255,255,.02) 54%,rgba(255,255,255,0) 60%),linear-gradient(#2c2c2c 0,#2c2c2c 60%,#353535 68%,#414141 78%,#484848 90%,#4a4a4a 100%);box-shadow:inset 1px 1px 0 rgba(110,110,110,.35)"></div>
<svg style="left:1090px;top:579px" width="18" height="18" viewBox="0 0 18 18"><path d="M9 1L15 6L9 17L3 6Z" fill="#2a48e0"/><path d="M9 1L15 6L9 8L3 6Z" fill="#8aa0ff"/><path d="M9 8L15 6L9 17Z" fill="#1a2aa0"/><circle cx="14" cy="14" r="3" fill="#e02020"/><path d="M12.6 12.6l2.8 2.8m0-2.8l-2.8 2.8" stroke="#fff" stroke-width="1"/></svg>
<svg style="left:1130px;top:579px" width="18" height="18" viewBox="0 0 18 18"><rect x="1" y="3" width="13" height="12" fill="#3a3a3a"/><path d="M2 9c2-4 8-5 11-2c-3-1-6 0-7 2c1 2 4 3 7 2c-3 3-9 2-11-2z" fill="#76b900"/><rect x="14" y="5" width="2.4" height="7" fill="#f0e020"/><rect x="14" y="13.2" width="2.4" height="2.2" fill="#f0e020"/></svg>
<svg style="left:1169.5px;top:579px" width="18" height="18" viewBox="0 0 18 18"><rect x="1.5" y="2.5" width="15" height="12" fill="#3858c8" stroke="#a8b8e8"/><rect x="4" y="5" width="10" height="7" fill="#6a5ab0"/><circle cx="9" cy="8.5" r="1.6" fill="#e05060"/><rect x="1" y="14" width="16" height="2" fill="#c8d0e8"/></svg>
<svg style="left:1210px;top:579px" width="18" height="18" viewBox="0 0 18 18"><rect x="1" y="1" width="16" height="16" fill="#e63a3e"/><circle cx="10" cy="8" r="3.6" fill="none" stroke="#fff" stroke-width="1.8"/><path d="M6.4 5v10" stroke="#fff" stroke-width="1.8"/></svg>
<svg style="left:1090px;top:618.5px" width="18" height="18" viewBox="0 0 18 18"><path d="M2 6l13-3v10l-13 2z" fill="#dde4f4" stroke="#8090b8"/><path d="M4 7.5l9-2v6l-9 1.5z" fill="#3a5aa8"/><path d="M5 9l7-1.4" stroke="#fff" stroke-width="1.4"/></svg>
<svg style="left:1130px;top:618.5px" width="18" height="18" viewBox="0 0 18 18"><circle cx="9" cy="9" r="8" fill="#f39a1e"/><circle cx="9" cy="9" r="4" fill="none" stroke="#fff" stroke-width="2.2"/><path d="M13 9v4" stroke="#fff" stroke-width="2.2"/></svg>
<svg style="left:1169.5px;top:618.5px" width="18" height="18" viewBox="0 0 18 18"><path d="M2 2h11l2 2v10H2z" fill="#1a78d8"/><circle cx="8.5" cy="8" r="4" fill="#fff"/><path d="M5.5 8h6M6.5 6.6L5 8l1.5 1.4M10.5 6.6L12 8l-1.5 1.4" stroke="#1a78d8" stroke-width="1.1" fill="none"/><rect x="10" y="13" width="7" height="3.4" rx="1" fill="#30c030"/></svg>
<svg style="left:1210px;top:618.5px" width="18" height="18" viewBox="0 0 18 18"><path d="M4 14a3.5 3.5 0 0 1 0-7a4.5 4.5 0 0 1 8.5-1a3.8 3.8 0 0 1 1.5 8z" fill="#9a9a9a"/><path d="M2.5 15a2.5 2.5 0 0 1 .5-5a3 3 0 0 1 5.5 0a2.6 2.6 0 0 1 .5 5z" fill="#b8b8b8"/></svg>
<svg style="left:1090px;top:659px" width="18" height="18" viewBox="0 0 18 18"><rect x="1" y="1" width="16" height="16" rx="1.5" fill="#2a98e0"/><rect x="1" y="12" width="16" height="5" fill="#d8c890"/><rect x="4" y="3.5" width="8" height="5" fill="none" stroke="#fff"/><rect x="7" y="7" width="7" height="4.5" fill="#2a98e0" stroke="#fff"/></svg>
<svg style="left:1130px;top:659px" width="18" height="18" viewBox="0 0 18 18"><circle cx="6" cy="6" r="4" fill="#7ab030"/><circle cx="10" cy="11" r="5.6" fill="#f2c21a" stroke="#c88a10"/><text x="7.3" y="14.3" font-size="9" font-weight="bold" fill="#402000" font-family="Liberation Sans">2</text></svg>
<svg style="left:1169.5px;top:659px" width="18" height="18" viewBox="0 0 18 18"><rect x="3" y="2" width="12" height="9" fill="#8a8a8a" stroke="#5a5a5a"/><rect x="2" y="13" width="5" height="3" fill="#c8c8c8"/><rect x="10" y="13" width="5" height="3" fill="#c8c8c8"/><path d="M4.5 13v-2M12.5 13v-2" stroke="#aaa"/></svg>
<svg style="left:1210px;top:659px" width="18" height="18" viewBox="0 0 18 18"><path d="M15 5a7 7 0 1 0 0 9l-3-1.5a3.8 3.8 0 1 1 0-6z" fill="#d83020"/><path d="M14 2L6 10l-4 5l3 1l5-4z" fill="#e8c080"/><path d="M14 2l-5 5" stroke="#3070d0" stroke-width="2.2"/></svg>
<svg style="left:1090px;top:698.5px" width="18" height="18" viewBox="0 0 18 18"><path d="M4.5 6.5h6v10h-6z" fill="none" stroke="#f0f0f0" stroke-width="1.2"/><path d="M5.5 6.5v-4h4v4" fill="none" stroke="#f0f0f0" stroke-width="1.2"/><rect x="6.5" y="3.8" width=".9" height="1.2" fill="#fff"/><rect x="8" y="3.8" width=".9" height="1.2" fill="#fff"/><path d="M10.5 13.5l2 2l3.5-4" fill="none" stroke="#bbb" stroke-width="1.3"/></svg>
<div class="a" style="left:0;top:728px;width:1366px;height:40px;background:#1f1f21"></div>
<div class="a" style="left:476px;top:728px;width:42px;height:40px;background:#414144"></div>
<span class="t" style="left:35px;top:742.5px;font-size:13px;line-height:17px;color:#0e0e0f;letter-spacing:-0.23px;">3395</span>
<span class="t" style="left:85px;top:742.5px;font-size:13px;line-height:17px;color:#0e0e0f;letter-spacing:-0.901px;">503</span>
<span class="t" style="left:111px;top:742.5px;font-size:13px;line-height:17px;color:#0e0e0f;letter-spacing:-0.48px;">7142</span>
<span class="t" style="left:147px;top:742.5px;font-size:13px;line-height:17px;color:#0e0e0f;letter-spacing:-1.151px;">ADU</span>
<span class="t" style="left:244px;top:742.5px;font-size:13px;line-height:17px;color:#0e0e0f;letter-spacing:-0.725px;">(3x3)</span>
<span class="t" style="left:290px;top:742.5px;font-size:13px;line-height:17px;color:#0e0e0f;letter-spacing:-0.901px;">903</span>
<span class="t" style="left:335px;top:742.5px;font-size:13px;line-height:17px;color:#0e0e0f;letter-spacing:-0.742px;">1134</span>
<span class="t" style="left:425px;top:742.5px;font-size:13px;line-height:17px;color:#0e0e0f;letter-spacing:-0.238px;">gris</span>
<span class="t" style="left:805px;top:743.5px;font-size:13px;line-height:17px;color:#0e0e0f;letter-spacing:-0.746px;">Format 5202x3465x1 [Réels 32bits]&nbsp; Zoom = 1/8</span>
<svg style="left:16px;top:740px" width="16" height="16" viewBox="0 0 16 16"><path d="M0 2.2L6.5 1.3V7.6H0ZM7.4 1.2L16 0V7.6H7.4ZM0 8.4H6.5V14.7L0 13.8ZM7.4 8.4H16V16L7.4 14.8Z" fill="#fff"/></svg>
<svg style="left:62px;top:740px" width="21" height="16" viewBox="0 0 21 16"><rect x="5" y="1" width="11" height="13.5" fill="none" stroke="#fff" stroke-width="1.4"/><path d="M3 3H1V12.5H3M18 3H20V12.5H18" fill="none" stroke="#fff" stroke-width="1.4"/></svg>
<div class="a" style="left:104px;top:737px;width:1px;height:23px;background:#4a4a4c"></div><div class="a" style="left:106px;top:737px;width:1px;height:23px;background:#2e2e30"></div>
<svg style="left:130.0px;top:736.0px" width="24" height="24" viewBox="0 0 24 24"><path d="M2.5 11.5C3.5 5 8 2 12.5 2c6 0 9.5 4.500 9.500 10.500v2h-13.500c.3 3 2.800 4.300 5.600 4.300 2.600 0 4.800-.8 6.800-2v4.200c-2 1.200-4.700 1.800-7.700 1.800-6 0-10-3.700-10-9.300 0-3.600 2-6.600 5-8-2.300 1.300-4 3.500-4.700 6zM8.600 10.300h7.900c0-2.700-1.500-4.300-3.900-4.300-2.200 0-3.700 1.700-4 4.300z" fill="#1e7fdc"/></svg>
<svg style="left:174.0px;top:736.0px" width="24" height="24" viewBox="0 0 24 24"><path d="M1 5h8l2 2h12v13H1z" fill="#eec050"/><path d="M1 8h22v12H1z" fill="#fadc80"/><path d="M5.500 13h13v7h-13z" fill="#3a9be0"/><path d="M8.500 16h7v4h-7z" fill="#f8d667"/></svg>
<svg style="left:218.0px;top:736.0px" width="24" height="24" viewBox="0 0 24 24"><path d="M2 7h20v14H2z" fill="#fff"/><path d="M7.500 7c0-6 9-6 9 0" fill="none" stroke="#fff" stroke-width="1.600"/><path d="M7.200 10.800l4.200-.6v3.600h-4.200zM12.200 10.100l4.800-.7v4.400h-4.800zM7.200 14.500h4.200v3.600l-4.200-.6zM12.200 14.500h4.800v4.400l-4.800-.7z" fill="#1b1b1d"/></svg>
<svg style="left:263.0px;top:736.0px" width="24" height="24" viewBox="0 0 24 24"><rect x="1" y="1" width="22" height="22" fill="#14509e" stroke="#2a7ad8" stroke-width="1.2"/><text x="4.500" y="17" font-size="12" font-weight="bold" fill="#7ec0ff" font-family="Liberation Sans">Ps</text></svg>
<svg style="left:309.0px;top:736.0px" width="24" height="24" viewBox="0 0 24 24"><rect x="1" y="1" width="22" height="22" fill="#5a82c4"/><rect x="5" y="1" width="14" height="22" fill="#aac4ec"/><rect x="7" y="3" width="10" height="8" fill="#e8eef8"/><path d="M2.500 2v20M21.500 2v20" stroke="#dfe8f8" stroke-width="1.600" stroke-dasharray="2 2"/><rect x="6" y="13" width="12" height="8" fill="#6f93cf"/></svg>
<svg style="left:353.0px;top:736.0px" width="24" height="24" viewBox="0 0 24 24"><path d="M12 1L22 9L12 23L2 9Z" fill="#2244e8"/><path d="M12 1L22 9L12 12L2 9Z" fill="#8aa2ff"/><path d="M12 12L22 9L12 23Z" fill="#1428a8"/><path d="M12 1L16 9L12 12L8 9Z" fill="#c8d4ff"/></svg>
<svg style="left:397.0px;top:736.0px" width="24" height="24" viewBox="0 0 24 24"><circle cx="12" cy="12" r="10.500" fill="#e8641a"/><circle cx="11" cy="11" r="6.500" fill="#3a5fd0"/><path d="M2 9c2-5 6-7.500 11-7-3 1-5 3-5 5 3-1 6 1 6 4s-3 5-6 4c3 3 9 2 11-3 1 6-3 10.500-8 10.500-6 0-10.500-5-9-13.500z" fill="#f59a1c"/><path d="M2.500 8c1-1.500 2.500-2.500 4-2.500l1.500 3z" fill="#f8c83a"/></svg>
<svg style="left:441.0px;top:736.0px" width="24" height="24" viewBox="0 0 24 24"><circle cx="12" cy="11.500" r="10" fill="#12a5f4"/><text x="7.300" y="17" font-size="15" font-weight="bold" fill="#fff" font-family="Liberation Sans">S</text><circle cx="19" cy="19" r="5" fill="#f2a81c"/><text x="16.800" y="22" font-size="8" font-weight="bold" fill="#3a2000" font-family="Liberation Sans">2</text></svg>
<svg style="left:485.0px;top:736.0px" width="24" height="24" viewBox="0 0 24 24"><defs><linearGradient id="pl2" x1="0" y1="1" x2="0" y2="0"><stop offset="0" stop-color="#2a6de0"/><stop offset=".35" stop-color="#2fc94a"/><stop offset=".65" stop-color="#f2e22c"/><stop offset="1" stop-color="#e8322a"/></linearGradient></defs><path d="M3.500 18.500L12 5L20.500 18.500" fill="none" stroke="url(#pl2)" stroke-width="3.600" stroke-linejoin="round" stroke-linecap="round"/><path d="M3.500 19.500H20.500" stroke="#2230a8" stroke-width="3" stroke-linecap="round"/></svg>
<svg style="left:529.0px;top:736.0px" width="24" height="24" viewBox="0 0 24 24"><rect x="1" y="3" width="22" height="18" fill="#e8f0f8" stroke="#9ab"/><rect x="3" y="5" width="18" height="14" fill="#4aa0e0"/><path d="M3 19l5-7l4 4l3-2l6 5z" fill="#3a7a4a"/><path d="M3 12c5-3 12-3 18-1v-6h-18z" fill="#8ac8f0"/></svg>
<div class="a" style="left:579px;top:737px;width:1px;height:23px;background:#4a4a4c"></div><div class="a" style="left:581px;top:737px;width:1px;height:23px;background:#2e2e30"></div>
<span class="t" style="left:592px;top:740.0px;font-size:12px;line-height:16px;color:#fff;letter-spacing:-0.617px;">Bureau</span>
<svg style="left:636px;top:736px" width="18" height="12" viewBox="0 0 18 12"><path d="M4 11a3 3 0 0 1 0-6a4 4 0 0 1 7.500-1a3.500 3.500 0 0 1 2.500 7z" fill="#1e7fdc"/><path d="M3 11.500a2.300 2.300 0 0 1 .3-4.600a2.800 2.800 0 0 1 5.200 0a2.400 2.400 0 0 1 .5 4.600z" fill="#3a97ec"/></svg>
<span class="t" style="left:656px;top:735.0px;font-size:12px;line-height:16px;color:#fff;letter-spacing:-0.211px;">OneDrive</span>
<svg style="left:797px;top:735px" width="14" height="17" viewBox="0 0 14 17"><circle cx="7" cy="5" r="3.600" fill="#e8c8a0"/><path d="M3.500 4c0-4 7-4 7 0c-2-1.500-5-1.500-7 0z" fill="#6a4a2a"/><path d="M1 17c0-6 3-7.500 6-7.500s6 1.500 6 7.500z" fill="#4aa050"/></svg>
<span class="t" style="left:815.5px;top:735.0px;font-size:12px;line-height:16px;color:#fff;letter-spacing:0.186px;">virginie</span>
<svg style="left:955px;top:735px" width="19" height="17" viewBox="0 0 19 17"><rect x="1" y="1" width="17" height="11" fill="#2a8ae0" stroke="#bcd8f4"/><rect x="7" y="12.500" width="5" height="2" fill="#bcd8f4"/><rect x="4" y="14.500" width="11" height="1.600" fill="#dfe8f4"/></svg>
<span class="t" style="left:976.5px;top:735.0px;font-size:12px;line-height:16px;color:#fff;letter-spacing:-0.769px;">Ce PC</span>
<div class="a" style="left:168px;top:766px;width:35px;height:2px;background:#7cb8ea"></div>
<div class="a" style="left:258px;top:766px;width:36px;height:2px;background:#7cb8ea"></div>
<div class="a" style="left:348px;top:766px;width:35px;height:2px;background:#7cb8ea"></div>
<div class="a" style="left:392px;top:766px;width:34px;height:2px;background:#7cb8ea"></div>
<div class="a" style="left:436px;top:766px;width:39px;height:2px;background:#7cb8ea"></div>
<div class="a" style="left:476px;top:766px;width:42px;height:2px;background:#7cb8ea"></div>
<div class="a" style="left:524px;top:766px;width:35px;height:2px;background:#7cb8ea"></div>
<span class="t" style="left:1134px;top:728.5px;font-size:13px;line-height:17px;color:#fff;font-weight:bold;letter-spacing:-0.234px;">»</span>
<svg style="left:1152px;top:741px" width="14" height="12"><path d="M1.500 9.500L7 4L12.500 9.500" fill="none" stroke="#fff" stroke-width="1.500"/></svg>
<svg style="left:1174px;top:741px" width="18" height="14" viewBox="0 0 18 14"><rect x="4.500" y="3.500" width="12" height="8" fill="none" stroke="#fff" stroke-width="1.200"/><rect x="6" y="5" width="4" height="5" fill="#fff"/><path d="M2.500 1v3M5 1v3M1.500 4h4.500v2.500a2.200 2.200 0 0 1-4.500 0z" stroke="#fff" fill="#1b1b1d" stroke-width="1.100"/></svg>
<svg style="left:1200px;top:740px" width="17" height="16" viewBox="0 0 17 16"><path d="M2 14A12 12 0 0 1 14 2" fill="none" stroke="#fff" stroke-width="1.300"/><path d="M2 14A8.500 8.500 0 0 1 10.500 5.500" fill="none" stroke="#fff" stroke-width="1.300" transform="translate(2.800 2.800) scale(.8)"/><path d="M5.500 14A8.500 8.500 0 0 1 14 5.500" fill="none" stroke="#fff" stroke-width="1.300"/><path d="M9 14A5 5 0 0 1 14 9" fill="none" stroke="#fff" stroke-width="1.300"/><circle cx="13" cy="13" r="1.500" fill="#fff"/></svg>
<svg style="left:1222px;top:740px" width="18" height="16" viewBox="0 0 18 16"><path d="M1.500 5.500h3l4-3.500v12l-4-3.500h-3z" fill="none" stroke="#fff" stroke-width="1.200"/><path d="M10.500 5.500a3.500 3.500 0 0 1 0 5M12.500 3.500a6 6 0 0 1 0 9M14.500 1.500a9 9 0 0 1 0 13" fill="none" stroke="#fff" stroke-width="1.100"/></svg>
<span class="t" style="left:1263.5px;top:731.0px;font-size:12px;line-height:16px;color:#fff;letter-spacing:-0.606px;">00:42</span>
<span class="t" style="left:1248.5px;top:749.0px;font-size:12px;line-height:16px;color:#fff;letter-spacing:-0.206px;">02/10/2016</span>
<svg style="left:1324px;top:739px" width="18" height="18" viewBox="0 0 18 18"><path d="M1.500 1.500h15v11h-5.500l-2.500 3v-3h-7z" fill="none" stroke="#fff" stroke-width="1.300"/></svg>
<div class="a" style="left:1361px;top:728px;width:1px;height:40px;background:#4c4c4e"></div>
</body></html>
